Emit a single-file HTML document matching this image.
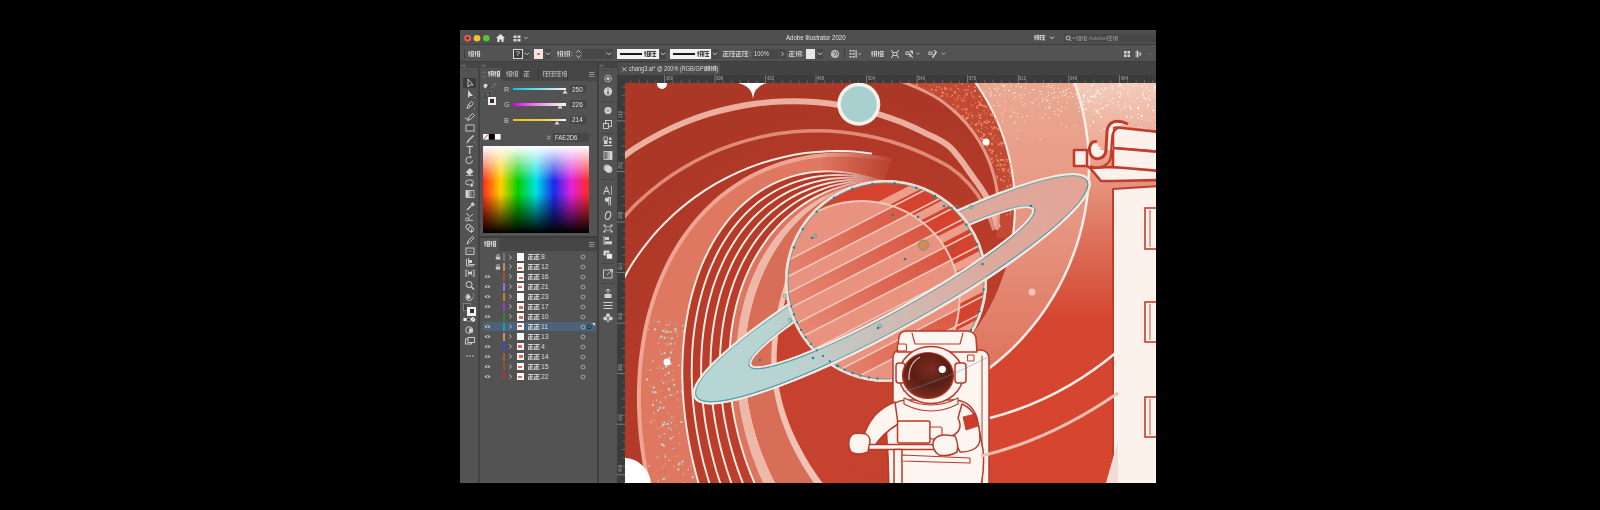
<!DOCTYPE html><html><head><meta charset="utf-8"><style>
html,body{margin:0;padding:0;}
body{width:1600px;height:510px;background:#000;position:relative;overflow:hidden;font-family:"Liberation Sans",sans-serif;}
.t{position:absolute;white-space:nowrap;line-height:1;font-family:"Liberation Sans",sans-serif;}
svg{position:absolute;overflow:visible;}
</style></head><body>
<div style="position:absolute;left:460px;top:30px;width:696px;height:453px;background:#535353;"></div><div style="position:absolute;left:460px;top:30px;width:696px;height:15px;background:#4f4f4f;border-radius:3px 3px 0 0;"></div><div style="position:absolute;left:460px;top:44px;width:696px;height:1px;background:#3d3d3d;"></div><div style="position:absolute;left:460px;top:45px;width:696px;height:16px;background:#535353;"></div><div style="position:absolute;left:460px;top:61px;width:696px;height:1px;background:#3f3f3f;"></div><div style="position:absolute;left:460px;top:62px;width:157px;height:6px;background:#464646;"></div><div style="position:absolute;left:599px;top:62px;width:557px;height:13px;background:#434343;"></div><div style="position:absolute;left:460px;top:68px;width:18px;height:415px;background:#535353;"></div><div style="position:absolute;left:478px;top:68px;width:2px;height:415px;background:#434343;"></div><div style="position:absolute;left:480px;top:68px;width:117px;height:415px;background:#535353;"></div><div style="position:absolute;left:597px;top:62px;width:2px;height:421px;background:#3e3e3e;"></div><div style="position:absolute;left:599px;top:68px;width:18px;height:415px;background:#535353;"></div><div style="position:absolute;left:617px;top:75px;width:8px;height:408px;background:#3b3b3b;"></div><div style="position:absolute;left:617px;top:75px;width:539px;height:8px;background:#3b3b3b;"></div><svg style="left:625px;top:83px;" width="531" height="400" viewBox="625 83 531 400"><defs>
<clipPath id="cv"><rect x="625" y="83" width="531" height="400"/></clipPath>
<linearGradient id="gH" x1="0" y1="83" x2="0" y2="320" gradientUnits="userSpaceOnUse">
 <stop offset="0" stop-color="#f2cbbb"/><stop offset="0.3" stop-color="#eba58f"/><stop offset="0.62" stop-color="#df7660"/><stop offset="1" stop-color="#d5452f"/></linearGradient>
<linearGradient id="gF" x1="0" y1="83" x2="0" y2="370" gradientUnits="userSpaceOnUse">
 <stop offset="0" stop-color="#eaa892"/><stop offset="0.5" stop-color="#e69580"/><stop offset="1" stop-color="#de745c"/></linearGradient>
<linearGradient id="gRing" x1="700" y1="0" x2="1090" y2="0" gradientUnits="userSpaceOnUse">
 <stop offset="0" stop-color="#b4d6d4"/><stop offset="0.22" stop-color="#b8d4d2"/><stop offset="0.45" stop-color="#cdbdb6"/><stop offset="0.7" stop-color="#dcaa9e"/><stop offset="1" stop-color="#e3a496"/></linearGradient>
<clipPath id="sph"><circle cx="887" cy="281" r="99"/></clipPath>
<radialGradient id="gVisor" cx="0.4" cy="0.35" r="0.7">
 <stop offset="0" stop-color="#9a4030"/><stop offset="0.6" stop-color="#5e1e14"/><stop offset="1" stop-color="#3a120c"/></radialGradient>
</defs><g clip-path="url(#cv)"><radialGradient id="gBase" cx="880" cy="420" r="330" gradientUnits="userSpaceOnUse"><stop offset="0" stop-color="#c8432f"/><stop offset="0.6" stop-color="#b93c2a"/><stop offset="1" stop-color="#ab3726"/></radialGradient><rect x="620" y="78" width="540" height="410" fill="url(#gBase)"/><clipPath id="outG"><path d="M500 -100 H1200 V600 H500 Z M836.0 167.0 m-253.0 0 a253.0 253.0 0 1 0 506.0 0 a253.0 253.0 0 1 0 -506.0 0 Z" clip-rule="evenodd"/></clipPath><rect x="960" y="78" width="200" height="412" fill="url(#gH)" clip-path="url(#outG)"/><clipPath id="inG"><circle cx="836.0" cy="167.0" r="253.0"/></clipPath><clipPath id="outE"><path clip-rule="evenodd" d="M500 -100 H1200 V600 H500 Z M801.2 206.3 m-213.7 0 a213.7 213.7 0 1 0 427.4 0 a213.7 213.7 0 1 0 -427.4 0 Z"/></clipPath><clipPath id="outA2"><path clip-rule="evenodd" d="M500 -100 H1200 V600 H500 Z M864.4 210.7 m-134.1 0 a134.1 134.1 0 1 0 268.2 0 a134.1 134.1 0 1 0 -268.2 0 Z"/></clipPath><clipPath id="inE"><circle cx="801.2" cy="206.3" r="213.7"/></clipPath><g clip-path="url(#inG)"><g clip-path="url(#outE)"><rect x="900" y="78" width="260" height="420" fill="url(#gF)"/></g></g><g clip-path="url(#inE)"><g clip-path="url(#outA2)"><rect x="880" y="78" width="200" height="160" fill="#c24a34"/></g></g><path d="M612.0 164.9 C616.0 162.0 628.1 152.8 636.1 147.6 C644.2 142.3 652.2 137.8 660.3 133.6 C668.3 129.4 676.4 125.8 684.4 122.5 C692.5 119.2 700.5 116.4 708.6 113.9 C716.6 111.5 724.7 109.4 732.7 107.7 C740.8 106.0 748.8 104.6 756.9 103.6 C764.9 102.6 773.0 101.9 781.0 101.6 C789.0 101.2 797.1 101.2 805.1 101.5 C813.2 101.9 821.2 102.5 829.3 103.5 C837.3 104.6 845.4 105.9 853.4 107.6 C861.5 109.3 869.5 111.4 877.6 113.8 C885.6 116.3 893.7 119.1 901.7 122.3 C909.8 125.6 917.8 129.2 925.9 133.4 C933.9 137.5 942.1 140.0 950.0 147.3 C957.9 154.5 966.7 168.2 973.0 177.0 C979.3 185.8 983.8 191.5 988.0 200.0 C992.2 208.5 996.3 223.3 998.0 228.0" stroke="#eaaf9e" stroke-width="6" fill="none"/><path d="M864.4 70.0 C871.4 72.2 894.6 78.9 906.4 83.3 C918.1 87.8 927.2 92.2 935.0 96.7 C942.7 101.1 947.8 105.6 953.0 110.0 C958.2 114.4 962.3 118.9 966.1 123.3 C970.0 127.8 973.2 132.2 976.2 136.7 C979.2 141.1 981.7 145.6 984.0 150.0 C986.2 154.4 988.2 158.9 989.9 163.3 C991.5 167.8 992.9 172.2 994.1 176.7 C995.3 181.1 996.2 185.6 996.9 190.0 C997.6 194.4 998.1 198.9 998.3 203.3 C998.5 207.8 998.6 212.2 998.4 216.7 C998.2 221.1 997.3 227.8 997.1 230.0" stroke="#e3988a" stroke-width="3" fill="none"/><path d="M612.0 231.0 C616.0 226.5 628.1 212.0 636.1 204.1 C644.2 196.2 652.2 189.5 660.3 183.4 C668.3 177.2 676.4 172.0 684.4 167.2 C692.5 162.4 700.5 158.2 708.6 154.5 C716.6 150.8 724.7 147.6 732.7 144.9 C740.8 142.1 748.8 139.8 756.9 137.9 C764.9 135.9 773.0 134.4 781.0 133.3 C789.0 132.2 797.1 131.4 805.1 131.1 C813.2 130.7 821.2 130.7 829.3 131.1 C837.3 131.5 845.4 132.2 853.4 133.4 C861.5 134.5 869.5 136.0 877.6 138.0 C885.6 139.9 893.7 142.2 901.7 145.0 C909.8 147.8 917.8 151.0 925.9 154.7 C933.9 158.4 942.8 162.5 950.0 167.4 C957.2 172.3 963.3 177.7 969.0 184.0 C974.7 190.3 979.8 197.3 984.0 205.0 C988.2 212.7 992.3 225.8 994.0 230.0" stroke="#e08a78" stroke-width="3.5" fill="none"/><path d="M605.0 323.3 C608.7 314.8 619.8 286.0 627.2 272.2 C634.7 258.3 642.1 249.3 649.5 240.0 C656.9 230.7 664.3 223.3 671.8 216.3 C679.2 209.3 686.6 203.4 694.0 197.9 C701.4 192.4 708.8 187.7 716.2 183.4 C723.7 179.1 731.1 175.4 738.5 172.1 C745.9 168.8 753.3 165.9 760.8 163.4 C768.2 161.0 775.6 158.9 783.0 157.2 C790.4 155.5 797.8 154.1 805.2 153.1 C812.7 152.2 820.1 151.5 827.5 151.2 C834.9 150.9 842.3 150.9 849.8 151.3 C857.2 151.7 868.3 153.1 872.0 153.5" stroke="#fbeee8" stroke-width="2" fill="none"/><path d="M965.8 70.0 C967.7 72.5 973.7 80.0 977.1 85.0 C980.6 90.0 983.7 95.0 986.6 100.0 C989.5 105.0 992.0 110.0 994.4 115.0 C996.8 120.0 998.9 125.0 1000.8 130.0 C1002.7 135.0 1004.4 140.0 1005.9 145.0 C1007.4 150.0 1008.7 155.0 1009.8 160.0 C1010.9 165.0 1011.9 170.0 1012.6 175.0 C1013.3 180.0 1013.9 185.0 1014.3 190.0 C1014.7 195.0 1014.9 200.0 1014.9 205.0 C1014.9 210.0 1014.8 215.0 1014.5 220.0 C1014.1 225.0 1013.6 230.0 1013.0 235.0 C1012.3 240.0 1010.8 247.5 1010.4 250.0" stroke="#fbeee8" stroke-width="2" fill="none"/><path d="M1069.7 70.0 C1070.9 73.4 1075.0 83.8 1077.2 90.6 C1079.4 97.5 1081.2 104.4 1082.8 111.2 C1084.3 118.1 1085.6 125.0 1086.5 131.9 C1087.5 138.8 1088.2 145.6 1088.6 152.5 C1089.0 159.4 1089.1 166.2 1088.9 173.1 C1088.8 180.0 1088.3 186.9 1087.6 193.8 C1086.8 200.6 1085.8 207.5 1084.5 214.4 C1083.2 221.2 1081.6 228.1 1079.7 235.0 C1077.8 241.9 1075.6 248.8 1073.0 255.6 C1070.4 262.5 1067.5 269.4 1064.2 276.2 C1060.9 283.1 1057.3 290.0 1053.1 296.9 C1049.0 303.8 1044.5 310.6 1039.4 317.5 C1034.2 324.4 1028.7 331.2 1022.3 338.1 C1016.0 345.0 1009.2 351.9 1001.0 358.8 C992.9 365.6 984.6 372.5 973.5 379.4 C962.4 386.2 941.1 396.6 934.6 400.0" stroke="#fbeee8" stroke-width="2.5" fill="none"/><linearGradient id="gmD" x1="600" y1="0" x2="1000" y2="0" gradientUnits="userSpaceOnUse"><stop offset="0" stop-color="#fff"/><stop offset="0.55" stop-color="#fff"/><stop offset="0.75" stop-color="#000"/></linearGradient><mask id="mD" maskUnits="userSpaceOnUse" x="600" y="70" width="560" height="420"><rect x="600" y="70" width="560" height="420" fill="url(#gmD)"/></mask><g mask="url(#mD)"><path d="M1009.0 821.9 L985.7 822.2 L962.3 820.1 L939.2 815.7 L916.4 809.2 L894.3 800.8 L873.0 790.8 L852.7 779.4 L833.4 766.9 L815.2 753.5 L798.2 739.4 L782.3 724.8 L767.6 709.8 L754.0 694.7 L741.4 679.5 L729.9 664.3 L719.4 649.2 L709.8 634.3 L701.1 619.6 L693.1 605.2 L686.0 591.0 L679.5 577.2 L673.7 563.7 L668.4 550.6 L663.8 537.7 L659.6 525.3 L655.9 513.1 L652.7 501.2 L649.8 489.7 L647.4 478.5 L645.3 467.5 L643.5 456.8 L642.1 446.4 L640.9 436.3 L640.0 426.3 L639.4 416.6 L639.0 407.2 L638.9 397.9 L639.0 388.8 L639.3 379.9 L639.8 371.2 L640.5 362.6 L641.5 354.3 L642.6 346.0 L643.9 337.9 L645.4 330.0 L647.1 322.2 L649.0 314.5 L651.1 307.0 L653.4 299.6 L655.8 292.3 L658.5 285.1 L661.4 278.1 L664.4 271.2 L667.6 264.4 L671.1 257.8 L674.7 251.3 L678.6 244.9 L682.6 238.7 L686.9 232.6 L691.3 226.8 L696.0 221.0 L700.8 215.5 L705.9 210.2 L711.2 205.0 L716.6 200.1 L722.2 195.3 L728.1 190.8 L734.1 186.6 L740.2 182.6 L746.6 178.8 L753.1 175.3 L759.7 172.1 L766.4 169.1 L773.3 166.4 L780.3 164.0 L787.4 161.8 L794.6 160.0 L801.8 158.4 L809.1 157.1 L816.5 156.1 L823.9 155.3 L831.4 154.8 L838.9 154.6 L846.4 154.7 L853.9 155.0 L861.5 155.5 L869.0 156.4 L876.6 157.4 L884.2 158.7 L891.8 160.3 L883.7 182.4 L877.4 180.1 L871.0 178.0 L864.6 176.2 L858.0 174.7 L851.4 173.4 L844.7 172.4 L838.0 171.8 L831.2 171.4 L824.5 171.4 L817.7 171.8 L811.0 172.4 L804.3 173.5 L797.7 174.9 L791.2 176.7 L784.8 178.9 L778.5 181.4 L772.4 184.2 L766.5 187.3 L760.8 190.8 L755.3 194.5 L750.0 198.5 L744.9 202.8 L740.1 207.2 L735.5 211.9 L731.1 216.7 L727.0 221.7 L723.1 226.8 L719.5 232.0 L716.0 237.3 L712.8 242.8 L709.8 248.2 L707.0 253.8 L704.3 259.4 L701.9 265.0 L699.6 270.7 L697.5 276.5 L695.6 282.2 L693.8 288.1 L692.1 293.9 L690.6 299.8 L689.2 305.7 L688.0 311.7 L686.9 317.8 L685.9 323.8 L685.0 330.0 L684.3 336.2 L683.6 342.5 L683.1 348.9 L682.7 355.4 L682.5 362.0 L682.3 368.6 L682.3 375.5 L682.5 382.4 L682.7 389.5 L683.2 396.7 L683.7 404.2 L684.5 411.8 L685.4 419.6 L686.5 427.6 L687.8 435.9 L689.3 444.4 L691.1 453.2 L693.1 462.2 L695.4 471.6 L698.0 481.2 L701.0 491.2 L704.3 501.6 L708.1 512.2 L712.3 523.3 L717.0 534.7 L722.3 546.5 L728.2 558.6 L734.8 571.0 L742.1 583.8 L750.1 596.8 L759.1 609.9 L768.9 623.1 L779.7 636.3 L791.4 649.3 L804.2 662.0 L818.0 674.1 L832.8 685.4 L848.5 695.6 L865.0 704.6 L882.2 711.9 L899.9 717.4 L917.8 720.8 L935.8 721.9 L953.6 720.7 L970.8 716.9 Z" fill="#df7860"/><path d="M1009.0 821.9 L985.7 822.2 L962.3 820.1 L939.2 815.7 L916.4 809.2 L894.3 800.8 L873.0 790.8 L852.7 779.4 L833.4 766.9 L815.2 753.5 L798.2 739.4 L782.3 724.8 L767.6 709.8 L754.0 694.7 L741.4 679.5 L729.9 664.3 L719.4 649.2 L709.8 634.3 L701.1 619.6 L693.1 605.2 L686.0 591.0 L679.5 577.2 L673.7 563.7 L668.4 550.6 L663.8 537.7 L659.6 525.3 L655.9 513.1 L652.7 501.2 L649.8 489.7 L647.4 478.5 L645.3 467.5 L643.5 456.8 L642.1 446.4 L640.9 436.3 L640.0 426.3 L639.4 416.6 L639.0 407.2 L638.9 397.9 L639.0 388.8 L639.3 379.9 L639.8 371.2 L640.5 362.6 L641.5 354.3 L642.6 346.0 L643.9 337.9 L645.4 330.0 L647.1 322.2 L649.0 314.5 L651.1 307.0 L653.4 299.6 L655.8 292.3 L658.5 285.1 L661.4 278.1 L664.4 271.2 L667.6 264.4 L671.1 257.8 L674.7 251.3 L678.6 244.9 L682.6 238.7 L686.9 232.6 L691.3 226.8 L696.0 221.0 L700.8 215.5 L705.9 210.2 L711.2 205.0 L716.6 200.1 L722.2 195.3 L728.1 190.8 L734.1 186.6 L740.2 182.6 L746.6 178.8 L753.1 175.3 L759.7 172.1 L766.4 169.1 L773.3 166.4 L780.3 164.0 L787.4 161.8 L794.6 160.0 L801.8 158.4 L809.1 157.1 L816.5 156.1 L823.9 155.3 L831.4 154.8 L838.9 154.6 L846.4 154.7 L853.9 155.0 L861.5 155.5 L869.0 156.4 L876.6 157.4 L884.2 158.7 L891.8 160.3" fill="none" stroke="#eda594" stroke-width="4"/><rect x="701.4" y="538.6" width="1.5" height="1.5" fill="#b8d8d4"/><rect x="678.9" y="432.7" width="1" height="1" fill="#b8d8d4"/><rect x="683.5" y="498.9" width="1" height="1" fill="#b8d8d4"/><rect x="668.1" y="337.3" width="1" height="1" fill="#b8d8d4"/><rect x="648.3" y="465.3" width="1.5" height="1.5" fill="#b8d8d4"/><rect x="696.7" y="497.1" width="1" height="1" fill="#b8d8d4"/><rect x="771.2" y="678.8" width="1" height="1" fill="#b8d8d4"/><rect x="663.5" y="433.3" width="1.5" height="1.5" fill="#b8d8d4"/><rect x="683.3" y="482.0" width="1" height="1" fill="#b8d8d4"/><rect x="772.4" y="675.8" width="1.5" height="1.5" fill="#b8d8d4"/><rect x="655.8" y="399.5" width="1.5" height="1.5" fill="#b8d8d4"/><rect x="687.6" y="468.8" width="1.5" height="1.5" fill="#b8d8d4"/><rect x="699.3" y="543.6" width="2" height="2" fill="#b8d8d4"/><rect x="789.3" y="671.6" width="1.5" height="1.5" fill="#b8d8d4"/><rect x="670.7" y="421.9" width="1.5" height="1.5" fill="#b8d8d4"/><rect x="671.0" y="394.4" width="1" height="1" fill="#b8d8d4"/><rect x="668.9" y="483.6" width="1" height="1" fill="#b8d8d4"/><rect x="690.5" y="502.3" width="1.5" height="1.5" fill="#b8d8d4"/><rect x="660.8" y="353.4" width="1.5" height="1.5" fill="#b8d8d4"/><rect x="676.2" y="398.6" width="1" height="1" fill="#b8d8d4"/><rect x="739.5" y="627.8" width="2" height="2" fill="#b8d8d4"/><rect x="664.7" y="365.6" width="1.5" height="1.5" fill="#b8d8d4"/><rect x="673.8" y="330.1" width="1" height="1" fill="#b8d8d4"/><rect x="691.8" y="476.4" width="2" height="2" fill="#b8d8d4"/><rect x="669.4" y="529.3" width="1" height="1" fill="#b8d8d4"/><rect x="735.2" y="599.6" width="1" height="1" fill="#b8d8d4"/><rect x="815.3" y="709.9" width="1.5" height="1.5" fill="#b8d8d4"/><rect x="670.7" y="428.9" width="1.5" height="1.5" fill="#b8d8d4"/><rect x="669.6" y="437.5" width="2" height="2" fill="#b8d8d4"/><rect x="658.1" y="321.1" width="1.5" height="1.5" fill="#b8d8d4"/><rect x="665.1" y="397.3" width="1" height="1" fill="#b8d8d4"/><rect x="736.7" y="603.0" width="1.5" height="1.5" fill="#b8d8d4"/><rect x="666.4" y="330.8" width="1.5" height="1.5" fill="#b8d8d4"/><rect x="677.9" y="464.0" width="1.5" height="1.5" fill="#b8d8d4"/><rect x="660.9" y="426.4" width="1" height="1" fill="#b8d8d4"/><rect x="667.8" y="372.2" width="1.5" height="1.5" fill="#b8d8d4"/><rect x="652.0" y="403.9" width="2" height="2" fill="#b8d8d4"/><rect x="711.0" y="598.6" width="1.5" height="1.5" fill="#b8d8d4"/><rect x="648.1" y="328.9" width="1" height="1" fill="#b8d8d4"/><rect x="674.8" y="495.7" width="1" height="1" fill="#b8d8d4"/><rect x="683.4" y="473.3" width="1" height="1" fill="#b8d8d4"/><rect x="670.3" y="363.6" width="1" height="1" fill="#b8d8d4"/><rect x="686.5" y="493.4" width="2" height="2" fill="#b8d8d4"/><rect x="676.1" y="492.4" width="1" height="1" fill="#b8d8d4"/><rect x="751.3" y="648.3" width="1" height="1" fill="#b8d8d4"/><rect x="659.5" y="435.3" width="1" height="1" fill="#b8d8d4"/><rect x="817.6" y="720.9" width="1" height="1" fill="#b8d8d4"/><rect x="682.0" y="463.8" width="1" height="1" fill="#b8d8d4"/><rect x="799.8" y="703.5" width="1.5" height="1.5" fill="#b8d8d4"/><rect x="715.1" y="591.1" width="2" height="2" fill="#b8d8d4"/><rect x="667.6" y="413.1" width="1" height="1" fill="#b8d8d4"/><rect x="668.6" y="459.8" width="1" height="1" fill="#b8d8d4"/><rect x="661.2" y="380.1" width="1" height="1" fill="#b8d8d4"/><rect x="664.2" y="454.8" width="1" height="1" fill="#b8d8d4"/><rect x="671.6" y="348.9" width="1" height="1" fill="#b8d8d4"/><rect x="652.7" y="386.5" width="2" height="2" fill="#b8d8d4"/><rect x="699.0" y="548.7" width="1" height="1" fill="#b8d8d4"/><rect x="653.1" y="412.2" width="1.5" height="1.5" fill="#b8d8d4"/><rect x="669.7" y="342.7" width="2" height="2" fill="#b8d8d4"/><rect x="752.2" y="629.3" width="1" height="1" fill="#b8d8d4"/><rect x="726.5" y="588.5" width="1" height="1" fill="#b8d8d4"/><rect x="660.3" y="335.7" width="2" height="2" fill="#b8d8d4"/><rect x="721.6" y="608.6" width="2" height="2" fill="#b8d8d4"/><rect x="740.4" y="633.9" width="2" height="2" fill="#b8d8d4"/><rect x="692.3" y="553.5" width="1.5" height="1.5" fill="#b8d8d4"/><rect x="814.2" y="725.3" width="1.5" height="1.5" fill="#b8d8d4"/><rect x="667.8" y="474.2" width="1" height="1" fill="#b8d8d4"/><rect x="670.3" y="331.1" width="1.5" height="1.5" fill="#b8d8d4"/><rect x="668.3" y="389.3" width="1.5" height="1.5" fill="#b8d8d4"/><rect x="675.5" y="522.4" width="1.5" height="1.5" fill="#b8d8d4"/><rect x="787.6" y="687.1" width="1" height="1" fill="#b8d8d4"/><rect x="710.7" y="568.3" width="1" height="1" fill="#b8d8d4"/><rect x="788.9" y="682.4" width="1.5" height="1.5" fill="#b8d8d4"/><rect x="654.0" y="320.6" width="1" height="1" fill="#b8d8d4"/><rect x="676.8" y="335.7" width="1" height="1" fill="#b8d8d4"/><rect x="731.4" y="616.6" width="1" height="1" fill="#b8d8d4"/><rect x="715.0" y="565.6" width="1" height="1" fill="#b8d8d4"/><rect x="815.4" y="711.9" width="2" height="2" fill="#b8d8d4"/><rect x="759.7" y="673.1" width="2" height="2" fill="#b8d8d4"/><rect x="691.3" y="578.2" width="1" height="1" fill="#b8d8d4"/><rect x="659.6" y="366.2" width="1" height="1" fill="#b8d8d4"/><rect x="649.7" y="369.1" width="1.5" height="1.5" fill="#b8d8d4"/><rect x="690.9" y="488.8" width="1.5" height="1.5" fill="#b8d8d4"/><rect x="672.3" y="436.0" width="1" height="1" fill="#b8d8d4"/><rect x="750.4" y="653.3" width="1.5" height="1.5" fill="#b8d8d4"/><rect x="719.3" y="582.1" width="1.5" height="1.5" fill="#b8d8d4"/><rect x="739.3" y="630.6" width="1" height="1" fill="#b8d8d4"/><rect x="673.5" y="466.0" width="1" height="1" fill="#b8d8d4"/><rect x="747.3" y="653.6" width="1" height="1" fill="#b8d8d4"/><rect x="662.8" y="444.8" width="2" height="2" fill="#b8d8d4"/><rect x="660.1" y="390.5" width="1" height="1" fill="#b8d8d4"/><rect x="801.4" y="716.2" width="2" height="2" fill="#b8d8d4"/><rect x="665.0" y="396.7" width="1" height="1" fill="#b8d8d4"/><rect x="659.3" y="368.6" width="1" height="1" fill="#b8d8d4"/><rect x="779.4" y="648.7" width="2" height="2" fill="#b8d8d4"/><rect x="672.3" y="448.3" width="1" height="1" fill="#b8d8d4"/><rect x="690.3" y="465.8" width="1" height="1" fill="#b8d8d4"/><rect x="663.5" y="423.6" width="1.5" height="1.5" fill="#b8d8d4"/><rect x="667.6" y="371.7" width="2" height="2" fill="#b8d8d4"/><rect x="669.6" y="484.4" width="1.5" height="1.5" fill="#b8d8d4"/><rect x="651.9" y="391.3" width="1.5" height="1.5" fill="#b8d8d4"/><rect x="657.3" y="428.0" width="1" height="1" fill="#b8d8d4"/><rect x="817.8" y="698.9" width="2" height="2" fill="#b8d8d4"/><rect x="711.0" y="569.3" width="2" height="2" fill="#b8d8d4"/><rect x="673.1" y="383.8" width="2" height="2" fill="#b8d8d4"/><rect x="816.5" y="711.9" width="2" height="2" fill="#b8d8d4"/><rect x="657.1" y="320.8" width="1" height="1" fill="#b8d8d4"/><rect x="756.3" y="622.8" width="1" height="1" fill="#b8d8d4"/><rect x="660.9" y="443.4" width="2" height="2" fill="#b8d8d4"/><rect x="659.4" y="350.1" width="1" height="1" fill="#b8d8d4"/><rect x="663.6" y="336.8" width="2" height="2" fill="#b8d8d4"/><rect x="698.7" y="568.5" width="1.5" height="1.5" fill="#b8d8d4"/><rect x="678.3" y="364.6" width="1.5" height="1.5" fill="#b8d8d4"/><rect x="722.8" y="566.5" width="1" height="1" fill="#b8d8d4"/><rect x="685.8" y="541.2" width="1.5" height="1.5" fill="#b8d8d4"/><rect x="666.5" y="423.0" width="2" height="2" fill="#b8d8d4"/><rect x="677.3" y="468.5" width="2" height="2" fill="#b8d8d4"/><rect x="674.3" y="343.7" width="1" height="1" fill="#b8d8d4"/><rect x="802.4" y="699.3" width="1.5" height="1.5" fill="#b8d8d4"/><rect x="667.8" y="488.5" width="1" height="1" fill="#b8d8d4"/><rect x="674.9" y="496.0" width="1.5" height="1.5" fill="#b8d8d4"/><rect x="688.4" y="505.6" width="2" height="2" fill="#b8d8d4"/><rect x="761.4" y="660.1" width="1" height="1" fill="#b8d8d4"/><rect x="674.5" y="493.9" width="2" height="2" fill="#b8d8d4"/><rect x="751.0" y="637.4" width="1" height="1" fill="#b8d8d4"/><rect x="696.7" y="530.0" width="1" height="1" fill="#b8d8d4"/><rect x="655.3" y="391.6" width="1.5" height="1.5" fill="#b8d8d4"/><rect x="667.6" y="388.0" width="1.5" height="1.5" fill="#b8d8d4"/><rect x="759.4" y="674.4" width="1.5" height="1.5" fill="#b8d8d4"/><rect x="663.7" y="351.9" width="2" height="2" fill="#b8d8d4"/><rect x="674.6" y="328.1" width="2" height="2" fill="#b8d8d4"/><rect x="654.1" y="328.3" width="2" height="2" fill="#b8d8d4"/><rect x="665.8" y="330.1" width="1" height="1" fill="#b8d8d4"/><rect x="670.9" y="337.4" width="2" height="2" fill="#b8d8d4"/><rect x="772.7" y="669.6" width="1" height="1" fill="#b8d8d4"/><rect x="663.6" y="421.6" width="1.5" height="1.5" fill="#b8d8d4"/><rect x="658.0" y="480.3" width="1" height="1" fill="#b8d8d4"/><rect x="691.8" y="517.6" width="1" height="1" fill="#b8d8d4"/><rect x="676.5" y="455.6" width="1" height="1" fill="#b8d8d4"/><rect x="676.4" y="489.4" width="2" height="2" fill="#b8d8d4"/><rect x="662.8" y="406.7" width="2" height="2" fill="#b8d8d4"/><rect x="773.6" y="666.2" width="1.5" height="1.5" fill="#b8d8d4"/><rect x="727.7" y="589.0" width="1" height="1" fill="#b8d8d4"/><rect x="816.0" y="708.1" width="1" height="1" fill="#b8d8d4"/><rect x="737.0" y="601.0" width="1" height="1" fill="#b8d8d4"/><rect x="709.8" y="573.2" width="2" height="2" fill="#b8d8d4"/><rect x="675.5" y="425.0" width="1" height="1" fill="#b8d8d4"/><rect x="657.7" y="342.7" width="1" height="1" fill="#b8d8d4"/><rect x="682.9" y="514.5" width="1.5" height="1.5" fill="#b8d8d4"/><rect x="659.7" y="401.4" width="1.5" height="1.5" fill="#b8d8d4"/><rect x="728.6" y="621.6" width="2" height="2" fill="#b8d8d4"/><rect x="656.7" y="367.7" width="1" height="1" fill="#b8d8d4"/><rect x="818.5" y="711.1" width="1" height="1" fill="#b8d8d4"/><rect x="695.8" y="513.9" width="2" height="2" fill="#b8d8d4"/><rect x="773.9" y="671.9" width="1.5" height="1.5" fill="#b8d8d4"/><rect x="689.8" y="540.1" width="2" height="2" fill="#b8d8d4"/><rect x="711.6" y="594.7" width="1" height="1" fill="#b8d8d4"/><rect x="713.1" y="596.4" width="1.5" height="1.5" fill="#b8d8d4"/><rect x="682.1" y="549.4" width="1.5" height="1.5" fill="#b8d8d4"/><rect x="702.8" y="564.5" width="1" height="1" fill="#b8d8d4"/><rect x="814.9" y="730.8" width="2" height="2" fill="#b8d8d4"/><rect x="662.4" y="330.0" width="2" height="2" fill="#b8d8d4"/><rect x="744.3" y="621.4" width="1" height="1" fill="#b8d8d4"/><rect x="663.1" y="444.3" width="1" height="1" fill="#b8d8d4"/><rect x="678.5" y="462.6" width="2" height="2" fill="#b8d8d4"/><rect x="788.9" y="666.5" width="1" height="1" fill="#b8d8d4"/><rect x="669.6" y="321.5" width="1" height="1" fill="#b8d8d4"/><rect x="738.8" y="629.6" width="1" height="1" fill="#b8d8d4"/><rect x="668.7" y="388.1" width="1.5" height="1.5" fill="#b8d8d4"/><rect x="701.2" y="586.1" width="1.5" height="1.5" fill="#b8d8d4"/><rect x="730.5" y="614.6" width="1" height="1" fill="#b8d8d4"/><rect x="702.1" y="541.4" width="1" height="1" fill="#b8d8d4"/><rect x="670.9" y="416.4" width="1" height="1" fill="#b8d8d4"/><rect x="670.6" y="363.1" width="1.5" height="1.5" fill="#b8d8d4"/><rect x="731.3" y="582.0" width="1" height="1" fill="#b8d8d4"/><rect x="692.7" y="519.3" width="1.5" height="1.5" fill="#b8d8d4"/><rect x="662.9" y="382.5" width="1.5" height="1.5" fill="#b8d8d4"/><rect x="722.5" y="599.3" width="1" height="1" fill="#b8d8d4"/><rect x="682.3" y="324.9" width="1.5" height="1.5" fill="#b8d8d4"/><rect x="686.6" y="509.0" width="1" height="1" fill="#b8d8d4"/><rect x="731.7" y="607.0" width="2" height="2" fill="#b8d8d4"/><rect x="652.1" y="419.6" width="1" height="1" fill="#b8d8d4"/><rect x="682.0" y="515.5" width="1" height="1" fill="#b8d8d4"/><rect x="664.6" y="456.2" width="1.5" height="1.5" fill="#b8d8d4"/><rect x="671.5" y="418.4" width="1" height="1" fill="#b8d8d4"/><rect x="681.2" y="499.0" width="1.5" height="1.5" fill="#b8d8d4"/><rect x="679.5" y="484.9" width="1" height="1" fill="#b8d8d4"/><rect x="668.5" y="420.5" width="1" height="1" fill="#b8d8d4"/><rect x="749.4" y="644.5" width="1" height="1" fill="#b8d8d4"/><rect x="758.6" y="679.9" width="1" height="1" fill="#b8d8d4"/><rect x="662.4" y="367.6" width="1.5" height="1.5" fill="#b8d8d4"/><rect x="790.5" y="670.4" width="1" height="1" fill="#b8d8d4"/><rect x="662.4" y="425.4" width="1" height="1" fill="#b8d8d4"/><rect x="665.3" y="365.7" width="2" height="2" fill="#b8d8d4"/><rect x="695.6" y="530.7" width="1" height="1" fill="#b8d8d4"/><rect x="797.8" y="722.3" width="1" height="1" fill="#b8d8d4"/><rect x="683.4" y="531.3" width="1.5" height="1.5" fill="#b8d8d4"/><rect x="662.1" y="423.6" width="2" height="2" fill="#b8d8d4"/><rect x="741.9" y="619.5" width="2" height="2" fill="#b8d8d4"/><rect x="724.1" y="596.3" width="2" height="2" fill="#b8d8d4"/><rect x="669.6" y="527.7" width="1.5" height="1.5" fill="#b8d8d4"/><rect x="769.7" y="686.4" width="1" height="1" fill="#b8d8d4"/><rect x="667.9" y="344.7" width="1" height="1" fill="#b8d8d4"/><rect x="787.3" y="696.5" width="1" height="1" fill="#b8d8d4"/><rect x="669.2" y="324.4" width="1" height="1" fill="#b8d8d4"/><rect x="765.3" y="647.6" width="1" height="1" fill="#b8d8d4"/><rect x="785.7" y="692.5" width="1" height="1" fill="#b8d8d4"/><rect x="686.6" y="564.3" width="2" height="2" fill="#b8d8d4"/><rect x="724.5" y="631.8" width="1.5" height="1.5" fill="#b8d8d4"/><rect x="691.0" y="519.6" width="1.5" height="1.5" fill="#b8d8d4"/><rect x="671.1" y="351.4" width="1" height="1" fill="#b8d8d4"/><rect x="681.0" y="376.2" width="1" height="1" fill="#b8d8d4"/><rect x="719.4" y="580.2" width="1.5" height="1.5" fill="#b8d8d4"/><rect x="716.3" y="558.6" width="2" height="2" fill="#b8d8d4"/><rect x="723.6" y="602.3" width="1.5" height="1.5" fill="#b8d8d4"/><rect x="664.6" y="374.1" width="1.5" height="1.5" fill="#b8d8d4"/><rect x="676.5" y="391.3" width="1.5" height="1.5" fill="#b8d8d4"/><rect x="658.0" y="436.0" width="1" height="1" fill="#b8d8d4"/><rect x="668.4" y="427.2" width="1.5" height="1.5" fill="#b8d8d4"/><rect x="695.1" y="573.0" width="1" height="1" fill="#b8d8d4"/><rect x="731.6" y="615.4" width="1" height="1" fill="#b8d8d4"/><rect x="816.8" y="700.2" width="1" height="1" fill="#b8d8d4"/><rect x="652.3" y="360.4" width="1.5" height="1.5" fill="#b8d8d4"/><rect x="682.5" y="330.4" width="2" height="2" fill="#b8d8d4"/><rect x="672.7" y="437.0" width="1" height="1" fill="#b8d8d4"/><rect x="674.5" y="342.2" width="1" height="1" fill="#b8d8d4"/><rect x="666.3" y="344.3" width="1" height="1" fill="#b8d8d4"/><rect x="752.7" y="635.8" width="1" height="1" fill="#b8d8d4"/><rect x="681.5" y="460.6" width="2" height="2" fill="#b8d8d4"/><rect x="680.9" y="390.5" width="2" height="2" fill="#b8d8d4"/><rect x="743.3" y="625.1" width="1" height="1" fill="#b8d8d4"/><rect x="769.2" y="629.1" width="1" height="1" fill="#b8d8d4"/><rect x="701.0" y="589.5" width="1.5" height="1.5" fill="#b8d8d4"/><rect x="713.3" y="538.6" width="1" height="1" fill="#b8d8d4"/><rect x="710.0" y="598.2" width="1" height="1" fill="#b8d8d4"/><rect x="653.8" y="391.3" width="2" height="2" fill="#b8d8d4"/><rect x="692.2" y="473.1" width="1" height="1" fill="#b8d8d4"/><rect x="678.4" y="501.7" width="1" height="1" fill="#b8d8d4"/><rect x="656.4" y="456.4" width="1" height="1" fill="#b8d8d4"/><rect x="763.2" y="641.6" width="1" height="1" fill="#b8d8d4"/><rect x="750.3" y="644.9" width="1" height="1" fill="#b8d8d4"/><rect x="673.2" y="394.4" width="1" height="1" fill="#b8d8d4"/><rect x="669.9" y="351.6" width="2" height="2" fill="#b8d8d4"/><rect x="760.7" y="654.8" width="1" height="1" fill="#b8d8d4"/><rect x="667.8" y="364.4" width="1" height="1" fill="#b8d8d4"/><rect x="751.6" y="635.3" width="1.5" height="1.5" fill="#b8d8d4"/><rect x="815.0" y="731.1" width="1.5" height="1.5" fill="#b8d8d4"/><rect x="666.4" y="343.1" width="1" height="1" fill="#b8d8d4"/><rect x="649.3" y="385.1" width="1" height="1" fill="#b8d8d4"/><rect x="689.1" y="540.5" width="1" height="1" fill="#b8d8d4"/><rect x="657.7" y="457.4" width="1" height="1" fill="#b8d8d4"/><rect x="708.6" y="571.2" width="1" height="1" fill="#b8d8d4"/><rect x="664.9" y="331.8" width="1.5" height="1.5" fill="#b8d8d4"/><rect x="678.9" y="442.7" width="1" height="1" fill="#b8d8d4"/><rect x="767.3" y="631.5" width="1" height="1" fill="#b8d8d4"/><rect x="660.1" y="436.6" width="1" height="1" fill="#b8d8d4"/><rect x="690.8" y="504.2" width="1.5" height="1.5" fill="#b8d8d4"/><rect x="720.7" y="575.9" width="1" height="1" fill="#b8d8d4"/><rect x="659.1" y="337.6" width="1" height="1" fill="#b8d8d4"/><rect x="692.1" y="538.8" width="1.5" height="1.5" fill="#b8d8d4"/><rect x="742.9" y="621.3" width="1" height="1" fill="#b8d8d4"/><rect x="755.1" y="683.0" width="1.5" height="1.5" fill="#b8d8d4"/><rect x="668.5" y="388.3" width="1" height="1" fill="#b8d8d4"/><rect x="664.8" y="328.9" width="1" height="1" fill="#b8d8d4"/><rect x="710.6" y="604.4" width="1" height="1" fill="#b8d8d4"/><rect x="675.4" y="331.2" width="1.5" height="1.5" fill="#b8d8d4"/><rect x="684.0" y="496.4" width="1" height="1" fill="#b8d8d4"/><rect x="712.1" y="564.5" width="2" height="2" fill="#b8d8d4"/><rect x="657.0" y="409.2" width="2" height="2" fill="#b8d8d4"/><rect x="814.7" y="710.0" width="2" height="2" fill="#b8d8d4"/><rect x="678.1" y="399.8" width="1" height="1" fill="#b8d8d4"/><rect x="654.3" y="419.7" width="1" height="1" fill="#b8d8d4"/><rect x="650.0" y="421.4" width="1.5" height="1.5" fill="#b8d8d4"/><rect x="711.5" y="593.5" width="1" height="1" fill="#b8d8d4"/><rect x="704.7" y="610.5" width="2" height="2" fill="#b8d8d4"/><rect x="665.2" y="476.8" width="1" height="1" fill="#b8d8d4"/><rect x="675.8" y="542.4" width="1" height="1" fill="#b8d8d4"/><rect x="719.5" y="581.0" width="1.5" height="1.5" fill="#b8d8d4"/><rect x="778.3" y="646.7" width="2" height="2" fill="#b8d8d4"/><rect x="662.7" y="478.0" width="2" height="2" fill="#b8d8d4"/><rect x="726.1" y="631.6" width="1" height="1" fill="#b8d8d4"/><rect x="652.7" y="400.8" width="1" height="1" fill="#b8d8d4"/><rect x="815.9" y="724.4" width="1.5" height="1.5" fill="#b8d8d4"/><rect x="673.9" y="447.8" width="1" height="1" fill="#b8d8d4"/><rect x="674.5" y="323.1" width="1" height="1" fill="#b8d8d4"/><rect x="763.6" y="650.9" width="1" height="1" fill="#b8d8d4"/><rect x="646.1" y="378.4" width="2" height="2" fill="#b8d8d4"/><rect x="673.4" y="494.5" width="1.5" height="1.5" fill="#b8d8d4"/><rect x="672.3" y="379.0" width="1.5" height="1.5" fill="#b8d8d4"/><rect x="665.8" y="324.1" width="1.5" height="1.5" fill="#b8d8d4"/><rect x="709.6" y="598.6" width="2" height="2" fill="#b8d8d4"/><rect x="680.4" y="421.0" width="2" height="2" fill="#b8d8d4"/><rect x="790.6" y="668.5" width="1" height="1" fill="#b8d8d4"/><rect x="664.8" y="463.6" width="1" height="1" fill="#b8d8d4"/><rect x="673.4" y="415.9" width="1" height="1" fill="#b8d8d4"/><rect x="668.5" y="356.9" width="2" height="2" fill="#b8d8d4"/><rect x="670.2" y="380.3" width="1" height="1" fill="#b8d8d4"/><rect x="677.5" y="406.8" width="1" height="1" fill="#b8d8d4"/><rect x="662.3" y="466.9" width="1" height="1" fill="#b8d8d4"/><rect x="668.4" y="460.1" width="1" height="1" fill="#b8d8d4"/><rect x="682.4" y="474.9" width="1" height="1" fill="#b8d8d4"/><rect x="657.3" y="496.2" width="2" height="2" fill="#b8d8d4"/><rect x="659.2" y="406.8" width="2" height="2" fill="#b8d8d4"/><rect x="670.5" y="545.9" width="1" height="1" fill="#b8d8d4"/><rect x="815.6" y="691.0" width="1.5" height="1.5" fill="#b8d8d4"/><rect x="672.2" y="370.1" width="1" height="1" fill="#b8d8d4"/><rect x="669.2" y="394.5" width="1.5" height="1.5" fill="#b8d8d4"/><rect x="700.7" y="544.2" width="1.5" height="1.5" fill="#b8d8d4"/><rect x="675.1" y="525.1" width="1.5" height="1.5" fill="#b8d8d4"/><rect x="688.3" y="546.2" width="1.5" height="1.5" fill="#b8d8d4"/><rect x="668.1" y="331.2" width="1.5" height="1.5" fill="#b8d8d4"/><rect x="733.2" y="613.1" width="1" height="1" fill="#b8d8d4"/><rect x="680.7" y="516.5" width="1" height="1" fill="#b8d8d4"/><rect x="687.3" y="509.8" width="1" height="1" fill="#b8d8d4"/><rect x="666.2" y="381.4" width="1" height="1" fill="#b8d8d4"/><path d="M917.9 571.4 L903.5 562.3 L890.2 552.8 L877.9 543.0 L866.7 533.3 L856.5 523.7 L847.2 514.2 L838.8 505.0 L831.3 496.1 L824.5 487.5 L818.4 479.2 L812.9 471.3 L808.0 463.6 L803.7 456.3 L799.8 449.2 L796.3 442.5 L793.3 436.0 L790.6 429.8 L788.2 423.9 L786.1 418.2 L784.3 412.8 L782.7 407.6 L781.4 402.7 L780.2 397.9 L779.2 393.4 L778.4 389.1 L777.7 385.0 L777.2 381.0 L776.7 377.2 L776.4 373.6 L776.1 370.1 L775.9 366.8 L775.8 363.6 L775.7 360.5 L775.7 357.5 L775.8 354.6 L775.9 351.9 L776.0 349.2 L776.2 346.6 L776.4 344.0 L776.6 341.6 L776.9 339.2 L777.2 336.8 L777.5 334.5 L777.8 332.2 L778.2 330.0 L778.5 327.8 L778.9 325.6 L779.3 323.5 L779.7 321.3 L780.2 319.2 L780.6 317.1 L781.0 314.9 L781.5 312.8 L782.0 310.6 L782.5 308.4 L783.0 306.1 L783.5 303.9 L784.0 301.5 L784.6 299.1 L785.2 296.6 L785.8 294.0 L786.4 291.4 L787.1 288.6 L787.9 285.7 L788.7 282.6 L789.5 279.4 L790.5 276.1 L791.6 272.6 L792.8 268.9 L794.1 265.0 L795.7 261.0 L797.4 256.7 L799.3 252.3 L801.5 247.8 L804.0 243.1 L806.7 238.2 L809.8 233.3 L813.3 228.3 L817.1 223.3 L821.3 218.3 L825.9 213.3 L830.9 208.5 L836.4 203.8 L842.2 199.3 L848.4 195.0 L855.1 191.0 L862.1 187.3 L869.4 184.0 L877.1 181.0 L885.1 178.5 L890 300 L890 500 Z" fill="#c7422e"/><path d="M944.4 644.2 L928.5 641.5 L913.0 637.3 L897.9 631.9 L883.3 625.3 L869.3 617.8 L856.1 609.4 L843.6 600.3 L832.0 590.7 L821.2 580.8 L811.3 570.6 L802.2 560.3 L793.8 550.0 L786.3 539.7 L779.4 529.6 L773.2 519.6 L767.7 509.9 L762.7 500.4 L758.2 491.2 L754.2 482.4 L750.7 473.8 L747.5 465.5 L744.7 457.5 L742.3 449.7 L740.1 442.3 L738.2 435.2 L736.6 428.3 L735.1 421.6 L733.9 415.2 L732.8 409.0 L731.9 403.0 L731.2 397.2 L730.6 391.6 L730.1 386.1 L729.7 380.8 L729.5 375.7 L729.3 370.7 L729.2 365.8 L729.3 361.0 L729.4 356.3 L729.6 351.8 L729.8 347.3 L730.2 342.8 L730.6 338.5 L731.0 334.2 L731.6 330.0 L732.2 325.8 L732.9 321.7 L733.6 317.6 L734.5 313.5 L735.4 309.5 L736.3 305.5 L737.4 301.5 L738.5 297.5 L739.7 293.5 L741.0 289.6 L742.4 285.6 L743.9 281.6 L745.5 277.6 L747.2 273.7 L749.0 269.7 L750.9 265.7 L752.9 261.7 L755.1 257.7 L757.4 253.7 L759.9 249.7 L762.5 245.7 L765.3 241.7 L768.2 237.7 L771.4 233.7 L774.7 229.8 L778.2 225.9 L781.9 222.0 L785.9 218.3 L790.0 214.6 L794.4 211.0 L798.9 207.5 L803.8 204.1 L808.8 200.9 L814.0 197.9 L819.5 195.0 L825.2 192.4 L831.1 189.9 L837.2 187.8 L843.5 185.8 L849.9 184.2 L856.5 182.8 L863.3 181.8 L870.2 181.0 L877.3 180.6 L884.4 180.5 L884.5 180.2 L877.3 180.6 L870.1 181.4 L863.1 182.5 L856.3 184.0 L849.7 185.7 L843.3 187.7 L837.1 190.0 L831.1 192.5 L825.3 195.3 L819.8 198.3 L814.5 201.4 L809.4 204.7 L804.6 208.2 L800.0 211.8 L795.7 215.5 L791.6 219.2 L787.7 223.0 L784.1 226.9 L780.7 230.8 L777.4 234.7 L774.4 238.6 L771.5 242.6 L768.8 246.5 L766.3 250.4 L763.9 254.3 L761.7 258.2 L759.6 262.0 L757.6 265.8 L755.8 269.7 L754.0 273.5 L752.4 277.2 L750.9 281.0 L749.4 284.7 L748.1 288.5 L746.8 292.2 L745.6 295.9 L744.5 299.6 L743.5 303.4 L742.5 307.1 L741.6 310.9 L740.8 314.6 L740.0 318.4 L739.3 322.2 L738.7 326.1 L738.1 330.0 L737.6 333.9 L737.1 337.9 L736.7 342.0 L736.4 346.1 L736.2 350.3 L736.0 354.6 L735.8 359.0 L735.8 363.5 L735.8 368.0 L736.0 372.7 L736.2 377.6 L736.5 382.5 L736.9 387.7 L737.5 392.9 L738.1 398.4 L738.9 404.0 L739.9 409.9 L741.0 415.9 L742.3 422.2 L743.9 428.7 L745.6 435.5 L747.6 442.5 L749.9 449.8 L752.5 457.4 L755.4 465.2 L758.7 473.4 L762.4 481.8 L766.6 490.5 L771.2 499.6 L776.5 508.8 L782.3 518.3 L788.7 528.0 L795.8 537.9 L803.7 547.8 L812.3 557.8 L821.7 567.7 L831.9 577.5 L843.0 587.0 L854.8 596.1 L867.5 604.6 L880.9 612.5 L895.1 619.5 L909.8 625.5 L925.0 630.4 L940.6 634.0 Z" fill="#dc7660"/><path d="M940.6 634.0 L925.0 630.4 L909.8 625.5 L895.1 619.5 L880.9 612.5 L867.5 604.6 L854.8 596.1 L843.0 587.0 L831.9 577.5 L821.7 567.7 L812.3 557.8 L803.7 547.8 L795.8 537.9 L788.7 528.0 L782.3 518.3 L776.5 508.8 L771.2 499.6 L766.6 490.5 L762.4 481.8 L758.7 473.4 L755.4 465.2 L752.5 457.4 L749.9 449.8 L747.6 442.5 L745.6 435.5 L743.9 428.7 L742.3 422.2 L741.0 415.9 L739.9 409.9 L738.9 404.0 L738.1 398.4 L737.5 392.9 L736.9 387.7 L736.5 382.5 L736.2 377.6 L736.0 372.7 L735.8 368.0 L735.8 363.5 L735.8 359.0 L736.0 354.6 L736.2 350.3 L736.4 346.1 L736.7 342.0 L737.1 337.9 L737.6 333.9 L738.1 330.0 L738.7 326.1 L739.3 322.2 L740.0 318.4 L740.8 314.6 L741.6 310.9 L742.5 307.1 L743.5 303.4 L744.5 299.6 L745.6 295.9 L746.8 292.2 L748.1 288.5 L749.4 284.7 L750.9 281.0 L752.4 277.2 L754.0 273.5 L755.8 269.7 L757.6 265.8 L759.6 262.0 L761.7 258.2 L763.9 254.3 L766.3 250.4 L768.8 246.5 L771.5 242.6 L774.4 238.6 L777.4 234.7 L780.7 230.8 L784.1 226.9 L787.7 223.0 L791.6 219.2 L795.7 215.5 L800.0 211.8 L804.6 208.2 L809.4 204.7 L814.5 201.4 L819.8 198.3 L825.3 195.3 L831.1 192.5 L837.1 190.0 L843.3 187.7 L849.7 185.7 L856.3 184.0 L863.1 182.5 L870.1 181.4 L877.3 180.6 L884.5 180.2 L884.7 179.8 L877.2 180.7 L870.0 182.0 L862.9 183.6 L856.0 185.6 L849.4 187.9 L843.0 190.4 L836.9 193.2 L831.0 196.2 L825.4 199.5 L820.1 202.9 L815.1 206.5 L810.3 210.2 L805.8 214.0 L801.6 217.9 L797.6 221.9 L793.9 225.9 L790.4 229.8 L787.2 233.8 L784.1 237.8 L781.3 241.8 L778.7 245.7 L776.2 249.5 L773.9 253.4 L771.7 257.1 L769.7 260.9 L767.8 264.6 L766.0 268.2 L764.3 271.8 L762.8 275.3 L761.3 278.8 L759.9 282.3 L758.6 285.8 L757.4 289.2 L756.2 292.6 L755.1 296.0 L754.1 299.3 L753.1 302.7 L752.2 306.1 L751.4 309.4 L750.6 312.8 L749.9 316.2 L749.2 319.6 L748.5 323.0 L748.0 326.5 L747.4 330.0 L747.0 333.5 L746.5 337.1 L746.1 340.8 L745.8 344.5 L745.6 348.3 L745.4 352.2 L745.2 356.1 L745.2 360.1 L745.1 364.3 L745.2 368.5 L745.4 372.9 L745.6 377.4 L746.0 382.1 L746.4 386.9 L747.0 391.8 L747.6 397.0 L748.5 402.3 L749.4 407.8 L750.6 413.5 L751.9 419.5 L753.4 425.7 L755.2 432.1 L757.2 438.8 L759.5 445.8 L762.1 453.0 L765.1 460.6 L768.4 468.3 L772.2 476.4 L776.4 484.8 L781.1 493.4 L786.3 502.3 L792.2 511.3 L798.7 520.6 L805.8 530.0 L813.7 539.5 L822.3 549.1 L831.8 558.6 L842.0 567.9 L853.1 577.0 L864.9 585.8 L877.6 594.0 L891.1 601.7 L905.2 608.6 L920.0 614.6 L935.3 619.4 Z" fill="#eeb8a8"/><path d="M935.3 619.4 L920.0 614.6 L905.2 608.6 L891.1 601.7 L877.6 594.0 L864.9 585.8 L853.1 577.0 L842.0 567.9 L831.8 558.6 L822.3 549.1 L813.7 539.5 L805.8 530.0 L798.7 520.6 L792.2 511.3 L786.3 502.3 L781.1 493.4 L776.4 484.8 L772.2 476.4 L768.4 468.3 L765.1 460.6 L762.1 453.0 L759.5 445.8 L757.2 438.8 L755.2 432.1 L753.4 425.7 L751.9 419.5 L750.6 413.5 L749.4 407.8 L748.5 402.3 L747.6 397.0 L747.0 391.8 L746.4 386.9 L746.0 382.1 L745.6 377.4 L745.4 372.9 L745.2 368.5 L745.1 364.3 L745.2 360.1 L745.2 356.1 L745.4 352.2 L745.6 348.3 L745.8 344.5 L746.1 340.8 L746.5 337.1 L747.0 333.5 L747.4 330.0 L748.0 326.5 L748.5 323.0 L749.2 319.6 L749.9 316.2 L750.6 312.8 L751.4 309.4 L752.2 306.1 L753.1 302.7 L754.1 299.3 L755.1 296.0 L756.2 292.6 L757.4 289.2 L758.6 285.8 L759.9 282.3 L761.3 278.8 L762.8 275.3 L764.3 271.8 L766.0 268.2 L767.8 264.6 L769.7 260.9 L771.7 257.1 L773.9 253.4 L776.2 249.5 L778.7 245.7 L781.3 241.8 L784.1 237.8 L787.2 233.8 L790.4 229.8 L793.9 225.9 L797.6 221.9 L801.6 217.9 L805.8 214.0 L810.3 210.2 L815.1 206.5 L820.1 202.9 L825.4 199.5 L831.0 196.2 L836.9 193.2 L843.0 190.4 L849.4 187.9 L856.0 185.6 L862.9 183.6 L870.0 182.0 L877.2 180.7 L884.7 179.8 L885.1 178.7 L877.1 181.0 L869.5 183.7 L862.2 186.7 L855.2 190.2 L848.6 193.9 L842.3 197.9 L836.5 202.2 L831.0 206.6 L825.9 211.2 L821.1 216.0 L816.8 220.8 L812.8 225.6 L809.2 230.4 L806.0 235.2 L803.0 239.9 L800.4 244.5 L798.0 248.9 L795.8 253.3 L793.9 257.5 L792.2 261.5 L790.7 265.4 L789.3 269.1 L788.0 272.6 L786.8 276.1 L785.8 279.3 L784.8 282.5 L783.9 285.5 L783.1 288.4 L782.3 291.2 L781.5 293.9 L780.8 296.6 L780.2 299.1 L779.5 301.6 L778.9 304.1 L778.3 306.5 L777.7 308.9 L777.2 311.2 L776.7 313.6 L776.2 315.9 L775.7 318.2 L775.2 320.6 L774.8 322.9 L774.3 325.2 L773.9 327.6 L773.5 330.0 L773.2 332.4 L772.8 334.9 L772.5 337.4 L772.2 340.0 L771.9 342.6 L771.7 345.3 L771.5 348.0 L771.3 350.8 L771.2 353.7 L771.2 356.7 L771.1 359.8 L771.2 363.1 L771.3 366.4 L771.4 369.8 L771.7 373.4 L772.0 377.1 L772.4 381.0 L773.0 385.1 L773.6 389.3 L774.4 393.7 L775.3 398.3 L776.4 403.1 L777.7 408.2 L779.2 413.4 L780.9 418.9 L782.9 424.6 L785.2 430.6 L787.8 436.9 L790.7 443.4 L794.0 450.2 L797.7 457.3 L801.9 464.6 L806.6 472.3 L811.9 480.2 L817.7 488.4 L824.2 496.8 L831.4 505.6 L839.3 514.5 L848.1 523.7 L857.7 533.1 L868.3 542.5 L879.9 551.9 L892.4 561.2 L906.0 570.2 L920.5 578.7 Z" fill="#d86e58"/><path d="M920.5 578.7 L906.0 570.2 L892.4 561.2 L879.9 551.9 L868.3 542.5 L857.7 533.1 L848.1 523.7 L839.3 514.5 L831.4 505.6 L824.2 496.8 L817.7 488.4 L811.9 480.2 L806.6 472.3 L801.9 464.6 L797.7 457.3 L794.0 450.2 L790.7 443.4 L787.8 436.9 L785.2 430.6 L782.9 424.6 L780.9 418.9 L779.2 413.4 L777.7 408.2 L776.4 403.1 L775.3 398.3 L774.4 393.7 L773.6 389.3 L773.0 385.1 L772.4 381.0 L772.0 377.1 L771.7 373.4 L771.4 369.8 L771.3 366.4 L771.2 363.1 L771.1 359.8 L771.2 356.7 L771.2 353.7 L771.3 350.8 L771.5 348.0 L771.7 345.3 L771.9 342.6 L772.2 340.0 L772.5 337.4 L772.8 334.9 L773.2 332.4 L773.5 330.0 L773.9 327.6 L774.3 325.2 L774.8 322.9 L775.2 320.6 L775.7 318.2 L776.2 315.9 L776.7 313.6 L777.2 311.2 L777.7 308.9 L778.3 306.5 L778.9 304.1 L779.5 301.6 L780.2 299.1 L780.8 296.6 L781.5 293.9 L782.3 291.2 L783.1 288.4 L783.9 285.5 L784.8 282.5 L785.8 279.3 L786.8 276.1 L788.0 272.6 L789.3 269.1 L790.7 265.4 L792.2 261.5 L793.9 257.5 L795.8 253.3 L798.0 248.9 L800.4 244.5 L803.0 239.9 L806.0 235.2 L809.2 230.4 L812.8 225.6 L816.8 220.8 L821.1 216.0 L825.9 211.2 L831.0 206.6 L836.5 202.2 L842.3 197.9 L848.6 193.9 L855.2 190.2 L862.2 186.7 L869.5 183.7 L877.1 181.0 L885.1 178.7 L885.2 178.4 L877.1 181.0 L869.4 184.0 L862.0 187.4 L855.0 191.1 L848.4 195.2 L842.2 199.5 L836.4 204.1 L830.9 208.9 L825.9 213.8 L821.4 218.8 L817.2 223.8 L813.4 228.9 L810.0 233.9 L806.9 238.9 L804.2 243.7 L801.7 248.4 L799.6 253.0 L797.7 257.4 L796.0 261.7 L794.5 265.7 L793.2 269.6 L792.1 273.3 L791.0 276.8 L790.1 280.1 L789.2 283.3 L788.5 286.3 L787.7 289.2 L787.1 292.0 L786.5 294.6 L785.9 297.2 L785.3 299.6 L784.8 302.0 L784.3 304.3 L783.8 306.6 L783.3 308.8 L782.8 310.9 L782.4 313.1 L781.9 315.2 L781.5 317.3 L781.0 319.4 L780.6 321.5 L780.2 323.6 L779.8 325.7 L779.5 327.8 L779.1 330.0 L778.8 332.2 L778.4 334.4 L778.1 336.7 L777.8 339.0 L777.6 341.4 L777.3 343.8 L777.1 346.3 L777.0 348.8 L776.8 351.5 L776.7 354.2 L776.7 357.1 L776.6 360.0 L776.7 363.0 L776.8 366.2 L777.0 369.5 L777.2 372.9 L777.6 376.5 L778.0 380.2 L778.6 384.1 L779.2 388.2 L780.0 392.4 L781.0 396.9 L782.1 401.6 L783.4 406.5 L785.0 411.6 L786.8 416.9 L788.8 422.6 L791.1 428.4 L793.8 434.5 L796.8 441.0 L800.2 447.6 L804.0 454.6 L808.3 461.9 L813.1 469.5 L818.5 477.4 L824.6 485.6 L831.3 494.2 L838.7 503.1 L847.0 512.3 L856.2 521.8 L866.3 531.5 L877.5 541.3 L889.7 551.1 L903.0 560.7 L917.3 570.0 Z" fill="#f0c2b4"/><path d="M970.8 716.9 L953.6 720.7 L935.8 721.9 L917.8 720.8 L899.9 717.4 L882.2 711.9 L865.0 704.6 L848.5 695.6 L832.8 685.4 L818.0 674.1 L804.2 662.0 L791.4 649.3 L779.7 636.3 L768.9 623.1 L759.1 609.9 L750.1 596.8 L742.1 583.8 L734.8 571.0 L728.2 558.6 L722.3 546.5 L717.0 534.7 L712.3 523.3 L708.1 512.2 L704.3 501.6 L701.0 491.2 L698.0 481.2 L695.4 471.6 L693.1 462.2 L691.1 453.2 L689.3 444.4 L687.8 435.9 L686.5 427.6 L685.4 419.6 L684.5 411.8 L683.7 404.2 L683.2 396.7 L682.7 389.5 L682.5 382.4 L682.3 375.5 L682.3 368.6 L682.5 362.0 L682.7 355.4 L683.1 348.9 L683.6 342.5 L684.3 336.2 L685.0 330.0 L685.9 323.8 L686.9 317.8 L688.0 311.7 L689.2 305.7 L690.6 299.8 L692.1 293.9 L693.8 288.1 L695.6 282.2 L697.5 276.5 L699.6 270.7 L701.9 265.0 L704.3 259.4 L707.0 253.8 L709.8 248.2 L712.8 242.8 L716.0 237.3 L719.5 232.0 L723.1 226.8 L727.0 221.7 L731.1 216.7 L735.5 211.9 L740.1 207.2 L744.9 202.8 L750.0 198.5 L755.3 194.5 L760.8 190.8 L766.5 187.3 L772.4 184.2 L778.5 181.4 L784.8 178.9 L791.2 176.7 L797.7 174.9 L804.3 173.5 L811.0 172.4 L817.7 171.8 L824.5 171.4 L831.2 171.4 L838.0 171.8 L844.7 172.4 L851.4 173.4 L858.0 174.7 L864.6 176.2 L871.0 178.0 L877.4 180.1 L883.7 182.4" fill="none" stroke="#fbeee8" stroke-width="1.9"/><path d="M965.5 702.4 L948.6 704.8 L931.3 705.0 L913.8 703.0 L896.5 699.0 L879.6 693.1 L863.2 685.5 L847.5 676.6 L832.6 666.4 L818.6 655.4 L805.6 643.7 L793.6 631.5 L782.5 619.1 L772.4 606.4 L763.1 593.8 L754.8 581.3 L747.2 569.0 L740.4 556.9 L734.2 545.1 L728.7 533.7 L723.8 522.5 L719.4 511.7 L715.4 501.3 L711.9 491.2 L708.8 481.4 L706.1 472.0 L703.6 462.9 L701.5 454.1 L699.6 445.6 L698.0 437.3 L696.6 429.3 L695.4 421.5 L694.4 414.0 L693.6 406.7 L692.9 399.5 L692.4 392.5 L692.1 385.7 L691.8 379.1 L691.7 372.6 L691.8 366.2 L691.9 359.9 L692.2 353.8 L692.5 347.7 L693.0 341.7 L693.6 335.8 L694.3 330.0 L695.1 324.2 L696.1 318.5 L697.1 312.9 L698.3 307.3 L699.6 301.7 L701.0 296.2 L702.5 290.7 L704.2 285.3 L706.0 279.9 L707.9 274.5 L710.0 269.1 L712.3 263.8 L714.7 258.6 L717.3 253.3 L720.0 248.1 L723.0 243.0 L726.2 238.0 L729.5 233.0 L733.1 228.1 L736.9 223.3 L740.9 218.6 L745.1 214.1 L749.6 209.8 L754.2 205.6 L759.1 201.6 L764.3 197.8 L769.6 194.3 L775.1 191.0 L780.8 188.0 L786.7 185.3 L792.7 182.9 L798.9 180.8 L805.2 179.0 L811.6 177.5 L818.1 176.4 L824.6 175.6 L831.2 175.1 L837.8 175.0 L844.5 175.1 L851.1 175.6 L857.7 176.3 L864.3 177.3 L870.9 178.6 L877.4 180.2 L883.9 182.0" fill="none" stroke="#fbeee8" stroke-width="1.9"/><path d="M960.2 687.8 L943.6 689.0 L926.7 688.1 L909.8 685.2 L893.2 680.6 L877.0 674.2 L861.4 666.5 L846.5 657.5 L832.5 647.5 L819.3 636.8 L807.0 625.4 L795.7 613.7 L785.3 601.8 L775.8 589.8 L767.2 577.8 L759.4 565.9 L752.3 554.2 L745.9 542.8 L740.2 531.7 L735.1 520.8 L730.5 510.3 L726.4 500.2 L722.8 490.3 L719.5 480.8 L716.6 471.7 L714.1 462.8 L711.9 454.2 L709.9 446.0 L708.2 438.0 L706.7 430.2 L705.4 422.7 L704.4 415.5 L703.5 408.4 L702.7 401.5 L702.1 394.8 L701.7 388.3 L701.4 382.0 L701.2 375.8 L701.1 369.7 L701.2 363.7 L701.3 357.9 L701.6 352.1 L701.9 346.5 L702.4 340.9 L703.0 335.4 L703.6 330.0 L704.4 324.6 L705.3 319.3 L706.2 314.1 L707.3 308.9 L708.5 303.7 L709.8 298.5 L711.2 293.4 L712.7 288.3 L714.4 283.3 L716.2 278.3 L718.1 273.3 L720.2 268.3 L722.4 263.3 L724.7 258.4 L727.3 253.5 L730.0 248.7 L732.9 243.9 L735.9 239.2 L739.2 234.5 L742.6 229.9 L746.3 225.4 L750.2 221.0 L754.2 216.7 L758.5 212.6 L763.0 208.6 L767.7 204.8 L772.7 201.2 L777.8 197.8 L783.1 194.6 L788.6 191.7 L794.3 189.0 L800.1 186.6 L806.1 184.5 L812.2 182.6 L818.4 181.1 L824.8 179.8 L831.2 178.8 L837.7 178.2 L844.2 177.8 L850.8 177.7 L857.4 177.9 L864.1 178.4 L870.7 179.2 L877.4 180.3 L884.0 181.6" fill="none" stroke="#fbeee8" stroke-width="1.9"/><path d="M954.9 673.3 L938.6 673.1 L922.1 671.2 L905.8 667.5 L889.9 662.2 L874.4 655.4 L859.6 647.4 L845.6 638.4 L832.3 628.6 L819.9 618.1 L808.5 607.2 L797.9 595.9 L788.2 584.5 L779.3 573.1 L771.3 561.7 L764.0 550.5 L757.4 539.5 L751.5 528.7 L746.2 518.2 L741.5 508.0 L737.2 498.1 L733.4 488.6 L730.1 479.4 L727.1 470.5 L724.5 461.9 L722.1 453.6 L720.1 445.6 L718.3 437.9 L716.8 430.4 L715.4 423.2 L714.3 416.2 L713.3 409.4 L712.5 402.8 L711.8 396.4 L711.3 390.2 L710.9 384.1 L710.7 378.2 L710.5 372.4 L710.5 366.8 L710.6 361.3 L710.7 355.8 L711.0 350.5 L711.3 345.3 L711.8 340.1 L712.3 335.0 L713.0 330.0 L713.7 325.0 L714.5 320.1 L715.4 315.2 L716.4 310.4 L717.5 305.6 L718.7 300.9 L719.9 296.1 L721.3 291.4 L722.8 286.7 L724.5 282.0 L726.2 277.4 L728.1 272.7 L730.1 268.1 L732.2 263.5 L734.5 258.9 L737.0 254.4 L739.6 249.8 L742.3 245.3 L745.3 240.9 L748.4 236.5 L751.7 232.2 L755.2 227.9 L758.9 223.7 L762.8 219.6 L766.9 215.7 L771.2 211.8 L775.8 208.2 L780.5 204.6 L785.4 201.3 L790.5 198.1 L795.8 195.2 L801.3 192.4 L807.0 190.0 L812.8 187.7 L818.8 185.7 L824.9 184.0 L831.1 182.5 L837.5 181.4 L844.0 180.5 L850.5 179.9 L857.1 179.6 L863.8 179.5 L870.6 179.8 L877.3 180.4 L884.1 181.2" fill="none" stroke="#fbeee8" stroke-width="1.9"/><path d="M949.6 658.7 L933.6 657.3 L917.6 654.3 L901.9 649.7 L886.6 643.8 L871.9 636.6 L857.9 628.4 L844.6 619.4 L832.2 609.7 L820.6 599.4 L809.9 588.9 L800.0 578.1 L791.0 567.2 L782.8 556.4 L775.3 545.6 L768.6 535.0 L762.5 524.7 L757.1 514.6 L752.2 504.7 L747.8 495.2 L744.0 485.9 L740.5 477.0 L737.4 468.4 L734.7 460.1 L732.3 452.1 L730.2 444.4 L728.3 436.9 L726.7 429.7 L725.3 422.8 L724.1 416.1 L723.1 409.6 L722.3 403.3 L721.5 397.2 L721.0 391.3 L720.5 385.5 L720.2 379.9 L720.0 374.4 L719.9 369.1 L719.9 363.9 L720.0 358.8 L720.1 353.8 L720.4 348.9 L720.8 344.1 L721.2 339.3 L721.7 334.6 L722.3 330.0 L722.9 325.4 L723.7 320.9 L724.5 316.4 L725.4 312.0 L726.4 307.6 L727.5 303.2 L728.7 298.8 L729.9 294.5 L731.3 290.1 L732.8 285.8 L734.3 281.5 L736.0 277.2 L737.8 272.9 L739.7 268.6 L741.7 264.3 L743.9 260.0 L746.3 255.8 L748.7 251.5 L751.4 247.3 L754.1 243.1 L757.1 238.9 L760.2 234.8 L763.6 230.7 L767.1 226.7 L770.8 222.7 L774.7 218.9 L778.8 215.1 L783.2 211.4 L787.7 207.9 L792.4 204.5 L797.4 201.3 L802.5 198.3 L807.9 195.4 L813.4 192.8 L819.1 190.4 L825.0 188.2 L831.1 186.2 L837.3 184.6 L843.7 183.2 L850.2 182.0 L856.8 181.2 L863.6 180.6 L870.4 180.4 L877.3 180.5 L884.3 180.8" fill="none" stroke="#fbeee8" stroke-width="1.9"/><path d="M944.4 644.2 L928.5 641.5 L913.0 637.3 L897.9 631.9 L883.3 625.3 L869.3 617.8 L856.1 609.4 L843.6 600.3 L832.0 590.7 L821.2 580.8 L811.3 570.6 L802.2 560.3 L793.8 550.0 L786.3 539.7 L779.4 529.6 L773.2 519.6 L767.7 509.9 L762.7 500.4 L758.2 491.2 L754.2 482.4 L750.7 473.8 L747.5 465.5 L744.7 457.5 L742.3 449.7 L740.1 442.3 L738.2 435.2 L736.6 428.3 L735.1 421.6 L733.9 415.2 L732.8 409.0 L731.9 403.0 L731.2 397.2 L730.6 391.6 L730.1 386.1 L729.7 380.8 L729.5 375.7 L729.3 370.7 L729.2 365.8 L729.3 361.0 L729.4 356.3 L729.6 351.8 L729.8 347.3 L730.2 342.8 L730.6 338.5 L731.0 334.2 L731.6 330.0 L732.2 325.8 L732.9 321.7 L733.6 317.6 L734.5 313.5 L735.4 309.5 L736.3 305.5 L737.4 301.5 L738.5 297.5 L739.7 293.5 L741.0 289.6 L742.4 285.6 L743.9 281.6 L745.5 277.6 L747.2 273.7 L749.0 269.7 L750.9 265.7 L752.9 261.7 L755.1 257.7 L757.4 253.7 L759.9 249.7 L762.5 245.7 L765.3 241.7 L768.2 237.7 L771.4 233.7 L774.7 229.8 L778.2 225.9 L781.9 222.0 L785.9 218.3 L790.0 214.6 L794.4 211.0 L798.9 207.5 L803.8 204.1 L808.8 200.9 L814.0 197.9 L819.5 195.0 L825.2 192.4 L831.1 189.9 L837.2 187.8 L843.5 185.8 L849.9 184.2 L856.5 182.8 L863.3 181.8 L870.2 181.0 L877.3 180.6 L884.4 180.5" fill="none" stroke="#fbeee8" stroke-width="1.9"/></g><rect x="974.2" y="86.3" width="1.5" height="1.5" fill="#e98a62"/><rect x="981.4" y="138.4" width="2" height="2" fill="#e98a62"/><rect x="981.0" y="127.9" width="1" height="1" fill="#e98a62"/><rect x="930.7" y="88.7" width="2" height="2" fill="#e98a62"/><rect x="996.2" y="164.6" width="1.5" height="1.5" fill="#e98a62"/><rect x="1008.7" y="168.5" width="1" height="1" fill="#e98a62"/><rect x="962.0" y="115.3" width="2" height="2" fill="#e98a62"/><rect x="990.0" y="113.2" width="1" height="1" fill="#e98a62"/><rect x="993.4" y="136.0" width="1" height="1" fill="#e98a62"/><rect x="965.1" y="117.7" width="2" height="2" fill="#e98a62"/><rect x="959.1" y="95.0" width="1" height="1" fill="#e98a62"/><rect x="1009.3" y="172.8" width="1" height="1" fill="#e98a62"/><rect x="958.1" y="106.6" width="1" height="1" fill="#e98a62"/><rect x="961.5" y="83.1" width="1.5" height="1.5" fill="#e98a62"/><rect x="956.7" y="97.8" width="1.5" height="1.5" fill="#e98a62"/><rect x="1001.9" y="192.8" width="1.5" height="1.5" fill="#e98a62"/><rect x="965.8" y="93.4" width="2" height="2" fill="#e98a62"/><rect x="961.8" y="99.6" width="2" height="2" fill="#e98a62"/><rect x="1011.9" y="205.6" width="1" height="1" fill="#e98a62"/><rect x="982.7" y="135.7" width="1.5" height="1.5" fill="#e98a62"/><rect x="963.8" y="89.7" width="1" height="1" fill="#e98a62"/><rect x="1012.4" y="205.3" width="1" height="1" fill="#e98a62"/><rect x="991.0" y="143.1" width="2" height="2" fill="#e98a62"/><rect x="956.5" y="108.1" width="1" height="1" fill="#e98a62"/><rect x="977.9" y="122.6" width="1.5" height="1.5" fill="#e98a62"/><rect x="1007.8" y="206.5" width="1" height="1" fill="#e98a62"/><rect x="1008.3" y="199.3" width="1" height="1" fill="#e98a62"/><rect x="996.7" y="175.9" width="1" height="1" fill="#e98a62"/><rect x="1003.2" y="181.0" width="1" height="1" fill="#e98a62"/><rect x="983.2" y="109.9" width="1.5" height="1.5" fill="#e98a62"/><rect x="980.2" y="102.7" width="1" height="1" fill="#e98a62"/><rect x="996.8" y="159.9" width="1" height="1" fill="#e98a62"/><rect x="949.9" y="88.5" width="1.5" height="1.5" fill="#e98a62"/><rect x="1004.3" y="188.1" width="1" height="1" fill="#e98a62"/><rect x="994.0" y="118.2" width="1" height="1" fill="#e98a62"/><rect x="944.4" y="88.1" width="2" height="2" fill="#e98a62"/><rect x="992.3" y="113.0" width="1" height="1" fill="#e98a62"/><rect x="932.3" y="92.2" width="1.5" height="1.5" fill="#e98a62"/><rect x="938.4" y="86.6" width="1.5" height="1.5" fill="#e98a62"/><rect x="966.9" y="116.6" width="2" height="2" fill="#e98a62"/><rect x="942.2" y="92.2" width="1.5" height="1.5" fill="#e98a62"/><rect x="964.3" y="108.3" width="2" height="2" fill="#e98a62"/><rect x="971.4" y="122.7" width="1" height="1" fill="#e98a62"/><rect x="971.8" y="95.3" width="1" height="1" fill="#e98a62"/><rect x="978.0" y="112.7" width="1" height="1" fill="#e98a62"/><rect x="989.1" y="143.1" width="1" height="1" fill="#e98a62"/><rect x="983.3" y="133.7" width="2" height="2" fill="#e98a62"/><rect x="998.4" y="143.3" width="2" height="2" fill="#e98a62"/><rect x="1003.4" y="163.9" width="2" height="2" fill="#e98a62"/><rect x="996.3" y="155.3" width="1" height="1" fill="#e98a62"/><rect x="986.3" y="145.7" width="1.5" height="1.5" fill="#e98a62"/><rect x="954.0" y="91.2" width="2" height="2" fill="#e98a62"/><rect x="1002.2" y="159.0" width="2" height="2" fill="#e98a62"/><rect x="970.0" y="112.1" width="1" height="1" fill="#e98a62"/><rect x="1005.2" y="161.1" width="1" height="1" fill="#e98a62"/><rect x="996.8" y="145.1" width="1" height="1" fill="#e98a62"/><rect x="965.4" y="111.8" width="1.5" height="1.5" fill="#e98a62"/><rect x="972.8" y="96.5" width="1.5" height="1.5" fill="#e98a62"/><rect x="998.6" y="162.3" width="1" height="1" fill="#e98a62"/><rect x="992.4" y="157.7" width="1" height="1" fill="#e98a62"/><rect x="996.1" y="176.4" width="2" height="2" fill="#e98a62"/><rect x="1006.7" y="185.3" width="2" height="2" fill="#e98a62"/><rect x="944.0" y="86.8" width="1.5" height="1.5" fill="#e98a62"/><rect x="992.5" y="127.9" width="1.5" height="1.5" fill="#e98a62"/><rect x="982.6" y="142.2" width="1" height="1" fill="#e98a62"/><rect x="980.2" y="123.4" width="1.5" height="1.5" fill="#e98a62"/><rect x="988.4" y="107.4" width="1" height="1" fill="#e98a62"/><rect x="985.7" y="119.5" width="1.5" height="1.5" fill="#e98a62"/><rect x="1009.5" y="167.2" width="2" height="2" fill="#e98a62"/><rect x="979.6" y="103.0" width="1.5" height="1.5" fill="#e98a62"/><rect x="990.0" y="133.2" width="2" height="2" fill="#e98a62"/><rect x="972.6" y="117.9" width="1" height="1" fill="#e98a62"/><rect x="1007.2" y="187.0" width="1" height="1" fill="#e98a62"/><rect x="957.3" y="93.6" width="1" height="1" fill="#e98a62"/><rect x="1003.2" y="180.0" width="1.5" height="1.5" fill="#e98a62"/><rect x="968.1" y="85.7" width="1.5" height="1.5" fill="#e98a62"/><rect x="1000.8" y="144.0" width="1" height="1" fill="#e98a62"/><rect x="988.2" y="109.9" width="1" height="1" fill="#e98a62"/><rect x="981.0" y="99.0" width="1" height="1" fill="#e98a62"/><rect x="982.3" y="124.0" width="1" height="1" fill="#e98a62"/><rect x="964.1" y="95.3" width="1" height="1" fill="#e98a62"/><rect x="953.5" y="98.5" width="1" height="1" fill="#e98a62"/><rect x="991.6" y="137.8" width="1.5" height="1.5" fill="#e98a62"/><rect x="995.2" y="120.3" width="1.5" height="1.5" fill="#e98a62"/><rect x="997.1" y="159.5" width="2" height="2" fill="#e98a62"/><rect x="1000.4" y="141.9" width="2" height="2" fill="#e98a62"/><rect x="957.5" y="87.9" width="1.5" height="1.5" fill="#e98a62"/><rect x="1000.9" y="198.4" width="2" height="2" fill="#e98a62"/><rect x="1001.0" y="211.0" width="1" height="1" fill="#e98a62"/><rect x="1006.8" y="214.7" width="1" height="1" fill="#e98a62"/><rect x="950.3" y="96.0" width="1" height="1" fill="#e98a62"/><rect x="992.4" y="121.7" width="1.5" height="1.5" fill="#e98a62"/><rect x="967.6" y="113.6" width="1.5" height="1.5" fill="#e98a62"/><rect x="1004.3" y="144.4" width="1.5" height="1.5" fill="#e98a62"/><rect x="978.6" y="103.9" width="2" height="2" fill="#e98a62"/><rect x="1009.6" y="213.4" width="1.5" height="1.5" fill="#e98a62"/><rect x="975.0" y="123.8" width="2" height="2" fill="#e98a62"/><rect x="1009.5" y="210.7" width="1.5" height="1.5" fill="#e98a62"/><rect x="986.6" y="127.7" width="1" height="1" fill="#e98a62"/><rect x="954.3" y="92.9" width="1" height="1" fill="#e98a62"/><rect x="999.8" y="178.6" width="2" height="2" fill="#e98a62"/><rect x="1012.2" y="189.2" width="1.5" height="1.5" fill="#e98a62"/><rect x="975.3" y="98.4" width="1" height="1" fill="#e98a62"/><rect x="957.1" y="95.8" width="1" height="1" fill="#e98a62"/><rect x="1010.1" y="174.9" width="2" height="2" fill="#e98a62"/><rect x="1002.7" y="169.4" width="2" height="2" fill="#e98a62"/><rect x="1004.6" y="168.1" width="1" height="1" fill="#e98a62"/><rect x="965.5" y="92.1" width="1" height="1" fill="#e98a62"/><rect x="991.5" y="161.7" width="1.5" height="1.5" fill="#e98a62"/><rect x="991.6" y="114.4" width="1.5" height="1.5" fill="#e98a62"/><rect x="976.4" y="122.8" width="1" height="1" fill="#e98a62"/><rect x="970.6" y="91.7" width="1.5" height="1.5" fill="#e98a62"/><rect x="982.6" y="133.3" width="1.5" height="1.5" fill="#e98a62"/><rect x="998.9" y="168.9" width="1" height="1" fill="#e98a62"/><rect x="998.3" y="129.2" width="1.5" height="1.5" fill="#e98a62"/><rect x="952.6" y="103.8" width="1.5" height="1.5" fill="#e98a62"/><rect x="965.8" y="94.2" width="1" height="1" fill="#e98a62"/><rect x="1009.7" y="184.3" width="1.5" height="1.5" fill="#e98a62"/><rect x="977.5" y="129.8" width="2" height="2" fill="#e98a62"/><rect x="1000.0" y="159.0" width="2" height="2" fill="#e98a62"/><rect x="982.3" y="138.1" width="1" height="1" fill="#e98a62"/><rect x="946.5" y="93.4" width="1.5" height="1.5" fill="#e98a62"/><rect x="986.5" y="112.2" width="1" height="1" fill="#e98a62"/><rect x="961.6" y="108.6" width="1.5" height="1.5" fill="#e98a62"/><rect x="974.9" y="102.5" width="1" height="1" fill="#e98a62"/><rect x="976.0" y="106.4" width="2" height="2" fill="#e98a62"/><rect x="1002.3" y="167.9" width="1.5" height="1.5" fill="#e98a62"/><rect x="1000.3" y="165.8" width="1" height="1" fill="#e98a62"/><rect x="1005.4" y="158.5" width="1" height="1" fill="#e98a62"/><rect x="958.5" y="105.8" width="1" height="1" fill="#e98a62"/><rect x="978.8" y="89.9" width="1.5" height="1.5" fill="#e98a62"/><rect x="978.7" y="120.5" width="1" height="1" fill="#e98a62"/><rect x="978.5" y="114.4" width="2" height="2" fill="#e98a62"/><rect x="990.9" y="113.9" width="1" height="1" fill="#e98a62"/><rect x="964.3" y="96.5" width="1" height="1" fill="#e98a62"/><rect x="997.3" y="168.8" width="1" height="1" fill="#e98a62"/><rect x="996.3" y="174.9" width="1" height="1" fill="#e98a62"/><rect x="988.0" y="144.9" width="1" height="1" fill="#e98a62"/><rect x="1009.1" y="163.4" width="2" height="2" fill="#e98a62"/><rect x="934.9" y="89.3" width="2" height="2" fill="#e98a62"/><rect x="983.4" y="121.4" width="1" height="1" fill="#e98a62"/><rect x="971.3" y="114.8" width="2" height="2" fill="#e98a62"/><rect x="991.2" y="150.0" width="1" height="1" fill="#e98a62"/><rect x="929.4" y="85.1" width="1" height="1" fill="#e98a62"/><rect x="985.3" y="126.9" width="1" height="1" fill="#e98a62"/><rect x="955.5" y="107.1" width="1" height="1" fill="#e98a62"/><rect x="963.0" y="116.4" width="1" height="1" fill="#e98a62"/><rect x="980.3" y="131.5" width="1.5" height="1.5" fill="#e98a62"/><rect x="995.4" y="155.0" width="1.5" height="1.5" fill="#e98a62"/><rect x="983.2" y="105.0" width="2" height="2" fill="#e98a62"/><rect x="940.8" y="88.6" width="1.5" height="1.5" fill="#e98a62"/><rect x="987.0" y="104.1" width="1" height="1" fill="#e98a62"/><rect x="957.0" y="99.2" width="1" height="1" fill="#e98a62"/><rect x="951.6" y="94.6" width="1.5" height="1.5" fill="#e98a62"/><rect x="991.9" y="114.2" width="2" height="2" fill="#e98a62"/><rect x="1003.8" y="194.7" width="1.5" height="1.5" fill="#e98a62"/><rect x="971.3" y="95.3" width="1" height="1" fill="#e98a62"/><rect x="1010.0" y="184.8" width="1.5" height="1.5" fill="#e98a62"/><rect x="979.5" y="122.3" width="1" height="1" fill="#e98a62"/><rect x="979.9" y="103.9" width="2" height="2" fill="#e98a62"/><rect x="956.2" y="109.9" width="1" height="1" fill="#e98a62"/><rect x="988.5" y="148.8" width="2" height="2" fill="#e98a62"/><rect x="1002.4" y="169.4" width="2" height="2" fill="#e98a62"/><rect x="933.1" y="84.1" width="1" height="1" fill="#e98a62"/><rect x="966.2" y="108.7" width="1.5" height="1.5" fill="#e98a62"/><rect x="988.7" y="119.9" width="1" height="1" fill="#e98a62"/><rect x="946.6" y="88.3" width="1" height="1" fill="#e98a62"/><rect x="985.8" y="122.5" width="1.5" height="1.5" fill="#e98a62"/><rect x="955.1" y="85.2" width="1.5" height="1.5" fill="#e98a62"/><rect x="1012.2" y="186.3" width="1" height="1" fill="#e98a62"/><rect x="980.1" y="137.2" width="2" height="2" fill="#e98a62"/><rect x="1001.2" y="180.1" width="1" height="1" fill="#e98a62"/><rect x="983.7" y="121.0" width="2" height="2" fill="#e98a62"/><rect x="1007.2" y="169.6" width="2" height="2" fill="#e98a62"/><rect x="985.9" y="114.6" width="1" height="1" fill="#e98a62"/><rect x="974.0" y="89.9" width="2" height="2" fill="#e98a62"/><rect x="979.0" y="101.1" width="1" height="1" fill="#e98a62"/><rect x="1001.9" y="146.0" width="1" height="1" fill="#e98a62"/><rect x="987.7" y="120.9" width="1.5" height="1.5" fill="#e98a62"/><rect x="1008.7" y="203.5" width="1" height="1" fill="#e98a62"/><rect x="993.8" y="126.7" width="2" height="2" fill="#e98a62"/><rect x="946.5" y="95.6" width="1" height="1" fill="#e98a62"/><rect x="966.5" y="117.5" width="1.5" height="1.5" fill="#e98a62"/><rect x="1003.8" y="175.9" width="1.5" height="1.5" fill="#e98a62"/><rect x="991.3" y="152.4" width="1.5" height="1.5" fill="#e98a62"/><rect x="960.4" y="98.3" width="1" height="1" fill="#e98a62"/><rect x="935.7" y="85.9" width="1.5" height="1.5" fill="#e98a62"/><rect x="967.1" y="89.0" width="1.5" height="1.5" fill="#e98a62"/><rect x="943.8" y="93.6" width="1" height="1" fill="#e98a62"/><rect x="975.8" y="128.9" width="1" height="1" fill="#e98a62"/><rect x="983.4" y="139.0" width="2" height="2" fill="#e98a62"/><rect x="1008.7" y="178.7" width="1" height="1" fill="#e98a62"/><rect x="1006.3" y="159.0" width="1.5" height="1.5" fill="#e98a62"/><rect x="985.3" y="106.1" width="2" height="2" fill="#e98a62"/><rect x="964.5" y="89.2" width="1.5" height="1.5" fill="#e98a62"/><rect x="1009.2" y="171.6" width="1.5" height="1.5" fill="#e98a62"/><rect x="980.8" y="136.9" width="1.5" height="1.5" fill="#e98a62"/><rect x="964.6" y="100.7" width="1" height="1" fill="#e98a62"/><rect x="993.3" y="160.6" width="1" height="1" fill="#e98a62"/><rect x="979.4" y="117.0" width="2" height="2" fill="#e98a62"/><rect x="956.9" y="105.2" width="1.5" height="1.5" fill="#e98a62"/><rect x="994.6" y="118.3" width="2" height="2" fill="#e98a62"/><rect x="980.9" y="122.6" width="1" height="1" fill="#e98a62"/><rect x="1000.7" y="200.2" width="2" height="2" fill="#e98a62"/><rect x="979.4" y="120.0" width="1" height="1" fill="#e98a62"/><rect x="940.1" y="95.9" width="1" height="1" fill="#e98a62"/><rect x="997.3" y="128.0" width="2" height="2" fill="#e98a62"/><rect x="941.8" y="95.1" width="1.5" height="1.5" fill="#e98a62"/><rect x="959.4" y="96.6" width="1" height="1" fill="#e98a62"/><rect x="941.1" y="95.3" width="1.5" height="1.5" fill="#e98a62"/><rect x="915.7" y="83.9" width="2" height="2" fill="#e98a62"/><rect x="993.3" y="126.5" width="1.5" height="1.5" fill="#e98a62"/><rect x="990.7" y="126.0" width="1.5" height="1.5" fill="#e98a62"/><rect x="994.7" y="134.9" width="1" height="1" fill="#e98a62"/><rect x="978.1" y="101.4" width="1.5" height="1.5" fill="#e98a62"/><rect x="991.7" y="130.5" width="1" height="1" fill="#e98a62"/><rect x="977.1" y="105.0" width="1" height="1" fill="#e98a62"/><rect x="980.1" y="102.9" width="1" height="1" fill="#e98a62"/><rect x="991.0" y="151.8" width="1.5" height="1.5" fill="#e98a62"/><rect x="980.8" y="125.1" width="1.5" height="1.5" fill="#e98a62"/><rect x="1007.9" y="180.7" width="1" height="1" fill="#e98a62"/><rect x="1002.4" y="142.3" width="2" height="2" fill="#e98a62"/><rect x="1000.1" y="152.7" width="1.5" height="1.5" fill="#e98a62"/><rect x="998.1" y="164.5" width="1.5" height="1.5" fill="#e98a62"/><rect x="1006.6" y="160.9" width="1" height="1" fill="#e98a62"/><rect x="982.4" y="141.6" width="1" height="1" fill="#e98a62"/><rect x="988.3" y="121.6" width="1.5" height="1.5" fill="#e98a62"/><rect x="990.6" y="157.7" width="2" height="2" fill="#e98a62"/><rect x="963.8" y="97.9" width="1" height="1" fill="#e98a62"/><rect x="975.8" y="115.7" width="1" height="1" fill="#e98a62"/><rect x="994.7" y="141.0" width="1" height="1" fill="#e98a62"/><rect x="990.0" y="114.3" width="1.5" height="1.5" fill="#e98a62"/><rect x="999.9" y="163.6" width="2" height="2" fill="#e98a62"/><rect x="978.8" y="95.6" width="2" height="2" fill="#e98a62"/><rect x="1006.6" y="214.0" width="1" height="1" fill="#e98a62"/><rect x="981.4" y="100.5" width="1" height="1" fill="#e98a62"/><rect x="941.6" y="91.4" width="2" height="2" fill="#e98a62"/><rect x="996.1" y="127.6" width="1" height="1" fill="#e98a62"/><rect x="990.9" y="143.7" width="1" height="1" fill="#e98a62"/><rect x="1005.5" y="199.4" width="1.5" height="1.5" fill="#e98a62"/><rect x="981.1" y="113.9" width="1" height="1" fill="#e98a62"/><rect x="955.3" y="100.5" width="1" height="1" fill="#e98a62"/><rect x="1001.4" y="167.7" width="1" height="1" fill="#e98a62"/><rect x="970.8" y="104.7" width="1.5" height="1.5" fill="#e98a62"/><rect x="976.4" y="122.8" width="1" height="1" fill="#e98a62"/><rect x="986.7" y="122.0" width="1" height="1" fill="#e98a62"/><rect x="997.3" y="138.6" width="1" height="1" fill="#e98a62"/><rect x="991.6" y="149.9" width="2" height="2" fill="#e98a62"/><rect x="974.6" y="123.9" width="2" height="2" fill="#e98a62"/><rect x="970.6" y="123.8" width="1" height="1" fill="#e98a62"/><rect x="981.4" y="104.6" width="1.5" height="1.5" fill="#e98a62"/><rect x="983.6" y="105.0" width="1" height="1" fill="#e98a62"/><rect x="959.3" y="90.3" width="1" height="1" fill="#e98a62"/><rect x="983.8" y="113.1" width="1" height="1" fill="#e98a62"/><rect x="1008.0" y="196.2" width="2" height="2" fill="#e98a62"/><rect x="995.8" y="158.4" width="1" height="1" fill="#e98a62"/><rect x="1013.8" y="208.9" width="1" height="1" fill="#e98a62"/><rect x="1001.7" y="197.3" width="1.5" height="1.5" fill="#e98a62"/><rect x="989.6" y="108.8" width="1" height="1" fill="#e98a62"/><rect x="988.0" y="132.7" width="1.5" height="1.5" fill="#e98a62"/><rect x="1112.3" y="86.4" width="1" height="1" fill="#ffffff"/><rect x="1153.6" y="95.7" width="1" height="1" fill="#ffffff"/><rect x="1149.2" y="98.8" width="1.5" height="1.5" fill="#ffffff"/><rect x="1105.5" y="104.9" width="1.5" height="1.5" fill="#ffffff"/><rect x="1118.8" y="142.2" width="1" height="1" fill="#ffffff"/><rect x="1095.1" y="108.6" width="1" height="1" fill="#ffffff"/><rect x="1149.6" y="119.9" width="1" height="1" fill="#ffffff"/><rect x="1097.4" y="112.4" width="1" height="1" fill="#ffffff"/><rect x="1090.1" y="95.7" width="1.5" height="1.5" fill="#ffffff"/><rect x="1079.4" y="87.7" width="1" height="1" fill="#ffffff"/><rect x="1084.1" y="108.0" width="1.5" height="1.5" fill="#ffffff"/><rect x="1100.8" y="88.4" width="1" height="1" fill="#ffffff"/><rect x="1108.9" y="130.6" width="1" height="1" fill="#ffffff"/><rect x="1083.6" y="94.2" width="1.5" height="1.5" fill="#ffffff"/><rect x="1096.2" y="92.5" width="1" height="1" fill="#ffffff"/><rect x="1141.9" y="115.6" width="1" height="1" fill="#ffffff"/><rect x="1082.8" y="98.9" width="1" height="1" fill="#ffffff"/><rect x="1114.2" y="146.8" width="1.5" height="1.5" fill="#ffffff"/><rect x="1095.7" y="89.6" width="1" height="1" fill="#ffffff"/><rect x="1143.5" y="97.0" width="1.5" height="1.5" fill="#ffffff"/><rect x="1134.3" y="83.0" width="1" height="1" fill="#ffffff"/><rect x="1087.0" y="100.4" width="1" height="1" fill="#ffffff"/><rect x="1102.0" y="107.6" width="1.5" height="1.5" fill="#ffffff"/><rect x="1120.4" y="109.3" width="1" height="1" fill="#ffffff"/><rect x="1108.1" y="104.3" width="1" height="1" fill="#ffffff"/><rect x="1151.0" y="136.9" width="1" height="1" fill="#ffffff"/><rect x="1140.7" y="100.8" width="1" height="1" fill="#ffffff"/><rect x="1112.7" y="102.5" width="1" height="1" fill="#ffffff"/><rect x="1088.5" y="100.7" width="1" height="1" fill="#ffffff"/><rect x="1093.6" y="96.4" width="1.5" height="1.5" fill="#ffffff"/><rect x="1123.2" y="87.7" width="1" height="1" fill="#ffffff"/><rect x="1125.7" y="134.8" width="1" height="1" fill="#ffffff"/><rect x="1094.1" y="93.9" width="1.5" height="1.5" fill="#ffffff"/><rect x="1091.4" y="95.7" width="1.5" height="1.5" fill="#ffffff"/><rect x="1138.4" y="126.5" width="1" height="1" fill="#ffffff"/><rect x="1111.3" y="85.9" width="1" height="1" fill="#ffffff"/><rect x="1099.6" y="103.2" width="1" height="1" fill="#ffffff"/><rect x="1085.5" y="91.8" width="1" height="1" fill="#ffffff"/><rect x="1121.4" y="127.8" width="1" height="1" fill="#ffffff"/><rect x="1155.3" y="124.9" width="1" height="1" fill="#ffffff"/><rect x="1153.8" y="90.8" width="1" height="1" fill="#ffffff"/><rect x="1091.3" y="84.7" width="1.5" height="1.5" fill="#ffffff"/><rect x="1155.7" y="92.2" width="1" height="1" fill="#ffffff"/><rect x="1100.5" y="130.5" width="1" height="1" fill="#ffffff"/><rect x="1130.0" y="107.9" width="1.5" height="1.5" fill="#ffffff"/><rect x="1118.5" y="140.8" width="1.5" height="1.5" fill="#ffffff"/><rect x="1151.6" y="106.6" width="1" height="1" fill="#ffffff"/><rect x="1116.6" y="122.0" width="1" height="1" fill="#ffffff"/><rect x="1112.2" y="98.3" width="1" height="1" fill="#ffffff"/><rect x="1111.1" y="99.9" width="1" height="1" fill="#ffffff"/><rect x="1099.3" y="113.1" width="1" height="1" fill="#ffffff"/><rect x="1149.0" y="95.3" width="1" height="1" fill="#ffffff"/><rect x="1082.7" y="101.3" width="1.5" height="1.5" fill="#ffffff"/><rect x="1148.9" y="90.4" width="1" height="1" fill="#ffffff"/><rect x="1152.6" y="130.8" width="1" height="1" fill="#ffffff"/><rect x="1130.6" y="100.4" width="1" height="1" fill="#ffffff"/><rect x="1096.0" y="111.3" width="1" height="1" fill="#ffffff"/><rect x="1153.9" y="86.0" width="1.5" height="1.5" fill="#ffffff"/><rect x="1152.6" y="109.6" width="1.5" height="1.5" fill="#ffffff"/><rect x="1097.3" y="91.5" width="1.5" height="1.5" fill="#ffffff"/><rect x="1137.7" y="114.0" width="1" height="1" fill="#ffffff"/><rect x="1127.2" y="92.6" width="1.5" height="1.5" fill="#ffffff"/><rect x="1129.2" y="105.4" width="1" height="1" fill="#ffffff"/><rect x="1119.3" y="83.4" width="1.5" height="1.5" fill="#ffffff"/><rect x="1153.2" y="116.8" width="1" height="1" fill="#ffffff"/><rect x="1125.0" y="106.2" width="1" height="1" fill="#ffffff"/><rect x="1134.1" y="100.8" width="1" height="1" fill="#ffffff"/><rect x="1099.8" y="98.0" width="1" height="1" fill="#ffffff"/><rect x="1140.7" y="115.2" width="1.5" height="1.5" fill="#ffffff"/><rect x="1125.0" y="103.6" width="1" height="1" fill="#ffffff"/><rect x="1088.0" y="100.8" width="1.5" height="1.5" fill="#ffffff"/><rect x="1103.2" y="90.2" width="1" height="1" fill="#ffffff"/><rect x="1112.4" y="148.5" width="1" height="1" fill="#ffffff"/><rect x="1100.2" y="116.3" width="1.5" height="1.5" fill="#ffffff"/><rect x="1126.0" y="116.1" width="1.5" height="1.5" fill="#ffffff"/><rect x="1089.4" y="125.7" width="1" height="1" fill="#ffffff"/><rect x="1095.4" y="96.5" width="1" height="1" fill="#ffffff"/><rect x="1092.5" y="101.1" width="1" height="1" fill="#ffffff"/><rect x="1083.8" y="97.0" width="1" height="1" fill="#ffffff"/><rect x="1117.0" y="91.9" width="1.5" height="1.5" fill="#ffffff"/><rect x="1154.7" y="89.6" width="1" height="1" fill="#ffffff"/><rect x="1130.6" y="116.1" width="1.5" height="1.5" fill="#ffffff"/><rect x="1146.5" y="98.2" width="1" height="1" fill="#ffffff"/><rect x="1105.2" y="142.1" width="1.5" height="1.5" fill="#ffffff"/><rect x="1132.1" y="85.5" width="1" height="1" fill="#ffffff"/><rect x="1095.6" y="102.5" width="1" height="1" fill="#ffffff"/><rect x="1083.2" y="103.9" width="1" height="1" fill="#ffffff"/><rect x="1123.8" y="107.4" width="1" height="1" fill="#ffffff"/><rect x="1087.2" y="98.1" width="1" height="1" fill="#ffffff"/><rect x="1154.0" y="85.5" width="1" height="1" fill="#ffffff"/><rect x="1142.6" y="92.0" width="1" height="1" fill="#ffffff"/><rect x="1147.0" y="106.5" width="1" height="1" fill="#ffffff"/><rect x="1146.2" y="87.4" width="1" height="1" fill="#ffffff"/><rect x="1086.0" y="108.9" width="1" height="1" fill="#ffffff"/><rect x="1089.5" y="90.4" width="1" height="1" fill="#ffffff"/><rect x="1118.5" y="105.5" width="1" height="1" fill="#ffffff"/><rect x="1099.6" y="147.2" width="1.5" height="1.5" fill="#ffffff"/><rect x="1089.6" y="100.1" width="1" height="1" fill="#ffffff"/><rect x="1142.3" y="93.8" width="1.5" height="1.5" fill="#ffffff"/><rect x="1129.1" y="106.7" width="1" height="1" fill="#ffffff"/><rect x="1119.3" y="84.9" width="1" height="1" fill="#ffffff"/><rect x="1147.6" y="104.0" width="1.5" height="1.5" fill="#ffffff"/><rect x="1119.1" y="96.0" width="1.5" height="1.5" fill="#ffffff"/><rect x="1151.6" y="91.6" width="1" height="1" fill="#ffffff"/><rect x="1153.6" y="87.7" width="1" height="1" fill="#ffffff"/><rect x="1128.7" y="96.8" width="1" height="1" fill="#ffffff"/><rect x="1141.7" y="127.4" width="1" height="1" fill="#ffffff"/><rect x="1097.5" y="89.5" width="1" height="1" fill="#ffffff"/><rect x="1103.4" y="127.9" width="1" height="1" fill="#ffffff"/><rect x="1117.5" y="101.8" width="1" height="1" fill="#ffffff"/><rect x="1137.6" y="106.7" width="1.5" height="1.5" fill="#ffffff"/><rect x="1120.5" y="85.4" width="1" height="1" fill="#ffffff"/><rect x="1082.7" y="95.0" width="1.5" height="1.5" fill="#ffffff"/><rect x="1120.1" y="94.2" width="1" height="1" fill="#ffffff"/><rect x="1118.4" y="85.5" width="1" height="1" fill="#ffffff"/><rect x="1137.6" y="117.7" width="1" height="1" fill="#ffffff"/><rect x="1092.7" y="121.1" width="1.5" height="1.5" fill="#ffffff"/><rect x="1111.8" y="88.4" width="1" height="1" fill="#ffffff"/><rect x="1104.7" y="87.4" width="1.5" height="1.5" fill="#ffffff"/><rect x="1122.3" y="85.4" width="1" height="1" fill="#ffffff"/><rect x="1129.4" y="89.6" width="1" height="1" fill="#ffffff"/><rect x="1134.1" y="129.8" width="1" height="1" fill="#ffffff"/><rect x="1099.1" y="108.4" width="1" height="1" fill="#ffffff"/><rect x="1096.7" y="110.2" width="1.5" height="1.5" fill="#ffffff"/><rect x="1144.7" y="127.9" width="1" height="1" fill="#ffffff"/><rect x="1136.6" y="133.6" width="1" height="1" fill="#ffffff"/><rect x="1093.2" y="114.2" width="1" height="1" fill="#ffffff"/><rect x="1108.0" y="101.0" width="1" height="1" fill="#ffffff"/><rect x="1133.7" y="86.0" width="1" height="1" fill="#ffffff"/><rect x="1114.3" y="133.1" width="1" height="1" fill="#ffffff"/><rect x="1137.1" y="107.6" width="1.5" height="1.5" fill="#ffffff"/><rect x="1145.6" y="99.1" width="1" height="1" fill="#ffffff"/><rect x="1142.0" y="86.0" width="1" height="1" fill="#ffffff"/><rect x="1087.1" y="90.4" width="1" height="1" fill="#ffffff"/><rect x="1140.8" y="118.5" width="1" height="1" fill="#ffffff"/><rect x="1128.6" y="84.1" width="1" height="1" fill="#ffffff"/><rect x="1102.0" y="96.0" width="1" height="1" fill="#ffffff"/><rect x="1120.5" y="91.7" width="1" height="1" fill="#ffffff"/><rect x="1099.6" y="93.1" width="1.5" height="1.5" fill="#ffffff"/><rect x="1137.1" y="98.0" width="1" height="1" fill="#ffffff"/><rect x="1066.4" y="102.9" width="1" height="1" fill="#fff4ee"/><rect x="1010.6" y="109.5" width="1" height="1" fill="#fff4ee"/><rect x="1023.9" y="121.0" width="1" height="1" fill="#fff4ee"/><rect x="1057.9" y="87.8" width="1" height="1" fill="#fff4ee"/><rect x="1042.1" y="99.8" width="1" height="1" fill="#fff4ee"/><rect x="985.8" y="83.6" width="1" height="1" fill="#fff4ee"/><rect x="1014.0" y="122.8" width="1" height="1" fill="#fff4ee"/><rect x="1076.9" y="97.4" width="1" height="1" fill="#fff4ee"/><rect x="1020.8" y="101.1" width="1" height="1" fill="#fff4ee"/><rect x="1018.1" y="83.3" width="1" height="1" fill="#fff4ee"/><rect x="1049.3" y="107.7" width="1" height="1" fill="#fff4ee"/><rect x="1063.3" y="91.2" width="1" height="1" fill="#fff4ee"/><rect x="1033.6" y="89.2" width="1" height="1" fill="#fff4ee"/><rect x="1047.9" y="94.8" width="1" height="1" fill="#fff4ee"/><rect x="1046.5" y="100.7" width="1" height="1" fill="#fff4ee"/><rect x="1042.9" y="86.2" width="1" height="1" fill="#fff4ee"/><rect x="991.1" y="93.0" width="1" height="1" fill="#fff4ee"/><rect x="1078.9" y="110.8" width="1" height="1" fill="#fff4ee"/><rect x="1009.8" y="116.8" width="1" height="1" fill="#fff4ee"/><rect x="1052.6" y="97.5" width="1" height="1" fill="#fff4ee"/><rect x="999.2" y="94.6" width="1" height="1" fill="#fff4ee"/><rect x="1057.7" y="115.2" width="1" height="1" fill="#fff4ee"/><rect x="1061.2" y="106.5" width="1" height="1" fill="#fff4ee"/><rect x="1042.0" y="100.7" width="1" height="1" fill="#fff4ee"/><rect x="1053.5" y="111.1" width="1" height="1" fill="#fff4ee"/><rect x="1047.3" y="100.0" width="1" height="1" fill="#fff4ee"/><rect x="1024.8" y="83.3" width="1" height="1" fill="#fff4ee"/><rect x="1021.9" y="116.7" width="1" height="1" fill="#fff4ee"/><rect x="1039.3" y="90.6" width="1" height="1" fill="#fff4ee"/><rect x="1003.0" y="85.3" width="1" height="1" fill="#fff4ee"/><rect x="1035.8" y="98.4" width="1" height="1" fill="#fff4ee"/><rect x="1059.6" y="110.3" width="1" height="1" fill="#fff4ee"/><rect x="1033.2" y="101.2" width="1" height="1" fill="#fff4ee"/><rect x="1065.3" y="107.3" width="1" height="1" fill="#fff4ee"/><rect x="1002.2" y="120.9" width="1" height="1" fill="#fff4ee"/><rect x="994.3" y="94.8" width="1" height="1" fill="#fff4ee"/><rect x="1061.8" y="95.3" width="1" height="1" fill="#fff4ee"/><rect x="1057.5" y="96.6" width="1" height="1" fill="#fff4ee"/><rect x="1016.9" y="113.3" width="1" height="1" fill="#fff4ee"/><rect x="993.5" y="105.3" width="1" height="1" fill="#fff4ee"/><rect x="1014.2" y="111.7" width="1" height="1" fill="#fff4ee"/><rect x="1059.9" y="91.4" width="1" height="1" fill="#fff4ee"/><rect x="1012.9" y="97.9" width="1" height="1" fill="#fff4ee"/><rect x="1065.9" y="126.4" width="1" height="1" fill="#fff4ee"/><rect x="1040.4" y="91.1" width="1" height="1" fill="#fff4ee"/><rect x="1074.7" y="124.6" width="1" height="1" fill="#fff4ee"/><rect x="1032.5" y="103.0" width="1" height="1" fill="#fff4ee"/><rect x="1067.4" y="96.6" width="1" height="1" fill="#fff4ee"/><rect x="990.1" y="95.5" width="1" height="1" fill="#fff4ee"/><rect x="1066.2" y="92.6" width="1" height="1" fill="#fff4ee"/><rect x="1023.9" y="94.2" width="1" height="1" fill="#fff4ee"/><rect x="1039.1" y="103.3" width="1" height="1" fill="#fff4ee"/><rect x="1015.1" y="96.5" width="1" height="1" fill="#fff4ee"/><rect x="1053.0" y="87.6" width="1" height="1" fill="#fff4ee"/><rect x="1044.9" y="108.0" width="1" height="1" fill="#fff4ee"/><rect x="1001.8" y="84.4" width="1" height="1" fill="#fff4ee"/><rect x="1011.0" y="84.6" width="1" height="1" fill="#fff4ee"/><rect x="1057.3" y="101.3" width="1" height="1" fill="#fff4ee"/><rect x="1031.5" y="115.6" width="1" height="1" fill="#fff4ee"/><rect x="1057.5" y="108.8" width="1" height="1" fill="#fff4ee"/><rect x="1045.2" y="99.0" width="1" height="1" fill="#fff4ee"/><rect x="1023.3" y="104.1" width="1" height="1" fill="#fff4ee"/><rect x="988.6" y="87.7" width="1" height="1" fill="#fff4ee"/><rect x="1003.9" y="85.6" width="1" height="1" fill="#fff4ee"/><rect x="1015.6" y="85.7" width="1" height="1" fill="#fff4ee"/><rect x="1064.2" y="95.1" width="1" height="1" fill="#fff4ee"/><rect x="1044.5" y="113.8" width="1" height="1" fill="#fff4ee"/><rect x="1008.6" y="90.0" width="1" height="1" fill="#fff4ee"/><rect x="997.2" y="102.0" width="1" height="1" fill="#fff4ee"/><rect x="1021.4" y="94.3" width="1" height="1" fill="#fff4ee"/><rect x="1063.3" y="90.0" width="1" height="1" fill="#fff4ee"/><rect x="1013.3" y="92.0" width="1" height="1" fill="#fff4ee"/><rect x="1041.7" y="117.3" width="1" height="1" fill="#fff4ee"/><rect x="1017.1" y="138.1" width="1" height="1" fill="#fff4ee"/><rect x="1017.6" y="129.8" width="1" height="1" fill="#fff4ee"/><rect x="1070.6" y="92.0" width="1" height="1" fill="#fff4ee"/><rect x="1075.1" y="94.0" width="1" height="1" fill="#fff4ee"/><rect x="1072.2" y="96.0" width="1" height="1" fill="#fff4ee"/><rect x="1054.1" y="92.0" width="1" height="1" fill="#fff4ee"/><rect x="997.5" y="85.9" width="1" height="1" fill="#fff4ee"/><rect x="1001.1" y="112.2" width="1" height="1" fill="#fff4ee"/><rect x="1019.8" y="86.6" width="1" height="1" fill="#fff4ee"/><rect x="1068.3" y="87.9" width="1" height="1" fill="#fff4ee"/><rect x="1009.3" y="89.8" width="1" height="1" fill="#fff4ee"/><rect x="1047.9" y="85.5" width="1" height="1" fill="#fff4ee"/><rect x="1050.5" y="86.6" width="1" height="1" fill="#fff4ee"/><rect x="1024.6" y="103.2" width="1" height="1" fill="#fff4ee"/><rect x="1030.1" y="101.9" width="1" height="1" fill="#fff4ee"/><rect x="999.5" y="93.5" width="1" height="1" fill="#fff4ee"/><rect x="1013.6" y="112.2" width="1" height="1" fill="#fff4ee"/><rect x="1047.9" y="92.1" width="1" height="1" fill="#fff4ee"/><rect x="1042.5" y="97.9" width="1" height="1" fill="#fff4ee"/><rect x="998.0" y="88.0" width="1" height="1" fill="#fff4ee"/><rect x="1053.3" y="92.1" width="1" height="1" fill="#fff4ee"/><rect x="996.2" y="90.9" width="1" height="1" fill="#fff4ee"/><rect x="1003.9" y="89.8" width="1" height="1" fill="#fff4ee"/><rect x="1004.0" y="85.2" width="1" height="1" fill="#fff4ee"/><rect x="1004.2" y="109.7" width="1" height="1" fill="#fff4ee"/><rect x="1051.8" y="84.8" width="1" height="1" fill="#fff4ee"/><rect x="1032.2" y="89.0" width="1" height="1" fill="#fff4ee"/><rect x="1004.7" y="101.0" width="1" height="1" fill="#fff4ee"/><rect x="985.3" y="91.0" width="1" height="1" fill="#fff4ee"/><rect x="1048.8" y="117.8" width="1" height="1" fill="#fff4ee"/><rect x="1048.6" y="106.1" width="1" height="1" fill="#fff4ee"/><rect x="999.2" y="105.2" width="1" height="1" fill="#fff4ee"/><rect x="1053.7" y="97.1" width="1" height="1" fill="#fff4ee"/><rect x="994.6" y="83.6" width="1" height="1" fill="#fff4ee"/><rect x="1013.1" y="92.8" width="1" height="1" fill="#fff4ee"/><rect x="1001.6" y="85.2" width="1" height="1" fill="#fff4ee"/><rect x="988.7" y="93.0" width="1" height="1" fill="#fff4ee"/><rect x="1014.7" y="121.3" width="1" height="1" fill="#fff4ee"/><rect x="1055.2" y="113.7" width="1" height="1" fill="#fff4ee"/><rect x="1065.9" y="90.0" width="1" height="1" fill="#fff4ee"/><rect x="1019.0" y="94.5" width="1" height="1" fill="#fff4ee"/><rect x="1026.6" y="115.6" width="1" height="1" fill="#fff4ee"/><rect x="1062.4" y="92.1" width="1" height="1" fill="#fff4ee"/><rect x="1076.4" y="103.3" width="1" height="1" fill="#fff4ee"/><rect x="1010.8" y="115.3" width="1" height="1" fill="#fff4ee"/><rect x="1061.0" y="111.2" width="1" height="1" fill="#fff4ee"/><rect x="1046.6" y="86.1" width="1" height="1" fill="#fff4ee"/><rect x="1051.1" y="93.3" width="1" height="1" fill="#fff4ee"/><rect x="990.6" y="95.1" width="1" height="1" fill="#fff4ee"/><rect x="1024.5" y="87.6" width="1" height="1" fill="#fff4ee"/><rect x="1041.1" y="93.7" width="1" height="1" fill="#fff4ee"/><rect x="1002.2" y="114.4" width="1" height="1" fill="#fff4ee"/><rect x="1021.1" y="86.4" width="1" height="1" fill="#fff4ee"/><rect x="1050.0" y="87.1" width="1" height="1" fill="#fff4ee"/><rect x="1064.7" y="94.5" width="1" height="1" fill="#fff4ee"/><rect x="1072.4" y="84.9" width="1" height="1" fill="#fff4ee"/><rect x="995.7" y="88.7" width="1" height="1" fill="#fff4ee"/><rect x="1009.9" y="86.6" width="1" height="1" fill="#fff4ee"/><rect x="1014.9" y="92.3" width="1" height="1" fill="#fff4ee"/><rect x="1057.9" y="114.8" width="1" height="1" fill="#fff4ee"/><rect x="1039.8" y="138.7" width="1" height="1" fill="#fff4ee"/><rect x="1048.6" y="107.1" width="1" height="1" fill="#fff4ee"/><rect x="1017.1" y="116.8" width="1" height="1" fill="#fff4ee"/><rect x="994.0" y="87.9" width="1" height="1" fill="#fff4ee"/><rect x="1047.9" y="83.2" width="1" height="1" fill="#fff4ee"/><rect x="1049.2" y="103.3" width="1" height="1" fill="#fff4ee"/><rect x="1021.6" y="97.9" width="1" height="1" fill="#fff4ee"/><rect x="1078.8" y="106.8" width="1" height="1" fill="#fff4ee"/><rect x="990.2" y="91.0" width="1" height="1" fill="#fff4ee"/><rect x="1065.6" y="93.1" width="1" height="1" fill="#fff4ee"/><rect x="1065.9" y="88.9" width="1" height="1" fill="#fff4ee"/><rect x="1031.7" y="89.3" width="1" height="1" fill="#fff4ee"/><rect x="1007.9" y="89.9" width="1" height="1" fill="#fff4ee"/><rect x="1006.2" y="84.3" width="1" height="1" fill="#fff4ee"/><rect x="1046.1" y="96.2" width="1" height="1" fill="#fff4ee"/><rect x="1028.6" y="92.2" width="1" height="1" fill="#fff4ee"/><rect x="1061.1" y="124.1" width="1" height="1" fill="#fff4ee"/><circle cx="858.8" cy="104.2" r="21.5" fill="#fbf1ec"/><circle cx="858.8" cy="104.2" r="18" fill="#a9cfcf"/><circle cx="662" cy="84" r="5" fill="#fff"/><path d="M738 83 Q752 86 753 99 Q754 86 767 83 Z" fill="#fff"/><circle cx="986" cy="142" r="3.5" fill="#fff"/><circle cx="667" cy="362" r="3.5" fill="#fff"/><circle cx="1032" cy="292" r="3.5" fill="#f4c6b8"/><circle cx="624" cy="485" r="27" fill="#fff"/><linearGradient id="gRingL" x1="-230" y1="0" x2="230" y2="0" gradientUnits="userSpaceOnUse"><stop offset="0" stop-color="#b4d6d4"/><stop offset="0.22" stop-color="#b8d4d2"/><stop offset="0.45" stop-color="#cdbdb6"/><stop offset="0.7" stop-color="#dcaa9e"/><stop offset="1" stop-color="#e3a496"/></linearGradient><g transform="translate(891.7 288.7) rotate(-28.93)"><path d="M-224.8 0 A224.8 40 0 1 0 224.8 0 A224.8 40 0 1 0 -224.8 0 Z M-160.6 -1.2 A161.4 22 0 1 1 162.20000000000002 -1.2 A161.4 22 0 1 1 -160.6 -1.2 Z" fill="url(#gRingL)" fill-rule="evenodd" stroke="#f6e6df" stroke-width="2.5"/></g><circle cx="886" cy="281" r="101" fill="#f3ddd2"/><clipPath id="sph2"><circle cx="886" cy="281" r="98.5"/></clipPath><clipPath id="inIC"><circle cx="861.4" cy="299.1" r="98.1"/></clipPath><clipPath id="outIC"><path clip-rule="evenodd" d="M600 70 H1160 V490 H600 Z M763.3 299.1 a98.1 98.1 0 1 0 196.2 0 a98.1 98.1 0 1 0 -196.2 0 Z"/></clipPath><linearGradient id="gBand" x1="-100" y1="0" x2="100" y2="0" gradientUnits="userSpaceOnUse"><stop offset="0" stop-color="#d5432f" stop-opacity="0.12"/><stop offset="0.5" stop-color="#d5432f" stop-opacity="0.55"/><stop offset="1" stop-color="#d5432f" stop-opacity="0.9"/></linearGradient><g clip-path="url(#sph2)"><rect x="780" y="175" width="220" height="220" fill="#e8927f"/><g clip-path="url(#outIC)"><rect x="780" y="175" width="220" height="220" fill="#d5432f"/><g transform="translate(886 281) rotate(-27.2)"><rect x="-130" y="-74" width="260" height="8" fill="#eb9f8b"/><rect x="-130" y="-46" width="260" height="8" fill="#eb9f8b"/><rect x="-130" y="-16" width="260" height="8" fill="#eb9f8b"/><rect x="-130" y="16" width="260" height="8" fill="#eb9f8b"/><rect x="-130" y="46" width="260" height="8" fill="#eb9f8b"/><rect x="-130" y="76" width="260" height="8" fill="#eb9f8b"/></g></g><g clip-path="url(#inIC)"><g transform="translate(886 281) rotate(-27.2)"><rect x="-130" y="-63" width="260" height="14" fill="url(#gBand)"/><rect x="-130" y="-34" width="260" height="14" fill="url(#gBand)"/><rect x="-130" y="-3" width="260" height="14" fill="url(#gBand)"/><rect x="-130" y="28" width="260" height="14" fill="url(#gBand)"/><rect x="-130" y="58" width="260" height="14" fill="url(#gBand)"/></g></g><g transform="translate(886 281) rotate(-27.2)"><rect x="-130" y="-64" width="260" height="1.6" fill="#efc7b9"/><rect x="-130" y="-49.6" width="260" height="1.6" fill="#efc7b9"/><rect x="-130" y="-35" width="260" height="1.6" fill="#efc7b9"/><rect x="-130" y="-20.6" width="260" height="1.6" fill="#efc7b9"/><rect x="-130" y="-4" width="260" height="1.6" fill="#efc7b9"/><rect x="-130" y="10.4" width="260" height="1.6" fill="#efc7b9"/><rect x="-130" y="27" width="260" height="1.6" fill="#efc7b9"/><rect x="-130" y="41.4" width="260" height="1.6" fill="#efc7b9"/><rect x="-130" y="57" width="260" height="1.6" fill="#efc7b9"/><rect x="-130" y="71.4" width="260" height="1.6" fill="#efc7b9"/></g><circle cx="861.4" cy="299.1" r="98.1" fill="none" stroke="#efc7b9" stroke-width="2"/></g><circle cx="886" cy="281" r="99.8" fill="none" stroke="#f3ddd2" stroke-width="2.6"/><circle cx="886" cy="281" r="98" fill="none" stroke="#3a9ea6" stroke-width="0.7"/><circle cx="923.5" cy="245" r="5" fill="#d9874a" stroke="#3a9ea6" stroke-width="0.8"/><clipPath id="front"><rect x="-240" y="-2" width="480" height="60" transform="translate(891.7 288.7) rotate(-28.93)"/></clipPath><g clip-path="url(#front)"><g transform="translate(891.7 288.7) rotate(-28.93)"><path d="M-224.8 0 A224.8 40 0 1 0 224.8 0 A224.8 40 0 1 0 -224.8 0 Z M-160.6 -1.2 A161.4 22 0 1 1 162.20000000000002 -1.2 A161.4 22 0 1 1 -160.6 -1.2 Z" fill="url(#gRingL)" fill-rule="evenodd" stroke="#f6e6df" stroke-width="2.5"/></g></g><clipPath id="outSph"><path clip-rule="evenodd" d="M600 70 H1160 V490 H600 Z M785 281 a101 101 0 1 0 202 0 a101 101 0 1 0 -202 0 Z"/></clipPath><g clip-path="url(#front)"><g transform="translate(891.7 288.7) rotate(-28.93)" fill="none" stroke="#3a9ea6" stroke-width="0.7"><ellipse cx="0" cy="0" rx="223.20000000000002" ry="38.4"/><ellipse cx="0.8" cy="-1.2" rx="163.0" ry="23.6"/></g></g><g clip-path="url(#outSph)"><g transform="translate(891.7 288.7) rotate(-28.93)" fill="none" stroke="#3a9ea6" stroke-width="0.7"><ellipse cx="0" cy="0" rx="223.20000000000002" ry="38.4"/><ellipse cx="0.8" cy="-1.2" rx="163.0" ry="23.6"/></g></g><rect x="876.5" y="377.6" width="2" height="2" fill="#168a94"/><rect x="868.0" y="376.5" width="2" height="2" fill="#168a94"/><rect x="859.6" y="374.7" width="2" height="2" fill="#168a94"/><rect x="851.5" y="372.1" width="2" height="2" fill="#168a94"/><rect x="843.6" y="368.8" width="2" height="2" fill="#168a94"/><rect x="836.0" y="364.9" width="2" height="2" fill="#168a94"/><rect x="828.8" y="360.3" width="2" height="2" fill="#168a94"/><rect x="822.0" y="355.1" width="2" height="2" fill="#168a94"/><rect x="815.7" y="349.3" width="2" height="2" fill="#168a94"/><rect x="809.9" y="343.0" width="2" height="2" fill="#168a94"/><rect x="804.7" y="336.2" width="2" height="2" fill="#168a94"/><rect x="800.1" y="329.0" width="2" height="2" fill="#168a94"/><rect x="796.2" y="321.4" width="2" height="2" fill="#168a94"/><rect x="792.9" y="313.5" width="2" height="2" fill="#168a94"/><rect x="790.3" y="305.4" width="2" height="2" fill="#168a94"/><circle cx="793.9" cy="247.5" r="1.3" fill="#168a94"/><circle cx="802.9" cy="229.1" r="1.3" fill="#168a94"/><circle cx="816.7" cy="211.7" r="1.3" fill="#168a94"/><circle cx="834.1" cy="197.9" r="1.3" fill="#168a94"/><circle cx="852.5" cy="188.9" r="1.3" fill="#168a94"/><circle cx="872.4" cy="184.0" r="1.3" fill="#168a94"/><circle cx="894.5" cy="183.4" r="1.3" fill="#168a94"/><circle cx="916.3" cy="187.8" r="1.3" fill="#168a94"/><circle cx="935.0" cy="196.1" r="1.3" fill="#168a94"/><circle cx="951.6" cy="208.2" r="1.3" fill="#168a94"/><circle cx="966.3" cy="224.8" r="1.3" fill="#168a94"/><circle cx="976.9" cy="244.3" r="1.3" fill="#168a94"/><circle cx="982.5" cy="264.0" r="1.3" fill="#168a94"/><circle cx="983.6" cy="289.5" r="1.3" fill="#168a94"/><circle cx="979.2" cy="311.3" r="1.3" fill="#168a94"/><circle cx="970.9" cy="330.0" r="1.3" fill="#168a94"/><circle cx="812" cy="238" r="1.3" fill="#168a94"/><circle cx="893" cy="215" r="1.3" fill="#168a94"/><circle cx="918" cy="217" r="1.3" fill="#168a94"/><circle cx="953" cy="248" r="1.3" fill="#168a94"/><circle cx="878" cy="328" r="1.3" fill="#168a94"/><circle cx="813" cy="358" r="1.3" fill="#168a94"/><circle cx="838" cy="366" r="1.3" fill="#168a94"/><circle cx="760" cy="360" r="1.3" fill="#168a94"/><circle cx="905" cy="259" r="1.3" fill="#168a94"/><circle cx="944" cy="206" r="1.3" fill="#168a94"/><circle cx="1031" cy="206" r="1.3" fill="#168a94"/><circle cx="815" cy="236" r="1.7" fill="none" stroke="#3aa0a8" stroke-width="0.7"/><circle cx="880" cy="326" r="1.7" fill="none" stroke="#3aa0a8" stroke-width="0.7"/><circle cx="785" cy="296" r="1.7" fill="none" stroke="#3aa0a8" stroke-width="0.7"/><circle cx="957" cy="207" r="1.7" fill="none" stroke="#3aa0a8" stroke-width="0.7"/><circle cx="971" cy="207" r="1.7" fill="none" stroke="#3aa0a8" stroke-width="0.7"/><circle cx="790" cy="320" r="1.7" fill="none" stroke="#3aa0a8" stroke-width="0.7"/><g stroke="#b83a2a" stroke-width="1.5" fill="#fdf5f0" stroke-linejoin="round" stroke-linecap="round"><path d="M893 358 Q893 350 901 350 L981 350 Q989 351 989 359 L989 490 L893 490 Z"/><path d="M982 356 L982 490" fill="none" stroke-width="1"/><path d="M897 352 L899 337 Q900 331 907 331 L968 331 Q975 332 976 338 L977 352 Z"/><path d="M912 333 L915 344 L960 344 L963 333" fill="none" stroke-width="1.1"/><rect x="897.5" y="344" width="9" height="7" rx="1.5" stroke-width="1.1"/><rect x="968" y="355" width="6" height="6" stroke-width="1"/><path d="M886 412 Q892 401 906 400 L956 400 Q972 402 977 418 L983 450 Q985 470 980 490 L889 490 L888 455 Q886 430 886 412 Z"/><path d="M904 398 Q931 412 958 398 L958 404 Q931 418 904 404 Z" stroke-width="1.1"/><ellipse cx="931" cy="375" rx="32" ry="28.5"/><rect x="955" y="363" width="11" height="20" rx="3"/><rect x="896" y="363" width="9" height="20" rx="3"/></g><radialGradient id="gV2" cx="0.55" cy="0.35" r="0.75"><stop offset="0" stop-color="#7a2c1e"/><stop offset="0.5" stop-color="#5a1e14"/><stop offset="1" stop-color="#8a3424"/></radialGradient><ellipse cx="928" cy="375.5" rx="25.5" ry="23" fill="url(#gV2)" stroke="#b83a2a" stroke-width="1.2"/><path d="M909 380 Q908 364 920 357" stroke="#e8b8a8" stroke-width="1.2" fill="none"/><circle cx="942.3" cy="369.3" r="3.6" fill="#fff"/><g stroke="#b83a2a" stroke-width="1.5" fill="#fdf5f0" stroke-linejoin="round" stroke-linecap="round"><path d="M895 402 Q874 410 866 430 L861 441 L874 447 Q882 434 898 424 Z"/><path d="M962 404 Q980 412 980 440 Q978 452 960 452 L952 436 Q964 430 958 418 Z"/><rect x="897.5" y="421" width="32.5" height="22" rx="2"/><rect x="930" y="427" width="12" height="12" rx="2" stroke-width="1.1"/><path d="M863 444.5 L934 444.5 L934 449.5 L863 449.5 Z"/><path d="M894 449.5 L902 449.5 L902 490 L894 490 Z"/><path d="M902 455 L970 458 L970 463 L902 461 Z" stroke-width="1.1"/><path d="M849 441 Q850 433 858 433 L866 434 Q872 438 869 446 L868 452 Q858 456 851 452 Q848 447 849 441 Z"/><path d="M933 442 Q936 434 946 435 L955 436 Q959 445 957 452 Q949 457 939 455 Q932 450 933 442 Z"/></g><path d="M963 417 L975 414 L978 426 L966 430 Z" fill="#d03c2c" stroke="#b83a2a" stroke-width="0.8"/><path d="M902 392 Q945 380 990 356" stroke="#3aa0a8" stroke-width="0.6" fill="none" opacity="0.8"/><g stroke="#c13c2c" stroke-width="2.6" fill="#fcf2eb" stroke-linejoin="round"><path d="M1113 490 L1113 189 L1160 186 L1160 490 Z" stroke-width="2"/><path d="M1090 168 L1101 181 L1113 181 L1160 180 L1160 168 L1113 167 Z"/><path d="M1113 127 L1160 132 L1160 152 L1113 148 Z"/><path d="M1113 148 L1160 152 L1160 171 L1113 167 Z"/><path d="M1128 124 C1118 119 1108 120 1107 132 L1106 150 C1105 160 1093 162 1090 153 C1088 146 1092 140 1097 142 L1100 150 L1113 150 L1113 127 Z" stroke="none"/><path d="M1128 124 C1118 119 1108 120 1107 132 L1106 150 C1105 160 1093 162 1090 153 C1088 146 1092 140 1097 142" fill="none" stroke-width="3"/><path d="M1118 128 C1113 130 1112 134 1112 140 L1111 156 C1110 166 1098 170 1090 166" fill="none" stroke-width="2.4"/><rect x="1074" y="150" width="13" height="16"/><path d="M1087 166 L1090 168" fill="none"/></g><g stroke="#c13c2c" stroke-width="1.6" fill="#fcf2eb"><rect x="1145" y="208" width="14" height="41"/><rect x="1145" y="302" width="14" height="40"/><rect x="1145" y="397" width="14" height="40"/></g><g stroke="#c13c2c" stroke-width="0.9"><path d="M1150 210 V247 M1150 304 V340 M1150 399 V435"/></g><path d="M990 418 Q1060 400 1118 351" stroke="#fbeee8" stroke-width="2.5" fill="none"/><path d="M981 456 Q1050 440 1118 393" stroke="#eec0b2" stroke-width="3" fill="none"/><path d="M1106 483 L1118 440 L1118 483 Z" fill="#f4dcd6"/></g></svg><svg style="left:462px;top:33px" width="30" height="10" viewBox="0 0 30 10"><circle cx="5.6" cy="5.2" r="3.3" fill="#ee5f57"/><circle cx="5.6" cy="5.2" r="1.4" fill="#7a1d14"/><circle cx="15" cy="5.2" r="3.3" fill="#f3c03a"/><circle cx="24.3" cy="5.2" r="3.3" fill="#5ac23b"/></svg><svg style="left:495px;top:33px" width="11" height="10" viewBox="0 0 11 10"><path d="M1 5 L5.5 1 L10 5 L8.6 5 L8.6 9 L6.5 9 L6.5 6.5 L4.5 6.5 L4.5 9 L2.4 9 L2.4 5 Z" fill="#e6e6e6"/></svg><svg style="left:513px;top:35px" width="16" height="7" viewBox="0 0 16 7"><rect x="0.5" y="0.5" width="3" height="2.5" fill="#d8d8d8"/><rect x="4.5" y="0.5" width="3" height="2.5" fill="#d8d8d8"/><rect x="0.5" y="4" width="3" height="2.5" fill="#d8d8d8"/><rect x="4.5" y="4" width="3" height="2.5" fill="#d8d8d8"/><path d="M11.5 2.3 L13 3.8 L14.5 2.3" stroke="#cfcfcf" stroke-width="0.9" fill="none"/></svg><div class="t" style="left:786px;top:34.3px;font-size:7.0px;color:#e2e2e2;transform:scaleX(0.87);transform-origin:0 0;">Adobe Illustrator 2020</div><svg style="left:1034px;top:34.5px" width="12.0" height="6.2" viewBox="0 0 12.0 6.2"><path d="M1.04 0.00V5.20 M0.00 1.82H2.08 M2.68 0.40H5.20 M2.68 2.86H5.20 M3.08 0.00V5.20 M4.80 0.00V5.20" stroke="#dadada" stroke-width="0.9" fill="none"/><path d="M6.40 0.00V5.20 M6.40 0.40H11.20 M7.56 2.34H11.20 M7.56 4.80H11.20 M9.38 0.40V5.20" stroke="#dadada" stroke-width="0.9" fill="none"/></svg><svg style="left:1049px;top:36.3px" width="6" height="4" viewBox="0 0 6 4"><path d="M0.8 0.8 L3 2.6 L5.2 0.8" stroke="#d0d0d0" stroke-width="0.9" fill="none"/></svg><div style="position:absolute;left:1064px;top:34px;width:92px;height:8px;background:#474747;"></div><svg style="left:1065px;top:34.5px" width="12" height="7" viewBox="0 0 12 7"><circle cx="3.2" cy="3" r="2" stroke="#cfcfcf" stroke-width="0.9" fill="none"/><path d="M4.6 4.4 L6 5.9" stroke="#cfcfcf" stroke-width="1"/><path d="M7.5 2.6 L8.7 3.8 L9.9 2.6" stroke="#cfcfcf" stroke-width="0.8" fill="none"/></svg><svg style="left:1076px;top:35.5px" width="11.2" height="6" viewBox="0 0 11.2 6"><path d="M1.00 0.00V5.00 M0.00 1.75H2.00 M2.60 0.40H5.00 M2.60 2.75H5.00 M3.00 0.00V5.00 M4.60 0.00V5.00 M2.60 4.60H5.00" stroke="#8a8a8a" stroke-width="0.8" fill="none"/><path d="M6.60 0.00V5.00 M5.60 1.75H7.60 M8.20 0.40H10.60 M8.20 2.75H10.60 M8.60 0.00V5.00 M10.20 0.00V5.00 M8.20 4.60H10.60" stroke="#8a8a8a" stroke-width="0.8" fill="none"/></svg><div class="t" style="left:1088.5px;top:35.2px;font-size:6.2px;color:#8d8d8d;">Adobe</div><svg style="left:1107px;top:35.5px" width="11.2" height="6" viewBox="0 0 11.2 6"><path d="M0.40 0.00V5.00 M0.40 0.40H5.00 M1.50 2.25H5.00 M1.50 4.60H5.00 M3.25 0.40V5.00" stroke="#8a8a8a" stroke-width="0.8" fill="none"/><path d="M6.60 0.00V5.00 M5.60 1.75H7.60 M8.20 0.40H10.60 M8.20 2.75H10.60 M8.60 0.00V5.00 M10.20 0.00V5.00" stroke="#8a8a8a" stroke-width="0.8" fill="none"/></svg><div style="position:absolute;left:463.5px;top:49px;width:1px;height:9px;background:#3f3f3f;"></div><svg style="left:467.5px;top:51px" width="12.8" height="6.6" viewBox="0 0 12.8 6.6"><path d="M1.12 0.00V5.60 M0.00 1.96H2.24 M2.84 0.40H5.60 M2.84 3.08H5.60 M3.24 0.00V5.60 M5.20 0.00V5.60 M2.84 5.20H5.60" stroke="#d6d6d6" stroke-width="0.9" fill="none"/><path d="M7.52 0.00V5.60 M6.40 1.96H8.64 M9.24 0.40H12.00 M9.24 3.08H12.00 M9.64 0.00V5.60 M11.60 0.00V5.60 M9.24 5.20H12.00" stroke="#d6d6d6" stroke-width="0.9" fill="none"/></svg><div style="position:absolute;left:513px;top:49px;width:9.5px;height:10px;background:#3c3c3c;box-shadow:inset 0 0 0 1px #d8d8d8;"></div><div class="t" style="left:515.6px;top:50.3px;font-size:8px;color:#e0e0e0;">?</div><div style="position:absolute;left:523.5px;top:49px;width:6px;height:10px;background:#474747;"></div><svg style="left:523.5px;top:51.6px" width="6" height="4" viewBox="0 0 6 4"><path d="M0.8 0.8 L3 2.6 L5.2 0.8" stroke="#cfcfcf" stroke-width="0.9" fill="none"/></svg><div style="position:absolute;left:533.8px;top:49px;width:9.4px;height:10px;background:#f6e6df;"></div><div style="position:absolute;left:537.2px;top:52.8px;width:2.6px;height:2.6px;background:#e06a55;border-radius:50%;"></div><div style="position:absolute;left:544.5px;top:49px;width:6px;height:10px;background:#474747;"></div><svg style="left:544.5px;top:51.6px" width="6" height="4" viewBox="0 0 6 4"><path d="M0.8 0.8 L3 2.6 L5.2 0.8" stroke="#cfcfcf" stroke-width="0.9" fill="none"/></svg><svg style="left:557px;top:50.6px" width="13.6" height="7" viewBox="0 0 13.6 7"><path d="M1.20 0.00V6.00 M0.00 2.10H2.40 M3.00 0.40H6.00 M3.00 3.30H6.00 M3.40 0.00V6.00 M5.60 0.00V6.00" stroke="#d4d4d4" stroke-width="0.9" fill="none"/><path d="M8.00 0.00V6.00 M6.80 2.10H9.20 M9.80 0.40H12.80 M9.80 3.30H12.80 M10.20 0.00V6.00 M12.40 0.00V6.00" stroke="#d4d4d4" stroke-width="0.9" fill="none"/></svg><div class="t" style="left:570.8px;top:50.2px;font-size:7px;color:#d4d4d4;">:</div><svg style="left:575px;top:49px" width="7" height="10" viewBox="0 0 7 10"><path d="M1.5 3.5 L3.5 1.5 L5.5 3.5 M1.5 6.5 L3.5 8.5 L5.5 6.5" stroke="#cfcfcf" stroke-width="0.9" fill="none"/></svg><div style="position:absolute;left:583px;top:49px;width:22px;height:10px;background:#474747;"></div><div style="position:absolute;left:606px;top:49px;width:7px;height:10px;background:#474747;"></div><svg style="left:606.3px;top:51.6px" width="6" height="4" viewBox="0 0 6 4"><path d="M0.8 0.8 L3 2.6 L5.2 0.8" stroke="#cfcfcf" stroke-width="0.9" fill="none"/></svg><div style="position:absolute;left:617px;top:48.8px;width:42px;height:10.5px;background:#f2f2f2;"></div><div style="position:absolute;left:620px;top:53.3px;width:22px;height:1.4px;background:#1a1a1a;"></div><svg style="left:644px;top:51px" width="12.8" height="6.8" viewBox="0 0 12.8 6.8"><path d="M1.16 0.00V5.80 M0.00 2.03H2.32 M2.92 0.40H5.80 M2.92 3.19H5.80 M3.32 0.00V5.80 M5.40 0.00V5.80 M2.92 5.40H5.80" stroke="#2a2a2a" stroke-width="0.9" fill="none"/><path d="M6.80 0.00V5.80 M6.80 0.40H12.20 M8.14 2.61H12.20 M8.14 5.40H12.20 M10.17 0.40V5.80" stroke="#2a2a2a" stroke-width="0.9" fill="none"/></svg><div style="position:absolute;left:660px;top:49px;width:6px;height:10px;background:#474747;"></div><svg style="left:660.2px;top:51.6px" width="6" height="4" viewBox="0 0 6 4"><path d="M0.8 0.8 L3 2.6 L5.2 0.8" stroke="#cfcfcf" stroke-width="0.9" fill="none"/></svg><div style="position:absolute;left:670px;top:48.8px;width:40.8px;height:10.5px;background:#f2f2f2;"></div><div style="position:absolute;left:672.5px;top:53.3px;width:22px;height:1.4px;background:#1a1a1a;"></div><svg style="left:696.5px;top:51px" width="12.8" height="6.8" viewBox="0 0 12.8 6.8"><path d="M1.16 0.00V5.80 M0.00 2.03H2.32 M2.92 0.40H5.80 M2.92 3.19H5.80 M3.32 0.00V5.80 M5.40 0.00V5.80" stroke="#2a2a2a" stroke-width="0.9" fill="none"/><path d="M6.80 0.00V5.80 M6.80 0.40H12.20 M8.14 2.61H12.20 M8.14 5.40H12.20 M10.17 0.40V5.80" stroke="#2a2a2a" stroke-width="0.9" fill="none"/></svg><div style="position:absolute;left:712px;top:49px;width:6.5px;height:10px;background:#474747;"></div><svg style="left:712.3px;top:51.6px" width="6" height="4" viewBox="0 0 6 4"><path d="M0.8 0.8 L3 2.6 L5.2 0.8" stroke="#cfcfcf" stroke-width="0.9" fill="none"/></svg><svg style="left:723px;top:50.8px" width="26.0" height="6.8" viewBox="0 0 26.0 6.8"><path d="M0.00 0.50H5.80 M0.50 2.90H5.30 M0.00 5.40H5.80 M2.90 0.00V5.80 M0.50 2.90V5.80" stroke="#cdcdcd" stroke-width="0.9" fill="none"/><path d="M6.90 0.00V5.80 M6.90 0.40H12.30 M8.24 2.61H12.30 M8.24 5.40H12.30 M10.27 0.40V5.80" stroke="#cdcdcd" stroke-width="0.9" fill="none"/><path d="M13.00 0.50H18.80 M13.50 2.90H18.30 M13.00 5.40H18.80 M15.90 0.00V5.80 M13.50 2.90V5.80" stroke="#cdcdcd" stroke-width="0.9" fill="none"/><path d="M19.90 0.00V5.80 M19.90 0.40H25.30 M21.24 2.61H25.30 M21.24 5.40H25.30 M23.27 0.40V5.80" stroke="#cdcdcd" stroke-width="0.9" fill="none"/></svg><div class="t" style="left:749px;top:50.2px;font-size:7px;color:#cdcdcd;">:</div><div style="position:absolute;left:752.5px;top:49px;width:25px;height:10px;background:#474747;"></div><div class="t" style="left:754px;top:50.8px;font-size:6.8px;color:#dedede;transform:scaleX(0.85);transform-origin:0 0;">100%</div><div style="position:absolute;left:779px;top:49px;width:6.5px;height:10px;background:#474747;"></div><svg style="left:779px;top:49px" width="7" height="10" viewBox="0 0 7 10"><path d="M2.5 3 L4.5 5 L2.5 7" stroke="#cfcfcf" stroke-width="0.9" fill="none"/></svg><svg style="left:788.8px;top:50.8px" width="13.0" height="6.8" viewBox="0 0 13.0 6.8"><path d="M0.00 0.50H5.80 M0.50 2.90H5.30 M0.00 5.40H5.80 M2.90 0.00V5.80 M0.50 2.90V5.80" stroke="#cdcdcd" stroke-width="0.9" fill="none"/><path d="M7.66 0.00V5.80 M6.50 2.03H8.82 M9.42 0.40H12.30 M9.42 3.19H12.30 M9.82 0.00V5.80 M11.90 0.00V5.80" stroke="#cdcdcd" stroke-width="0.9" fill="none"/></svg><div class="t" style="left:801.6px;top:50.2px;font-size:7px;color:#cdcdcd;">:</div><div style="position:absolute;left:805.6px;top:49px;width:9.6px;height:10px;background:#e6e6e6;"></div><div style="position:absolute;left:817px;top:49px;width:6px;height:10px;background:#474747;"></div><svg style="left:817px;top:51.6px" width="6" height="4" viewBox="0 0 6 4"><path d="M0.8 0.8 L3 2.6 L5.2 0.8" stroke="#cfcfcf" stroke-width="0.9" fill="none"/></svg><svg style="left:830px;top:49px" width="10" height="10" viewBox="0 0 10 10"><circle cx="5" cy="5" r="4" fill="#bdbdbd"/><path d="M2.8 3.6 Q4.5 2.4 5.4 4 Q6 6 4 7.3 M6.4 2 Q7.8 4 7.1 6.6" stroke="#5a5a5a" stroke-width="0.9" fill="none"/></svg><div style="position:absolute;left:843.5px;top:48px;width:0.8px;height:11px;background:#3f3f3f;"></div><svg style="left:849px;top:49px" width="14" height="10" viewBox="0 0 14 10"><g fill="#cfcfcf"><rect x="0.5" y="1" width="2" height="1.6"/><rect x="3.5" y="1" width="2" height="1.6"/><rect x="6.5" y="1" width="1.2" height="8"/><rect x="0.5" y="4" width="2" height="1.6"/><rect x="3.5" y="4" width="2" height="1.6"/><rect x="0.5" y="7" width="2" height="1.6"/><rect x="3.5" y="7" width="2" height="1.6"/></g><path d="M9 4.3 L10.5 5.8 L12 4.3" stroke="#cfcfcf" stroke-width="0.8" fill="none"/></svg><svg style="left:871px;top:51px" width="13.0" height="6.8" viewBox="0 0 13.0 6.8"><path d="M1.16 0.00V5.80 M0.00 2.03H2.32 M2.92 0.40H5.80 M2.92 3.19H5.80 M3.32 0.00V5.80 M5.40 0.00V5.80" stroke="#dcdcdc" stroke-width="0.9" fill="none"/><path d="M7.66 0.00V5.80 M6.50 2.03H8.82 M9.42 0.40H12.30 M9.42 3.19H12.30 M9.82 0.00V5.80 M11.90 0.00V5.80 M9.42 5.40H12.30" stroke="#dcdcdc" stroke-width="0.9" fill="none"/></svg><svg style="left:890px;top:49px" width="10" height="10" viewBox="0 0 10 10"><path d="M1 1 L3.5 3.5 M9 1 L6.5 3.5 M1 9 L3.5 6.5 M9 9 L6.5 6.5" stroke="#d6d6d6" stroke-width="1"/><rect x="3" y="3.5" width="4" height="3" fill="none" stroke="#d6d6d6" stroke-width="0.9"/></svg><svg style="left:905px;top:49px" width="17" height="10" viewBox="0 0 17 10"><rect x="1" y="3" width="3" height="2.5" fill="none" stroke="#d0d0d0" stroke-width="0.9"/><path d="M5 2 L7.5 2 L7.5 5 M4.5 4 L7.5 8.5 L6 6.6 L4.5 8" stroke="#d0d0d0" stroke-width="0.9" fill="#d0d0d0"/><path d="M11.5 3.8 L13 5.3 L14.5 3.8" stroke="#cfcfcf" stroke-width="0.8" fill="none"/></svg><svg style="left:928px;top:49px" width="19" height="10" viewBox="0 0 19 10"><rect x="1" y="3" width="3" height="2.5" fill="none" stroke="#d0d0d0" stroke-width="0.9"/><path d="M4.5 8.5 L8.5 2.5" stroke="#d0d0d0" stroke-width="1.6"/><path d="M5.5 1.8 L8 1.8" stroke="#d0d0d0" stroke-width="0.9"/><path d="M14 3.8 L15.5 5.3 L17 3.8" stroke="#cfcfcf" stroke-width="0.8" fill="none"/></svg><svg style="left:1123px;top:49px" width="34" height="10" viewBox="0 0 34 10"><g fill="#d6d6d6"><rect x="1" y="2" width="2.5" height="2.5"/><rect x="4.5" y="2" width="2.5" height="2.5"/><rect x="1" y="5.5" width="2.5" height="2.5"/><rect x="4.5" y="5.5" width="2.5" height="2.5"/></g><path d="M14.5 1.5 L14.5 8.5 M12.5 3 L16 3 M12.5 5 L17 5 M12.5 7 L16 7" stroke="#d6d6d6" stroke-width="1" fill="none"/><path d="M17 3 Q19 5 17 7" stroke="#d6d6d6" stroke-width="0.9" fill="none"/><circle cx="26" cy="5" r="0.5" fill="#999"/><circle cx="28" cy="5" r="0.5" fill="#999"/></svg><svg style="left:462px;top:63.5px" width="6" height="4" viewBox="0 0 6 4"><path d="M1 0.5 L0 1.7 L1 3 M3 0.5 L2 1.7 L3 3" stroke="#a8a8a8" stroke-width="0.6" fill="none"/></svg><svg style="left:482px;top:63.5px" width="6" height="4" viewBox="0 0 6 4"><path d="M1 0.5 L0 1.7 L1 3 M3 0.5 L2 1.7 L3 3" stroke="#a8a8a8" stroke-width="0.6" fill="none"/></svg><svg style="left:599.5px;top:63.5px" width="6" height="4" viewBox="0 0 6 4"><path d="M1 0.5 L0 1.7 L1 3 M3 0.5 L2 1.7 L3 3" stroke="#a8a8a8" stroke-width="0.6" fill="none"/></svg><div style="position:absolute;left:463px;top:70px;width:12px;height:1px;background:#474747;"></div><div style="position:absolute;left:463px;top:77.5px;width:13px;height:10px;background:#3b3b3b;"></div><svg style="left:463.5px;top:77.5px" width="12" height="10" viewBox="0 0 12 10"><path d="M4 1 L4 9 L6 7 L9 7 Z" stroke="#d2d2d2" stroke-width="0.9" fill="none"/></svg><svg style="left:463.5px;top:88.5px" width="12" height="10" viewBox="0 0 12 10"><path d="M4 1 L4 9 L6 7 L9 7 Z" fill="#d2d2d2"/><circle cx="10.5" cy="8.5" r="0.5" fill="#aaa"/></svg><svg style="left:463.5px;top:100.0px" width="12" height="10" viewBox="0 0 12 10"><path d="M3 8.5 L4 5 L7.5 1.5 L9.5 3.5 L6 7 Z" stroke="#d2d2d2" stroke-width="0.9" fill="none"/><circle cx="5.6" cy="5.4" r="0.7" fill="#d2d2d2"/><circle cx="10.5" cy="8.5" r="0.5" fill="#aaa"/></svg><svg style="left:463.5px;top:111.5px" width="12" height="10" viewBox="0 0 12 10"><path d="M4 8.5 L5 5 L8.5 1.5 L10.5 3.5 L7 7 Z" stroke="#d2d2d2" stroke-width="0.9" fill="none"/><path d="M1 7 Q2.5 4 3.5 8.5" stroke="#d2d2d2" stroke-width="0.8" fill="none"/></svg><svg style="left:463.5px;top:122.5px" width="12" height="10" viewBox="0 0 12 10"><rect x="2" y="2" width="8" height="6" stroke="#d2d2d2" stroke-width="0.9" fill="#4a4a4a"/><circle cx="10.8" cy="8.8" r="0.5" fill="#aaa"/></svg><svg style="left:463.5px;top:133.5px" width="12" height="10" viewBox="0 0 12 10"><path d="M3 9 L4.5 6.5 L9.5 1.5" stroke="#d2d2d2" stroke-width="1.3" fill="none"/><circle cx="10.5" cy="8.5" r="0.5" fill="#aaa"/></svg><svg style="left:463.5px;top:144.5px" width="12" height="10" viewBox="0 0 12 10"><path d="M2.5 1.5 H9 M5.75 1.5 V9" stroke="#d2d2d2" stroke-width="1.2" fill="none"/></svg><svg style="left:463.5px;top:155.0px" width="12" height="10" viewBox="0 0 12 10"><path d="M8.5 5.5 A3.3 3.3 0 1 1 5 2 L7 2" stroke="#d2d2d2" stroke-width="0.9" fill="none"/><path d="M6 0.8 L7.5 2 L6 3.3" stroke="#d2d2d2" stroke-width="0.8" fill="none"/></svg><svg style="left:463.5px;top:166.0px" width="12" height="10" viewBox="0 0 12 10"><path d="M2 6 L6 2 L9.5 5.5 L5.5 9.5 Z" fill="#d2d2d2"/><path d="M2 9.5 H9" stroke="#d2d2d2" stroke-width="0.7"/></svg><svg style="left:463.5px;top:177.5px" width="12" height="10" viewBox="0 0 12 10"><ellipse cx="5.5" cy="4.5" rx="4" ry="2.6" stroke="#d2d2d2" stroke-width="0.9" fill="none"/><path d="M7 5 L7 9.5 L8.5 8 L10 8.5 Z" fill="#d2d2d2"/></svg><svg style="left:463.5px;top:189.0px" width="12" height="10" viewBox="0 0 12 10"><rect x="2" y="1.5" width="8" height="7" fill="url(#tg)" stroke="#d2d2d2" stroke-width="0.8"/><defs><linearGradient id="tg"><stop offset="0" stop-color="#eee"/><stop offset="1" stop-color="#333"/></linearGradient></defs></svg><svg style="left:463.5px;top:200.5px" width="12" height="10" viewBox="0 0 12 10"><path d="M3 9 L7.5 4.5 M7 2.5 L9.5 5 M8 1.5 L10.5 4" stroke="#d2d2d2" stroke-width="1.3" fill="none"/></svg><svg style="left:463.5px;top:212.0px" width="12" height="10" viewBox="0 0 12 10"><circle cx="3" cy="7.5" r="1.6" stroke="#d2d2d2" stroke-width="0.8" fill="none"/><path d="M4 6.5 L9 2 M4 8 L9 8.5" stroke="#d2d2d2" stroke-width="0.9" fill="none"/><path d="M2 2 Q4 1 5 4" stroke="#d2d2d2" stroke-width="0.8" fill="none"/></svg><svg style="left:463.5px;top:223.0px" width="12" height="10" viewBox="0 0 12 10"><circle cx="4.5" cy="4" r="2.6" stroke="#d2d2d2" stroke-width="0.9" fill="none"/><circle cx="7" cy="6.3" r="2.6" stroke="#d2d2d2" stroke-width="0.9" fill="#535353"/><path d="M7 5 L7 10 L8.6 8.7" fill="#d2d2d2"/></svg><svg style="left:463.5px;top:234.5px" width="12" height="10" viewBox="0 0 12 10"><path d="M3 9 L4 6 L8.5 1.5 L10 3 L5.5 7.5 Z" stroke="#d2d2d2" stroke-width="0.9" fill="none"/></svg><svg style="left:463.5px;top:245.5px" width="12" height="10" viewBox="0 0 12 10"><rect x="2" y="2" width="8" height="6.5" stroke="#d2d2d2" stroke-width="0.9" fill="none"/><rect x="4" y="4" width="4" height="2.5" fill="#6a6a6a"/></svg><svg style="left:463.5px;top:257.0px" width="12" height="10" viewBox="0 0 12 10"><path d="M2.5 2 V9 H9.5 M4.5 1 V7.5 H11" stroke="#d2d2d2" stroke-width="0.9" fill="none"/><rect x="5" y="3" width="3" height="3" fill="#d2d2d2"/></svg><svg style="left:463.5px;top:268.0px" width="12" height="10" viewBox="0 0 12 10"><path d="M2 1.5 V9 M10 1.5 V9" stroke="#d2d2d2" stroke-width="1"/><path d="M3.5 2 L8.5 8 M8.5 2 L3.5 8" stroke="#d2d2d2" stroke-width="0.8"/><rect x="4" y="4" width="4" height="2" fill="#d2d2d2"/></svg><svg style="left:463.5px;top:280.0px" width="12" height="10" viewBox="0 0 12 10"><circle cx="5" cy="4.5" r="3" stroke="#d2d2d2" stroke-width="1" fill="none"/><path d="M7.3 6.8 L10 9.5" stroke="#d2d2d2" stroke-width="1.4"/></svg><svg style="left:463.5px;top:292.0px" width="12" height="10" viewBox="0 0 12 10"><path d="M8.5 5.5 A3.3 3.3 0 1 1 5 2" stroke="#d2d2d2" stroke-width="0.9" fill="none"/><circle cx="4.5" cy="5" r="2" fill="#d2d2d2"/><path d="M9 1.5 Q10.5 3 9.5 5" stroke="#9a9a9a" stroke-width="0.8" fill="none"/></svg><div style="position:absolute;left:463px;top:302.5px;width:8px;height:8px;background:#404040;box-shadow:inset 0 0 0 0.8px #8a8a8a;"></div><div class="t" style="left:465.2px;top:303.2px;font-size:6.5px;color:#9a9a9a;">?</div><div style="position:absolute;left:467.3px;top:306.8px;width:9px;height:9px;background:#f4f4f4;"></div><div style="position:absolute;left:469.6px;top:309.1px;width:4.4px;height:4.4px;background:#333;"></div><svg style="left:463px;top:315.5px" width="13" height="10" viewBox="0 0 13 10"><rect x="0.5" y="2" width="3" height="3" fill="#eee"/><rect x="4" y="2" width="3" height="3" fill="#222" stroke="#ddd" stroke-width="0.5"/><circle cx="10" cy="3.5" r="2.2" fill="#fff"/><path d="M8.5 5 L11.5 2" stroke="#e33" stroke-width="0.9"/></svg><svg style="left:463.5px;top:325.0px" width="12" height="10" viewBox="0 0 12 10"><circle cx="5" cy="5" r="3.3" stroke="#d2d2d2" stroke-width="0.9" fill="none"/><rect x="5" y="3.5" width="4" height="4" fill="#d2d2d2"/></svg><svg style="left:463.5px;top:336.0px" width="12" height="10" viewBox="0 0 12 10"><rect x="1.5" y="3" width="6" height="5" stroke="#d2d2d2" stroke-width="0.9" fill="none"/><rect x="4" y="1.5" width="6.5" height="5" stroke="#d2d2d2" stroke-width="0.9" fill="#535353"/></svg><svg style="left:463.5px;top:350.5px" width="12" height="10" viewBox="0 0 12 10"><circle cx="3" cy="5" r="0.8" fill="#d2d2d2"/><circle cx="6" cy="5" r="0.8" fill="#d2d2d2"/><circle cx="9" cy="5" r="0.8" fill="#d2d2d2"/></svg><div style="position:absolute;left:480px;top:68px;width:117px;height:12.5px;background:#464646;"></div><div style="position:absolute;left:480px;top:68px;width:21px;height:12.5px;background:#535353;"></div><svg style="left:482px;top:70px" width="4" height="9" viewBox="0 0 4 9"><path d="M0.5 3 L2 1.5 L3.5 3 M0.5 6 L2 7.5 L3.5 6" stroke="#8a8a8a" stroke-width="0.6" fill="none"/></svg><svg style="left:487.5px;top:71.3px" width="12.4" height="6.6" viewBox="0 0 12.4 6.6"><path d="M1.12 0.00V5.60 M0.00 1.96H2.24 M2.84 0.40H5.60 M2.84 3.08H5.60 M3.24 0.00V5.60 M5.20 0.00V5.60" stroke="#e4e4e4" stroke-width="0.9" fill="none"/><path d="M7.32 0.00V5.60 M6.20 1.96H8.44 M9.04 0.40H11.80 M9.04 3.08H11.80 M9.44 0.00V5.60 M11.40 0.00V5.60 M9.04 5.20H11.80" stroke="#e4e4e4" stroke-width="0.9" fill="none"/></svg><svg style="left:505.5px;top:71.3px" width="12.4" height="6.6" viewBox="0 0 12.4 6.6"><path d="M1.12 0.00V5.60 M0.00 1.96H2.24 M2.84 0.40H5.60 M2.84 3.08H5.60 M3.24 0.00V5.60 M5.20 0.00V5.60 M2.84 5.20H5.60" stroke="#a9a9a9" stroke-width="0.9" fill="none"/><path d="M7.32 0.00V5.60 M6.20 1.96H8.44 M9.04 0.40H11.80 M9.04 3.08H11.80 M9.44 0.00V5.60 M11.40 0.00V5.60 M9.04 5.20H11.80" stroke="#a9a9a9" stroke-width="0.9" fill="none"/></svg><svg style="left:523.5px;top:71.3px" width="6.2" height="6.6" viewBox="0 0 6.2 6.6"><path d="M0.00 0.50H5.60 M0.50 2.80H5.10 M0.00 5.20H5.60 M2.80 0.00V5.60 M0.50 2.80V5.60" stroke="#a9a9a9" stroke-width="0.9" fill="none"/></svg><svg style="left:542.5px;top:71.3px" width="24.8" height="6.6" viewBox="0 0 24.8 6.6"><path d="M0.40 0.00V5.60 M0.40 0.40H5.60 M1.68 2.52H5.60 M1.68 5.20H5.60 M3.64 0.40V5.60" stroke="#a9a9a9" stroke-width="0.9" fill="none"/><path d="M6.60 0.00V5.60 M6.60 0.40H11.80 M7.88 2.52H11.80 M7.88 5.20H11.80 M9.84 0.40V5.60" stroke="#a9a9a9" stroke-width="0.9" fill="none"/><path d="M12.80 0.00V5.60 M12.80 0.40H18.00 M14.08 2.52H18.00 M14.08 5.20H18.00 M16.04 0.40V5.60" stroke="#a9a9a9" stroke-width="0.9" fill="none"/><path d="M19.72 0.00V5.60 M18.60 1.96H20.84 M21.44 0.40H24.20 M21.44 3.08H24.20 M21.84 0.00V5.60 M23.80 0.00V5.60 M21.44 5.20H24.20" stroke="#a9a9a9" stroke-width="0.9" fill="none"/></svg><div style="position:absolute;left:519.5px;top:69px;width:0.8px;height:11px;background:#3b3b3b;"></div><div style="position:absolute;left:537.5px;top:69px;width:0.8px;height:11px;background:#3b3b3b;"></div><div style="position:absolute;left:567px;top:69px;width:0.8px;height:11px;background:#3b3b3b;"></div><svg style="left:588px;top:71px" width="8" height="7" viewBox="0 0 8 7"><path d="M1 1.5 H6.5 M1 3.5 H6.5 M1 5.5 H6.5" stroke="#9a9a9a" stroke-width="0.9"/></svg><svg style="left:482px;top:82px" width="18" height="8" viewBox="0 0 18 8"><circle cx="3.6" cy="4" r="2.4" fill="#e8e8e8" stroke="#333" stroke-width="0.6"/><path d="M3.6 4 L5.6 6 L6.8 3.5" stroke="#333" stroke-width="0.8" fill="none"/><path d="M10.5 6 Q10.5 2 14 2.3 L13 1.2 M14 2.3 L12.7 3.3" stroke="#7e7e7e" stroke-width="0.8" fill="none"/></svg><div style="position:absolute;left:483px;top:91px;width:9px;height:9px;background:#434343;box-shadow:inset 0 0 0 0.8px #6a6a6a;"></div><div class="t" style="left:485px;top:91.6px;font-size:7px;color:#a0a0a0;">?</div><div style="position:absolute;left:487.6px;top:96.5px;width:8.3px;height:8.3px;background:#f6ece6;"></div><div style="position:absolute;left:489.8px;top:98.7px;width:3.9px;height:3.9px;background:#2e2e2e;"></div><div class="t" style="left:504px;top:85.6px;font-size:7px;color:#c4c4c4;">R</div><div style="position:absolute;left:513px;top:88px;width:53px;height:2.2px;background:linear-gradient(90deg,#00c8e0,#7fe3ee 55%,#fdf0e8);"></div><svg style="left:561.5px;top:89.8px" width="6" height="4" viewBox="0 0 6 4"><path d="M3 0 L5.6 3.6 L0.4 3.6 Z" fill="#d8d8d8"/></svg><div style="position:absolute;left:570px;top:84.8px;width:16px;height:8.2px;background:#474747;"></div><div class="t" style="left:571.5px;top:85.5px;font-size:7px;color:#e2e2e2;transform:scaleX(0.92);transform-origin:0 0;">250</div><div class="t" style="left:504px;top:101.0px;font-size:7px;color:#c4c4c4;">G</div><div style="position:absolute;left:513px;top:103.4px;width:53px;height:2.2px;background:linear-gradient(90deg,#d400e8,#e070ea 35%,#f2c0ee 70%,#fff4f0);"></div><svg style="left:556.7px;top:105.2px" width="6" height="4" viewBox="0 0 6 4"><path d="M3 0 L5.6 3.6 L0.4 3.6 Z" fill="#d8d8d8"/></svg><div style="position:absolute;left:570px;top:100.2px;width:16px;height:8.2px;background:#474747;"></div><div class="t" style="left:571.5px;top:100.9px;font-size:7px;color:#e2e2e2;transform:scaleX(0.92);transform-origin:0 0;">226</div><div class="t" style="left:504px;top:116.5px;font-size:7px;color:#c4c4c4;">B</div><div style="position:absolute;left:513px;top:118.9px;width:53px;height:2.2px;background:linear-gradient(90deg,#f2c400,#f3d040 60%,#fff3e8);"></div><svg style="left:554px;top:120.7px" width="6" height="4" viewBox="0 0 6 4"><path d="M3 0 L5.6 3.6 L0.4 3.6 Z" fill="#d8d8d8"/></svg><div style="position:absolute;left:570px;top:115.7px;width:16px;height:8.2px;background:#474747;"></div><div class="t" style="left:571.5px;top:116.4px;font-size:7px;color:#e2e2e2;transform:scaleX(0.92);transform-origin:0 0;">214</div><svg style="left:483px;top:134px" width="18" height="6" viewBox="0 0 18 6"><rect x="0" y="0" width="5.6" height="5.6" fill="#fff"/><path d="M0.3 5.4 L5.4 0.3" stroke="#e8321e" stroke-width="1"/><rect x="6" y="0" width="5.6" height="5.6" fill="#000"/><rect x="12" y="0" width="5.6" height="5.6" fill="#fff"/></svg><div class="t" style="left:546.8px;top:133.8px;font-size:7px;color:#a8a8a8;">#</div><div style="position:absolute;left:553px;top:133px;width:35.6px;height:8.5px;background:#474747;"></div><div class="t" style="left:555px;top:134px;font-size:7px;color:#e0e0e0;transform:scaleX(0.86);transform-origin:0 0;">FAE2D6</div><div style="position:absolute;left:483.2px;top:145.9px;width:105.4px;height:87px;background:linear-gradient(to bottom, rgba(255,255,255,1) 0%, rgba(255,255,255,0) 40%, rgba(0,0,0,0) 55%, rgba(0,0,0,1) 100%), linear-gradient(90deg,#ff2a1a 0%,#ffd200 17%,#00d000 33%,#00e0e8 50%,#1a2ae8 67%,#e020e0 83%,#ff2a1a 100%);"></div><div style="position:absolute;left:480px;top:236.3px;width:117px;height:1.3px;background:#3e3e3e;"></div><div style="position:absolute;left:480px;top:237.6px;width:117px;height:13px;background:#464646;"></div><div style="position:absolute;left:480px;top:237.6px;width:19px;height:13px;background:#535353;"></div><svg style="left:483.5px;top:241px" width="12.4" height="6.6" viewBox="0 0 12.4 6.6"><path d="M1.12 0.00V5.60 M0.00 1.96H2.24 M2.84 0.40H5.60 M2.84 3.08H5.60 M3.24 0.00V5.60 M5.20 0.00V5.60 M2.84 5.20H5.60" stroke="#e4e4e4" stroke-width="0.9" fill="none"/><path d="M7.32 0.00V5.60 M6.20 1.96H8.44 M9.04 0.40H11.80 M9.04 3.08H11.80 M9.44 0.00V5.60 M11.40 0.00V5.60 M9.04 5.20H11.80" stroke="#e4e4e4" stroke-width="0.9" fill="none"/></svg><svg style="left:588px;top:240.5px" width="8" height="7" viewBox="0 0 8 7"><path d="M1 1.5 H6.5 M1 3.5 H6.5 M1 5.5 H6.5" stroke="#9a9a9a" stroke-width="0.9"/></svg><svg style="left:494.5px;top:254.2px" width="6" height="6" viewBox="0 0 6 6"><rect x="0.8" y="2.6" width="4.4" height="3" fill="#c8c8c8"/><path d="M1.7 2.6 V1.8 A1.3 1.3 0 0 1 4.3 1.8 V2.6" stroke="#c8c8c8" stroke-width="0.8" fill="none"/></svg><div style="position:absolute;left:503px;top:253.0px;width:1.6px;height:8px;background:#777;"></div><svg style="left:507.5px;top:254.5px" width="5" height="5" viewBox="0 0 5 5"><path d="M1.3 0.5 L3.5 2.5 L1.3 4.5" stroke="#cfcfcf" stroke-width="0.8" fill="none"/></svg><div style="position:absolute;left:516.8px;top:253.3px;width:7.5px;height:7.5px;background:#fbfbfb;"></div><svg style="left:527.5px;top:254.2px" width="12.4" height="6.6" viewBox="0 0 12.4 6.6"><path d="M0.00 0.50H5.60 M0.50 2.80H5.10 M0.00 5.20H5.60 M2.80 0.00V5.60 M0.50 2.80V5.60" stroke="#dcdcdc" stroke-width="0.9" fill="none"/><path d="M6.20 0.50H11.80 M6.70 2.80H11.30 M6.20 5.20H11.80 M9.00 0.00V5.60 M6.70 2.80V5.60" stroke="#dcdcdc" stroke-width="0.9" fill="none"/></svg><div class="t" style="left:541px;top:254.3px;font-size:6.8px;color:#dcdcdc;">8</div><svg style="left:579.5px;top:254.3px" width="6" height="6" viewBox="0 0 6 6"><circle cx="3" cy="3" r="2" stroke="#b8b8b8" stroke-width="0.8" fill="none"/></svg><svg style="left:494.5px;top:264.15px" width="6" height="6" viewBox="0 0 6 6"><rect x="0.8" y="2.6" width="4.4" height="3" fill="#c8c8c8"/><path d="M1.7 2.6 V1.8 A1.3 1.3 0 0 1 4.3 1.8 V2.6" stroke="#c8c8c8" stroke-width="0.8" fill="none"/></svg><div style="position:absolute;left:503px;top:262.95px;width:1.6px;height:8px;background:#c98a5a;"></div><svg style="left:507.5px;top:264.45px" width="5" height="5" viewBox="0 0 5 5"><path d="M1.3 0.5 L3.5 2.5 L1.3 4.5" stroke="#cfcfcf" stroke-width="0.8" fill="none"/></svg><div style="position:absolute;left:516.8px;top:263.25px;width:7.5px;height:7.5px;background:#fbfbfb;"></div><div style="position:absolute;left:517.7687284882248px;top:266.64486747387446px;width:4px;height:2.5px;background:#d94a34;opacity:0.85;"></div><svg style="left:527.5px;top:264.15px" width="12.4" height="6.6" viewBox="0 0 12.4 6.6"><path d="M0.00 0.50H5.60 M0.50 2.80H5.10 M0.00 5.20H5.60 M2.80 0.00V5.60 M0.50 2.80V5.60" stroke="#dcdcdc" stroke-width="0.9" fill="none"/><path d="M6.20 0.50H11.80 M6.70 2.80H11.30 M6.20 5.20H11.80 M9.00 0.00V5.60 M6.70 2.80V5.60" stroke="#dcdcdc" stroke-width="0.9" fill="none"/></svg><div class="t" style="left:541px;top:264.25px;font-size:6.8px;color:#dcdcdc;">12</div><svg style="left:579.5px;top:264.25px" width="6" height="6" viewBox="0 0 6 6"><circle cx="3" cy="3" r="2" stroke="#b8b8b8" stroke-width="0.8" fill="none"/></svg><svg style="left:483.5px;top:274.4px" width="7" height="5" viewBox="0 0 7 5"><path d="M0.5 2.5 Q3.5 -0.5 6.5 2.5 Q3.5 5.5 0.5 2.5 Z" fill="#cfcfcf"/><circle cx="3.5" cy="2.5" r="1" fill="#444"/></svg><div style="position:absolute;left:503px;top:272.9px;width:1.6px;height:8px;background:#b84a30;"></div><svg style="left:507.5px;top:274.4px" width="5" height="5" viewBox="0 0 5 5"><path d="M1.3 0.5 L3.5 2.5 L1.3 4.5" stroke="#cfcfcf" stroke-width="0.8" fill="none"/></svg><div style="position:absolute;left:516.8px;top:273.2px;width:7.5px;height:7.5px;background:#fbfbfb;"></div><div style="position:absolute;left:519.4120685437784px;top:276.7956549741187px;width:4px;height:2.5px;background:#d94a34;opacity:0.85;"></div><svg style="left:527.5px;top:274.09999999999997px" width="12.4" height="6.6" viewBox="0 0 12.4 6.6"><path d="M0.00 0.50H5.60 M0.50 2.80H5.10 M0.00 5.20H5.60 M2.80 0.00V5.60 M0.50 2.80V5.60" stroke="#dcdcdc" stroke-width="0.9" fill="none"/><path d="M6.20 0.50H11.80 M6.70 2.80H11.30 M6.20 5.20H11.80 M9.00 0.00V5.60 M6.70 2.80V5.60" stroke="#dcdcdc" stroke-width="0.9" fill="none"/></svg><div class="t" style="left:541px;top:274.2px;font-size:6.8px;color:#dcdcdc;">16</div><svg style="left:579.5px;top:274.2px" width="6" height="6" viewBox="0 0 6 6"><circle cx="3" cy="3" r="2" stroke="#b8b8b8" stroke-width="0.8" fill="none"/></svg><svg style="left:483.5px;top:284.35px" width="7" height="5" viewBox="0 0 7 5"><path d="M0.5 2.5 Q3.5 -0.5 6.5 2.5 Q3.5 5.5 0.5 2.5 Z" fill="#cfcfcf"/><circle cx="3.5" cy="2.5" r="1" fill="#444"/></svg><div style="position:absolute;left:503px;top:282.85px;width:1.6px;height:8px;background:#8a7ad8;"></div><svg style="left:507.5px;top:284.35px" width="5" height="5" viewBox="0 0 5 5"><path d="M1.3 0.5 L3.5 2.5 L1.3 4.5" stroke="#cfcfcf" stroke-width="0.8" fill="none"/></svg><div style="position:absolute;left:516.8px;top:283.15000000000003px;width:7.5px;height:7.5px;background:#fbfbfb;"></div><div style="position:absolute;left:517.9759292541838px;top:285.93845845059195px;width:4px;height:2.5px;background:#d94a34;opacity:0.85;"></div><svg style="left:527.5px;top:284.05px" width="12.4" height="6.6" viewBox="0 0 12.4 6.6"><path d="M0.00 0.50H5.60 M0.50 2.80H5.10 M0.00 5.20H5.60 M2.80 0.00V5.60 M0.50 2.80V5.60" stroke="#dcdcdc" stroke-width="0.9" fill="none"/><path d="M6.20 0.50H11.80 M6.70 2.80H11.30 M6.20 5.20H11.80 M9.00 0.00V5.60 M6.70 2.80V5.60" stroke="#dcdcdc" stroke-width="0.9" fill="none"/></svg><div class="t" style="left:541px;top:284.15000000000003px;font-size:6.8px;color:#dcdcdc;">21</div><svg style="left:579.5px;top:284.15000000000003px" width="6" height="6" viewBox="0 0 6 6"><circle cx="3" cy="3" r="2" stroke="#b8b8b8" stroke-width="0.8" fill="none"/></svg><svg style="left:483.5px;top:294.3px" width="7" height="5" viewBox="0 0 7 5"><path d="M0.5 2.5 Q3.5 -0.5 6.5 2.5 Q3.5 5.5 0.5 2.5 Z" fill="#cfcfcf"/><circle cx="3.5" cy="2.5" r="1" fill="#444"/></svg><div style="position:absolute;left:503px;top:292.8px;width:1.6px;height:8px;background:#c0803a;"></div><svg style="left:507.5px;top:294.3px" width="5" height="5" viewBox="0 0 5 5"><path d="M1.3 0.5 L3.5 2.5 L1.3 4.5" stroke="#cfcfcf" stroke-width="0.8" fill="none"/></svg><div style="position:absolute;left:516.8px;top:293.1px;width:7.5px;height:7.5px;background:#fbfbfb;"></div><svg style="left:527.5px;top:294.0px" width="12.4" height="6.6" viewBox="0 0 12.4 6.6"><path d="M0.00 0.50H5.60 M0.50 2.80H5.10 M0.00 5.20H5.60 M2.80 0.00V5.60 M0.50 2.80V5.60" stroke="#dcdcdc" stroke-width="0.9" fill="none"/><path d="M6.20 0.50H11.80 M6.70 2.80H11.30 M6.20 5.20H11.80 M9.00 0.00V5.60 M6.70 2.80V5.60" stroke="#dcdcdc" stroke-width="0.9" fill="none"/></svg><div class="t" style="left:541px;top:294.1px;font-size:6.8px;color:#dcdcdc;">23</div><svg style="left:579.5px;top:294.1px" width="6" height="6" viewBox="0 0 6 6"><circle cx="3" cy="3" r="2" stroke="#b8b8b8" stroke-width="0.8" fill="none"/></svg><svg style="left:483.5px;top:304.25px" width="7" height="5" viewBox="0 0 7 5"><path d="M0.5 2.5 Q3.5 -0.5 6.5 2.5 Q3.5 5.5 0.5 2.5 Z" fill="#cfcfcf"/><circle cx="3.5" cy="2.5" r="1" fill="#444"/></svg><div style="position:absolute;left:503px;top:302.75px;width:1.6px;height:8px;background:#9a3ad0;"></div><svg style="left:507.5px;top:304.25px" width="5" height="5" viewBox="0 0 5 5"><path d="M1.3 0.5 L3.5 2.5 L1.3 4.5" stroke="#cfcfcf" stroke-width="0.8" fill="none"/></svg><div style="position:absolute;left:516.8px;top:303.05px;width:7.5px;height:7.5px;background:#fbfbfb;"></div><div style="position:absolute;left:518.7458033897794px;top:306.23357397852146px;width:4px;height:2.5px;background:#d94a34;opacity:0.85;"></div><svg style="left:527.5px;top:303.95px" width="12.4" height="6.6" viewBox="0 0 12.4 6.6"><path d="M0.00 0.50H5.60 M0.50 2.80H5.10 M0.00 5.20H5.60 M2.80 0.00V5.60 M0.50 2.80V5.60" stroke="#dcdcdc" stroke-width="0.9" fill="none"/><path d="M6.20 0.50H11.80 M6.70 2.80H11.30 M6.20 5.20H11.80 M9.00 0.00V5.60 M6.70 2.80V5.60" stroke="#dcdcdc" stroke-width="0.9" fill="none"/></svg><div class="t" style="left:541px;top:304.05px;font-size:6.8px;color:#dcdcdc;">17</div><svg style="left:579.5px;top:304.05px" width="6" height="6" viewBox="0 0 6 6"><circle cx="3" cy="3" r="2" stroke="#b8b8b8" stroke-width="0.8" fill="none"/></svg><svg style="left:483.5px;top:314.2px" width="7" height="5" viewBox="0 0 7 5"><path d="M0.5 2.5 Q3.5 -0.5 6.5 2.5 Q3.5 5.5 0.5 2.5 Z" fill="#cfcfcf"/><circle cx="3.5" cy="2.5" r="1" fill="#444"/></svg><div style="position:absolute;left:503px;top:312.7px;width:1.6px;height:8px;background:#2a8a3a;"></div><svg style="left:507.5px;top:314.2px" width="5" height="5" viewBox="0 0 5 5"><path d="M1.3 0.5 L3.5 2.5 L1.3 4.5" stroke="#cfcfcf" stroke-width="0.8" fill="none"/></svg><div style="position:absolute;left:516.8px;top:313.0px;width:7.5px;height:7.5px;background:#fbfbfb;"></div><div style="position:absolute;left:519.0866801675234px;top:316.34390808463945px;width:4px;height:2.5px;background:#d94a34;opacity:0.85;"></div><svg style="left:527.5px;top:313.9px" width="12.4" height="6.6" viewBox="0 0 12.4 6.6"><path d="M0.00 0.50H5.60 M0.50 2.80H5.10 M0.00 5.20H5.60 M2.80 0.00V5.60 M0.50 2.80V5.60" stroke="#dcdcdc" stroke-width="0.9" fill="none"/><path d="M6.20 0.50H11.80 M6.70 2.80H11.30 M6.20 5.20H11.80 M9.00 0.00V5.60 M6.70 2.80V5.60" stroke="#dcdcdc" stroke-width="0.9" fill="none"/></svg><div class="t" style="left:541px;top:314.0px;font-size:6.8px;color:#dcdcdc;">10</div><svg style="left:579.5px;top:314.0px" width="6" height="6" viewBox="0 0 6 6"><circle cx="3" cy="3" r="2" stroke="#b8b8b8" stroke-width="0.8" fill="none"/></svg><div style="position:absolute;left:483px;top:321.65px;width:112.6px;height:9.6px;background:#4b6378;"></div><svg style="left:483.5px;top:324.15px" width="7" height="5" viewBox="0 0 7 5"><path d="M0.5 2.5 Q3.5 -0.5 6.5 2.5 Q3.5 5.5 0.5 2.5 Z" fill="#cfcfcf"/><circle cx="3.5" cy="2.5" r="1" fill="#444"/></svg><div style="position:absolute;left:503px;top:322.65px;width:1.6px;height:8px;background:#1aa0b0;"></div><svg style="left:507.5px;top:324.15px" width="5" height="5" viewBox="0 0 5 5"><path d="M1.3 0.5 L3.5 2.5 L1.3 4.5" stroke="#cfcfcf" stroke-width="0.8" fill="none"/></svg><div style="position:absolute;left:516.8px;top:322.95px;width:7.5px;height:7.5px;background:#fbfbfb;"></div><div style="position:absolute;left:518.1476655296664px;top:324.951698347849px;width:4px;height:2.5px;background:#d94a34;opacity:0.85;"></div><svg style="left:527.5px;top:323.84999999999997px" width="12.4" height="6.6" viewBox="0 0 12.4 6.6"><path d="M0.00 0.50H5.60 M0.50 2.80H5.10 M0.00 5.20H5.60 M2.80 0.00V5.60 M0.50 2.80V5.60" stroke="#dcdcdc" stroke-width="0.9" fill="none"/><path d="M6.20 0.50H11.80 M6.70 2.80H11.30 M6.20 5.20H11.80 M9.00 0.00V5.60 M6.70 2.80V5.60" stroke="#dcdcdc" stroke-width="0.9" fill="none"/></svg><div class="t" style="left:541px;top:323.95px;font-size:6.8px;color:#dcdcdc;">11</div><svg style="left:579.5px;top:323.95px" width="6" height="6" viewBox="0 0 6 6"><circle cx="3" cy="3" r="2" stroke="#b8b8b8" stroke-width="0.8" fill="none"/></svg><svg style="left:585.5px;top:323.95px" width="6" height="6" viewBox="0 0 6 6"><circle cx="3" cy="3" r="2" fill="#0e7f8a" stroke="#1a1a1a" stroke-width="0.8"/></svg><svg style="left:591px;top:321.65px" width="5" height="5" viewBox="0 0 5 5"><path d="M1 1 H4 V4 Z" fill="#ddd"/></svg><svg style="left:483.5px;top:334.1px" width="7" height="5" viewBox="0 0 7 5"><path d="M0.5 2.5 Q3.5 -0.5 6.5 2.5 Q3.5 5.5 0.5 2.5 Z" fill="#cfcfcf"/><circle cx="3.5" cy="2.5" r="1" fill="#444"/></svg><div style="position:absolute;left:503px;top:332.6px;width:1.6px;height:8px;background:#d0905a;"></div><svg style="left:507.5px;top:334.1px" width="5" height="5" viewBox="0 0 5 5"><path d="M1.3 0.5 L3.5 2.5 L1.3 4.5" stroke="#cfcfcf" stroke-width="0.8" fill="none"/></svg><div style="position:absolute;left:516.8px;top:332.90000000000003px;width:7.5px;height:7.5px;background:#fbfbfb;"></div><svg style="left:527.5px;top:333.8px" width="12.4" height="6.6" viewBox="0 0 12.4 6.6"><path d="M0.00 0.50H5.60 M0.50 2.80H5.10 M0.00 5.20H5.60 M2.80 0.00V5.60 M0.50 2.80V5.60" stroke="#dcdcdc" stroke-width="0.9" fill="none"/><path d="M6.20 0.50H11.80 M6.70 2.80H11.30 M6.20 5.20H11.80 M9.00 0.00V5.60 M6.70 2.80V5.60" stroke="#dcdcdc" stroke-width="0.9" fill="none"/></svg><div class="t" style="left:541px;top:333.90000000000003px;font-size:6.8px;color:#dcdcdc;">13</div><svg style="left:579.5px;top:333.90000000000003px" width="6" height="6" viewBox="0 0 6 6"><circle cx="3" cy="3" r="2" stroke="#b8b8b8" stroke-width="0.8" fill="none"/></svg><svg style="left:483.5px;top:344.05px" width="7" height="5" viewBox="0 0 7 5"><path d="M0.5 2.5 Q3.5 -0.5 6.5 2.5 Q3.5 5.5 0.5 2.5 Z" fill="#cfcfcf"/><circle cx="3.5" cy="2.5" r="1" fill="#444"/></svg><div style="position:absolute;left:503px;top:342.55px;width:1.6px;height:8px;background:#3a4ae0;"></div><svg style="left:507.5px;top:344.05px" width="5" height="5" viewBox="0 0 5 5"><path d="M1.3 0.5 L3.5 2.5 L1.3 4.5" stroke="#cfcfcf" stroke-width="0.8" fill="none"/></svg><div style="position:absolute;left:516.8px;top:342.85px;width:7.5px;height:7.5px;background:#fbfbfb;"></div><div style="position:absolute;left:518.42601471563px;top:345.2966238627901px;width:4px;height:2.5px;background:#d94a34;opacity:0.85;"></div><svg style="left:527.5px;top:343.75px" width="12.4" height="6.6" viewBox="0 0 12.4 6.6"><path d="M0.00 0.50H5.60 M0.50 2.80H5.10 M0.00 5.20H5.60 M2.80 0.00V5.60 M0.50 2.80V5.60" stroke="#dcdcdc" stroke-width="0.9" fill="none"/><path d="M6.20 0.50H11.80 M6.70 2.80H11.30 M6.20 5.20H11.80 M9.00 0.00V5.60 M6.70 2.80V5.60" stroke="#dcdcdc" stroke-width="0.9" fill="none"/></svg><div class="t" style="left:541px;top:343.85px;font-size:6.8px;color:#dcdcdc;">4</div><svg style="left:579.5px;top:343.85px" width="6" height="6" viewBox="0 0 6 6"><circle cx="3" cy="3" r="2" stroke="#b8b8b8" stroke-width="0.8" fill="none"/></svg><svg style="left:483.5px;top:354.0px" width="7" height="5" viewBox="0 0 7 5"><path d="M0.5 2.5 Q3.5 -0.5 6.5 2.5 Q3.5 5.5 0.5 2.5 Z" fill="#cfcfcf"/><circle cx="3.5" cy="2.5" r="1" fill="#444"/></svg><div style="position:absolute;left:503px;top:352.5px;width:1.6px;height:8px;background:#b05a30;"></div><svg style="left:507.5px;top:354.0px" width="5" height="5" viewBox="0 0 5 5"><path d="M1.3 0.5 L3.5 2.5 L1.3 4.5" stroke="#cfcfcf" stroke-width="0.8" fill="none"/></svg><div style="position:absolute;left:516.8px;top:352.8px;width:7.5px;height:7.5px;background:#fbfbfb;"></div><div style="position:absolute;left:518.6428051893798px;top:355.35777810935025px;width:4px;height:2.5px;background:#d94a34;opacity:0.85;"></div><svg style="left:527.5px;top:353.7px" width="12.4" height="6.6" viewBox="0 0 12.4 6.6"><path d="M0.00 0.50H5.60 M0.50 2.80H5.10 M0.00 5.20H5.60 M2.80 0.00V5.60 M0.50 2.80V5.60" stroke="#dcdcdc" stroke-width="0.9" fill="none"/><path d="M6.20 0.50H11.80 M6.70 2.80H11.30 M6.20 5.20H11.80 M9.00 0.00V5.60 M6.70 2.80V5.60" stroke="#dcdcdc" stroke-width="0.9" fill="none"/></svg><div class="t" style="left:541px;top:353.8px;font-size:6.8px;color:#dcdcdc;">14</div><svg style="left:579.5px;top:353.8px" width="6" height="6" viewBox="0 0 6 6"><circle cx="3" cy="3" r="2" stroke="#b8b8b8" stroke-width="0.8" fill="none"/></svg><svg style="left:483.5px;top:363.95px" width="7" height="5" viewBox="0 0 7 5"><path d="M0.5 2.5 Q3.5 -0.5 6.5 2.5 Q3.5 5.5 0.5 2.5 Z" fill="#cfcfcf"/><circle cx="3.5" cy="2.5" r="1" fill="#444"/></svg><div style="position:absolute;left:503px;top:362.45px;width:1.6px;height:8px;background:#a04a30;"></div><svg style="left:507.5px;top:363.95px" width="5" height="5" viewBox="0 0 5 5"><path d="M1.3 0.5 L3.5 2.5 L1.3 4.5" stroke="#cfcfcf" stroke-width="0.8" fill="none"/></svg><div style="position:absolute;left:516.8px;top:362.75px;width:7.5px;height:7.5px;background:#fbfbfb;"></div><div style="position:absolute;left:518.4047591070197px;top:365.56954477216095px;width:4px;height:2.5px;background:#d94a34;opacity:0.85;"></div><svg style="left:527.5px;top:363.65px" width="12.4" height="6.6" viewBox="0 0 12.4 6.6"><path d="M0.00 0.50H5.60 M0.50 2.80H5.10 M0.00 5.20H5.60 M2.80 0.00V5.60 M0.50 2.80V5.60" stroke="#dcdcdc" stroke-width="0.9" fill="none"/><path d="M6.20 0.50H11.80 M6.70 2.80H11.30 M6.20 5.20H11.80 M9.00 0.00V5.60 M6.70 2.80V5.60" stroke="#dcdcdc" stroke-width="0.9" fill="none"/></svg><div class="t" style="left:541px;top:363.75px;font-size:6.8px;color:#dcdcdc;">15</div><svg style="left:579.5px;top:363.75px" width="6" height="6" viewBox="0 0 6 6"><circle cx="3" cy="3" r="2" stroke="#b8b8b8" stroke-width="0.8" fill="none"/></svg><svg style="left:483.5px;top:373.9px" width="7" height="5" viewBox="0 0 7 5"><path d="M0.5 2.5 Q3.5 -0.5 6.5 2.5 Q3.5 5.5 0.5 2.5 Z" fill="#cfcfcf"/><circle cx="3.5" cy="2.5" r="1" fill="#444"/></svg><div style="position:absolute;left:503px;top:372.4px;width:1.6px;height:8px;background:#c0302a;"></div><svg style="left:507.5px;top:373.9px" width="5" height="5" viewBox="0 0 5 5"><path d="M1.3 0.5 L3.5 2.5 L1.3 4.5" stroke="#cfcfcf" stroke-width="0.8" fill="none"/></svg><div style="position:absolute;left:516.8px;top:372.7px;width:7.5px;height:7.5px;background:#fbfbfb;"></div><div style="position:absolute;left:518.4491413573771px;top:375.71494500531446px;width:4px;height:2.5px;background:#d94a34;opacity:0.85;"></div><svg style="left:527.5px;top:373.59999999999997px" width="12.4" height="6.6" viewBox="0 0 12.4 6.6"><path d="M0.00 0.50H5.60 M0.50 2.80H5.10 M0.00 5.20H5.60 M2.80 0.00V5.60 M0.50 2.80V5.60" stroke="#dcdcdc" stroke-width="0.9" fill="none"/><path d="M6.20 0.50H11.80 M6.70 2.80H11.30 M6.20 5.20H11.80 M9.00 0.00V5.60 M6.70 2.80V5.60" stroke="#dcdcdc" stroke-width="0.9" fill="none"/></svg><div class="t" style="left:541px;top:373.7px;font-size:6.8px;color:#dcdcdc;">22</div><svg style="left:579.5px;top:373.7px" width="6" height="6" viewBox="0 0 6 6"><circle cx="3" cy="3" r="2" stroke="#b8b8b8" stroke-width="0.8" fill="none"/></svg><div style="position:absolute;left:601px;top:69.5px;width:13px;height:1px;background:#474747;"></div><svg style="left:602px;top:73.1px" width="12" height="11" viewBox="0 0 12 11"><circle cx="6" cy="5.5" r="3.2" stroke="#d0d0d0" stroke-width="1.2" fill="none" stroke-dasharray="1.2 0.8"/><circle cx="6" cy="5.5" r="1.6" fill="#d0d0d0"/></svg><svg style="left:602px;top:86.3px" width="12" height="11" viewBox="0 0 12 11"><circle cx="6" cy="5.5" r="4.2" fill="#d0d0d0"/><path d="M6 2.8 V4 M6 5 V8.5" stroke="#444" stroke-width="1.1"/></svg><div style="position:absolute;left:601px;top:100.5px;width:13px;height:1px;background:#454545;"></div><svg style="left:602px;top:104.5px" width="12" height="11" viewBox="0 0 12 11"><circle cx="6" cy="5.5" r="3.5" fill="#d8d8d8"/><circle cx="6" cy="5.5" r="2" fill="#aaa"/></svg><svg style="left:602px;top:118.5px" width="12" height="11" viewBox="0 0 12 11"><rect x="3.5" y="1.5" width="6" height="6" stroke="#d0d0d0" stroke-width="0.9" fill="none"/><rect x="1.5" y="4.5" width="5" height="5" stroke="#d0d0d0" stroke-width="0.9" fill="#535353"/></svg><div style="position:absolute;left:601px;top:133.4px;width:13px;height:1px;background:#454545;"></div><svg style="left:602px;top:136.1px" width="12" height="11" viewBox="0 0 12 11"><rect x="2" y="1" width="3.5" height="3.5" stroke="#d0d0d0" stroke-width="0.8" fill="none"/><rect x="7" y="1.5" width="2.5" height="2.5" fill="#d0d0d0"/><rect x="7" y="5" width="2.5" height="2.5" fill="#d0d0d0"/><rect x="1.5" y="9" width="8.5" height="1.2" fill="#d0d0d0"/><rect x="2" y="5" width="3.5" height="3" fill="#d0d0d0"/></svg><svg style="left:602px;top:150.3px" width="12" height="11" viewBox="0 0 12 11"><rect x="2" y="1.5" width="8" height="8" fill="url(#sg)" stroke="#d0d0d0" stroke-width="0.8"/><defs><linearGradient id="sg"><stop offset="0" stop-color="#555"/><stop offset="1" stop-color="#eee"/></linearGradient></defs></svg><svg style="left:602px;top:163.2px" width="12" height="11" viewBox="0 0 12 11"><circle cx="5" cy="5" r="3.4" fill="#bbb"/><circle cx="7" cy="6.5" r="3.4" fill="#ddd" opacity="0.85"/></svg><div style="position:absolute;left:601px;top:179.3px;width:13px;height:1px;background:#454545;"></div><svg style="left:602px;top:185.0px" width="12" height="11" viewBox="0 0 12 11"><path d="M1.5 9.5 L4.5 1.5 L7.5 9.5 M2.7 6.5 H6.3" stroke="#d0d0d0" stroke-width="1" fill="none"/><path d="M9.5 1 V10" stroke="#d0d0d0" stroke-width="0.7"/></svg><svg style="left:602px;top:196.0px" width="12" height="11" viewBox="0 0 12 11"><path d="M6 1.5 H9.5 M6.8 1.5 V9.5 M8.5 1.5 V9.5" stroke="#d0d0d0" stroke-width="0.9" fill="none"/><circle cx="5" cy="3.8" r="2.3" fill="#d0d0d0"/></svg><svg style="left:602px;top:209.5px" width="12" height="11" viewBox="0 0 12 11"><ellipse cx="6" cy="5.5" rx="2.6" ry="4" stroke="#d0d0d0" stroke-width="1.1" fill="none" transform="rotate(15 6 5.5)"/></svg><svg style="left:602px;top:223.0px" width="12" height="11" viewBox="0 0 12 11"><g fill="#d0d0d0"><rect x="1.5" y="1.5" width="2" height="2"/><rect x="8.5" y="1.5" width="2" height="2"/><rect x="1.5" y="7.5" width="2" height="2"/><rect x="8.5" y="7.5" width="2" height="2"/></g><rect x="3.8" y="3.8" width="4.4" height="3.4" stroke="#d0d0d0" stroke-width="0.7" fill="none"/></svg><svg style="left:602px;top:235.3px" width="12" height="11" viewBox="0 0 12 11"><path d="M2 1 V10" stroke="#d0d0d0" stroke-width="0.9"/><rect x="3" y="2" width="4" height="3" fill="#d0d0d0"/><rect x="3" y="6.3" width="7" height="3" fill="#d0d0d0"/></svg><svg style="left:602px;top:249.1px" width="12" height="11" viewBox="0 0 12 11"><rect x="1.5" y="1.5" width="6" height="5" fill="#d0d0d0"/><rect x="4.5" y="4.5" width="6" height="5.5" fill="#eee" stroke="#535353" stroke-width="0.6"/></svg><div style="position:absolute;left:601px;top:262.8px;width:13px;height:1px;background:#454545;"></div><svg style="left:602px;top:268.3px" width="12" height="11" viewBox="0 0 12 11"><rect x="1.5" y="2" width="8.5" height="8" stroke="#d0d0d0" stroke-width="0.9" fill="none"/><path d="M5 7 L10.5 1.5 M7.5 1.5 H10.5 V4.5" stroke="#d0d0d0" stroke-width="0.9" fill="none"/></svg><div style="position:absolute;left:601px;top:283.4px;width:13px;height:1px;background:#454545;"></div><svg style="left:602px;top:287.5px" width="12" height="11" viewBox="0 0 12 11"><path d="M6 1 V6 M3.5 3 L6 1 L8.5 3" stroke="#d0d0d0" stroke-width="0.9" fill="none"/><rect x="2.5" y="6" width="7" height="4" fill="#d0d0d0"/></svg><svg style="left:602px;top:299.9px" width="12" height="11" viewBox="0 0 12 11"><path d="M1.5 2.5 H10.5 M1.5 5.5 H10.5 M1.5 8.5 H10.5" stroke="#d0d0d0" stroke-width="1" fill="none"/></svg><svg style="left:602px;top:312.2px" width="12" height="11" viewBox="0 0 12 11"><circle cx="6" cy="3.3" r="2" fill="#d0d0d0"/><circle cx="3.3" cy="6.5" r="2" fill="#d0d0d0"/><circle cx="8.7" cy="6.5" r="2" fill="#d0d0d0"/><path d="M6 6 L5 10 H7 Z" fill="#d0d0d0"/></svg><div style="position:absolute;left:618px;top:62.7px;width:102px;height:12.3px;background:#4e4e4e;"></div><svg style="left:620.5px;top:65.5px" width="7" height="7" viewBox="0 0 7 7"><path d="M1.3 1.3 L5.3 5.3 M5.3 1.3 L1.3 5.3" stroke="#cfcfcf" stroke-width="0.9"/></svg><div class="t" style="left:629px;top:65.6px;font-size:6.8px;color:#d8d8d8;transform:scaleX(0.82);transform-origin:0 0;">chang3.ai* @ 200% (RGB/GPU</div><svg style="left:705px;top:66.3px" width="11.6" height="6.2" viewBox="0 0 11.6 6.2"><path d="M1.04 0.00V5.20 M0.00 1.82H2.08 M2.68 0.40H5.20 M2.68 2.86H5.20 M3.08 0.00V5.20 M4.80 0.00V5.20" stroke="#d0d0d0" stroke-width="0.9" fill="none"/><path d="M6.84 0.00V5.20 M5.80 1.82H7.88 M8.48 0.40H11.00 M8.48 2.86H11.00 M8.88 0.00V5.20 M10.60 0.00V5.20" stroke="#d0d0d0" stroke-width="0.9" fill="none"/></svg><div class="t" style="left:716px;top:65.6px;font-size:6.8px;color:#d8d8d8;">)</div><svg style="left:0;top:0" width="1156" height="84" viewBox="0 0 1156 84"><clipPath id="rc"><rect x="625" y="75" width="531" height="8"/></clipPath><g clip-path="url(#rc)"><rect x="613.45" y="75" width="0.8" height="8" fill="#8a8a8a"/><rect x="621.88" y="80.5" width="0.7" height="2.5" fill="#777"/><rect x="630.30" y="80.5" width="0.7" height="2.5" fill="#777"/><rect x="638.73" y="79.5" width="0.7" height="3.5" fill="#777"/><rect x="647.15" y="80.5" width="0.7" height="2.5" fill="#777"/><rect x="655.58" y="80.5" width="0.7" height="2.5" fill="#777"/><rect x="664.00" y="75" width="0.8" height="8" fill="#8a8a8a"/><rect x="672.42" y="80.5" width="0.7" height="2.5" fill="#777"/><rect x="680.85" y="80.5" width="0.7" height="2.5" fill="#777"/><rect x="689.27" y="79.5" width="0.7" height="3.5" fill="#777"/><rect x="697.70" y="80.5" width="0.7" height="2.5" fill="#777"/><rect x="706.12" y="80.5" width="0.7" height="2.5" fill="#777"/><rect x="714.55" y="75" width="0.8" height="8" fill="#8a8a8a"/><rect x="722.97" y="80.5" width="0.7" height="2.5" fill="#777"/><rect x="731.40" y="80.5" width="0.7" height="2.5" fill="#777"/><rect x="739.82" y="79.5" width="0.7" height="3.5" fill="#777"/><rect x="748.25" y="80.5" width="0.7" height="2.5" fill="#777"/><rect x="756.67" y="80.5" width="0.7" height="2.5" fill="#777"/><rect x="765.10" y="75" width="0.8" height="8" fill="#8a8a8a"/><rect x="773.52" y="80.5" width="0.7" height="2.5" fill="#777"/><rect x="781.95" y="80.5" width="0.7" height="2.5" fill="#777"/><rect x="790.38" y="79.5" width="0.7" height="3.5" fill="#777"/><rect x="798.80" y="80.5" width="0.7" height="2.5" fill="#777"/><rect x="807.23" y="80.5" width="0.7" height="2.5" fill="#777"/><rect x="815.65" y="75" width="0.8" height="8" fill="#8a8a8a"/><rect x="824.07" y="80.5" width="0.7" height="2.5" fill="#777"/><rect x="832.50" y="80.5" width="0.7" height="2.5" fill="#777"/><rect x="840.92" y="79.5" width="0.7" height="3.5" fill="#777"/><rect x="849.35" y="80.5" width="0.7" height="2.5" fill="#777"/><rect x="857.77" y="80.5" width="0.7" height="2.5" fill="#777"/><rect x="866.20" y="75" width="0.8" height="8" fill="#8a8a8a"/><rect x="874.62" y="80.5" width="0.7" height="2.5" fill="#777"/><rect x="883.05" y="80.5" width="0.7" height="2.5" fill="#777"/><rect x="891.48" y="79.5" width="0.7" height="3.5" fill="#777"/><rect x="899.90" y="80.5" width="0.7" height="2.5" fill="#777"/><rect x="908.33" y="80.5" width="0.7" height="2.5" fill="#777"/><rect x="916.75" y="75" width="0.8" height="8" fill="#8a8a8a"/><rect x="925.17" y="80.5" width="0.7" height="2.5" fill="#777"/><rect x="933.60" y="80.5" width="0.7" height="2.5" fill="#777"/><rect x="942.02" y="79.5" width="0.7" height="3.5" fill="#777"/><rect x="950.45" y="80.5" width="0.7" height="2.5" fill="#777"/><rect x="958.88" y="80.5" width="0.7" height="2.5" fill="#777"/><rect x="967.30" y="75" width="0.8" height="8" fill="#8a8a8a"/><rect x="975.72" y="80.5" width="0.7" height="2.5" fill="#777"/><rect x="984.15" y="80.5" width="0.7" height="2.5" fill="#777"/><rect x="992.57" y="79.5" width="0.7" height="3.5" fill="#777"/><rect x="1001.00" y="80.5" width="0.7" height="2.5" fill="#777"/><rect x="1009.42" y="80.5" width="0.7" height="2.5" fill="#777"/><rect x="1017.85" y="75" width="0.8" height="8" fill="#8a8a8a"/><rect x="1026.27" y="80.5" width="0.7" height="2.5" fill="#777"/><rect x="1034.70" y="80.5" width="0.7" height="2.5" fill="#777"/><rect x="1043.12" y="79.5" width="0.7" height="3.5" fill="#777"/><rect x="1051.55" y="80.5" width="0.7" height="2.5" fill="#777"/><rect x="1059.97" y="80.5" width="0.7" height="2.5" fill="#777"/><rect x="1068.40" y="75" width="0.8" height="8" fill="#8a8a8a"/><rect x="1076.83" y="80.5" width="0.7" height="2.5" fill="#777"/><rect x="1085.25" y="80.5" width="0.7" height="2.5" fill="#777"/><rect x="1093.68" y="79.5" width="0.7" height="3.5" fill="#777"/><rect x="1102.10" y="80.5" width="0.7" height="2.5" fill="#777"/><rect x="1110.53" y="80.5" width="0.7" height="2.5" fill="#777"/><rect x="1118.95" y="75" width="0.8" height="8" fill="#8a8a8a"/><rect x="1127.38" y="80.5" width="0.7" height="2.5" fill="#777"/><rect x="1135.80" y="80.5" width="0.7" height="2.5" fill="#777"/><rect x="1144.23" y="79.5" width="0.7" height="3.5" fill="#777"/><rect x="1152.65" y="80.5" width="0.7" height="2.5" fill="#777"/><rect x="1161.08" y="80.5" width="0.7" height="2.5" fill="#777"/><rect x="1169.50" y="75" width="0.8" height="8" fill="#8a8a8a"/><rect x="1177.92" y="80.5" width="0.7" height="2.5" fill="#777"/><rect x="1186.35" y="80.5" width="0.7" height="2.5" fill="#777"/><rect x="1194.78" y="79.5" width="0.7" height="3.5" fill="#777"/><rect x="1203.20" y="80.5" width="0.7" height="2.5" fill="#777"/><rect x="1211.62" y="80.5" width="0.7" height="2.5" fill="#777"/></g></svg><div class="t" style="left:665.6px;top:76.2px;font-size:5.0px;color:#a8a8a8;transform:scaleX(0.85);transform-origin:0 0;">360</div><div class="t" style="left:716.15px;top:76.2px;font-size:5.0px;color:#a8a8a8;transform:scaleX(0.85);transform-origin:0 0;">396</div><div class="t" style="left:766.7px;top:76.2px;font-size:5.0px;color:#a8a8a8;transform:scaleX(0.85);transform-origin:0 0;">432</div><div class="t" style="left:817.25px;top:76.2px;font-size:5.0px;color:#a8a8a8;transform:scaleX(0.85);transform-origin:0 0;">468</div><div class="t" style="left:867.8000000000001px;top:76.2px;font-size:5.0px;color:#a8a8a8;transform:scaleX(0.85);transform-origin:0 0;">504</div><div class="t" style="left:918.35px;top:76.2px;font-size:5.0px;color:#a8a8a8;transform:scaleX(0.85);transform-origin:0 0;">540</div><div class="t" style="left:968.9px;top:76.2px;font-size:5.0px;color:#a8a8a8;transform:scaleX(0.85);transform-origin:0 0;">576</div><div class="t" style="left:1019.4499999999999px;top:76.2px;font-size:5.0px;color:#a8a8a8;transform:scaleX(0.85);transform-origin:0 0;">612</div><div class="t" style="left:1070.0px;top:76.2px;font-size:5.0px;color:#a8a8a8;transform:scaleX(0.85);transform-origin:0 0;">648</div><div class="t" style="left:1120.55px;top:76.2px;font-size:5.0px;color:#a8a8a8;transform:scaleX(0.85);transform-origin:0 0;">684</div><svg style="left:0;top:0" width="626" height="483" viewBox="0 0 626 483"><clipPath id="vc"><rect x="617" y="83" width="8" height="400"/></clipPath><g clip-path="url(#vc)"><rect x="617" y="69.95" width="8" height="0.8" fill="#8a8a8a"/><rect x="622.5" y="78.38" width="2.5" height="0.7" fill="#777"/><rect x="622.5" y="86.80" width="2.5" height="0.7" fill="#777"/><rect x="621.5" y="95.22" width="3.5" height="0.7" fill="#777"/><rect x="622.5" y="103.65" width="2.5" height="0.7" fill="#777"/><rect x="622.5" y="112.08" width="2.5" height="0.7" fill="#777"/><rect x="617" y="120.50" width="8" height="0.8" fill="#8a8a8a"/><rect x="622.5" y="128.93" width="2.5" height="0.7" fill="#777"/><rect x="622.5" y="137.35" width="2.5" height="0.7" fill="#777"/><rect x="621.5" y="145.78" width="3.5" height="0.7" fill="#777"/><rect x="622.5" y="154.20" width="2.5" height="0.7" fill="#777"/><rect x="622.5" y="162.62" width="2.5" height="0.7" fill="#777"/><rect x="617" y="171.05" width="8" height="0.8" fill="#8a8a8a"/><rect x="622.5" y="179.48" width="2.5" height="0.7" fill="#777"/><rect x="622.5" y="187.90" width="2.5" height="0.7" fill="#777"/><rect x="621.5" y="196.33" width="3.5" height="0.7" fill="#777"/><rect x="622.5" y="204.75" width="2.5" height="0.7" fill="#777"/><rect x="622.5" y="213.18" width="2.5" height="0.7" fill="#777"/><rect x="617" y="221.60" width="8" height="0.8" fill="#8a8a8a"/><rect x="622.5" y="230.03" width="2.5" height="0.7" fill="#777"/><rect x="622.5" y="238.45" width="2.5" height="0.7" fill="#777"/><rect x="621.5" y="246.88" width="3.5" height="0.7" fill="#777"/><rect x="622.5" y="255.30" width="2.5" height="0.7" fill="#777"/><rect x="622.5" y="263.73" width="2.5" height="0.7" fill="#777"/><rect x="617" y="272.15" width="8" height="0.8" fill="#8a8a8a"/><rect x="622.5" y="280.57" width="2.5" height="0.7" fill="#777"/><rect x="622.5" y="289.00" width="2.5" height="0.7" fill="#777"/><rect x="621.5" y="297.42" width="3.5" height="0.7" fill="#777"/><rect x="622.5" y="305.85" width="2.5" height="0.7" fill="#777"/><rect x="622.5" y="314.27" width="2.5" height="0.7" fill="#777"/><rect x="617" y="322.70" width="8" height="0.8" fill="#8a8a8a"/><rect x="622.5" y="331.12" width="2.5" height="0.7" fill="#777"/><rect x="622.5" y="339.55" width="2.5" height="0.7" fill="#777"/><rect x="621.5" y="347.97" width="3.5" height="0.7" fill="#777"/><rect x="622.5" y="356.40" width="2.5" height="0.7" fill="#777"/><rect x="622.5" y="364.82" width="2.5" height="0.7" fill="#777"/><rect x="617" y="373.25" width="8" height="0.8" fill="#8a8a8a"/><rect x="622.5" y="381.68" width="2.5" height="0.7" fill="#777"/><rect x="622.5" y="390.10" width="2.5" height="0.7" fill="#777"/><rect x="621.5" y="398.52" width="3.5" height="0.7" fill="#777"/><rect x="622.5" y="406.95" width="2.5" height="0.7" fill="#777"/><rect x="622.5" y="415.38" width="2.5" height="0.7" fill="#777"/><rect x="617" y="423.80" width="8" height="0.8" fill="#8a8a8a"/><rect x="622.5" y="432.22" width="2.5" height="0.7" fill="#777"/><rect x="622.5" y="440.65" width="2.5" height="0.7" fill="#777"/><rect x="621.5" y="449.07" width="3.5" height="0.7" fill="#777"/><rect x="622.5" y="457.50" width="2.5" height="0.7" fill="#777"/><rect x="622.5" y="465.92" width="2.5" height="0.7" fill="#777"/><rect x="617" y="474.35" width="8" height="0.8" fill="#8a8a8a"/><rect x="622.5" y="482.77" width="2.5" height="0.7" fill="#777"/><rect x="622.5" y="491.20" width="2.5" height="0.7" fill="#777"/><rect x="621.5" y="499.62" width="3.5" height="0.7" fill="#777"/><rect x="622.5" y="508.05" width="2.5" height="0.7" fill="#777"/><rect x="622.5" y="516.47" width="2.5" height="0.7" fill="#777"/><rect x="617" y="524.90" width="8" height="0.8" fill="#8a8a8a"/><rect x="622.5" y="533.32" width="2.5" height="0.7" fill="#777"/><rect x="622.5" y="541.75" width="2.5" height="0.7" fill="#777"/><rect x="621.5" y="550.17" width="3.5" height="0.7" fill="#777"/><rect x="622.5" y="558.60" width="2.5" height="0.7" fill="#777"/><rect x="622.5" y="567.02" width="2.5" height="0.7" fill="#777"/></g></svg><div class="t" style="left:617.6px;top:118.0px;font-size:5px;color:#a8a8a8;transform:rotate(-90deg) scaleX(0.85);transform-origin:0 0;">216</div><div class="t" style="left:617.6px;top:168.6px;font-size:5px;color:#a8a8a8;transform:rotate(-90deg) scaleX(0.85);transform-origin:0 0;">252</div><div class="t" style="left:617.6px;top:219.1px;font-size:5px;color:#a8a8a8;transform:rotate(-90deg) scaleX(0.85);transform-origin:0 0;">288</div><div class="t" style="left:617.6px;top:269.6px;font-size:5px;color:#a8a8a8;transform:rotate(-90deg) scaleX(0.85);transform-origin:0 0;">324</div><div class="t" style="left:617.6px;top:320.2px;font-size:5px;color:#a8a8a8;transform:rotate(-90deg) scaleX(0.85);transform-origin:0 0;">360</div><div class="t" style="left:617.6px;top:370.8px;font-size:5px;color:#a8a8a8;transform:rotate(-90deg) scaleX(0.85);transform-origin:0 0;">396</div><div class="t" style="left:617.6px;top:421.3px;font-size:5px;color:#a8a8a8;transform:rotate(-90deg) scaleX(0.85);transform-origin:0 0;">432</div><div class="t" style="left:617.6px;top:471.8px;font-size:5px;color:#a8a8a8;transform:rotate(-90deg) scaleX(0.85);transform-origin:0 0;">468</div></body></html>
